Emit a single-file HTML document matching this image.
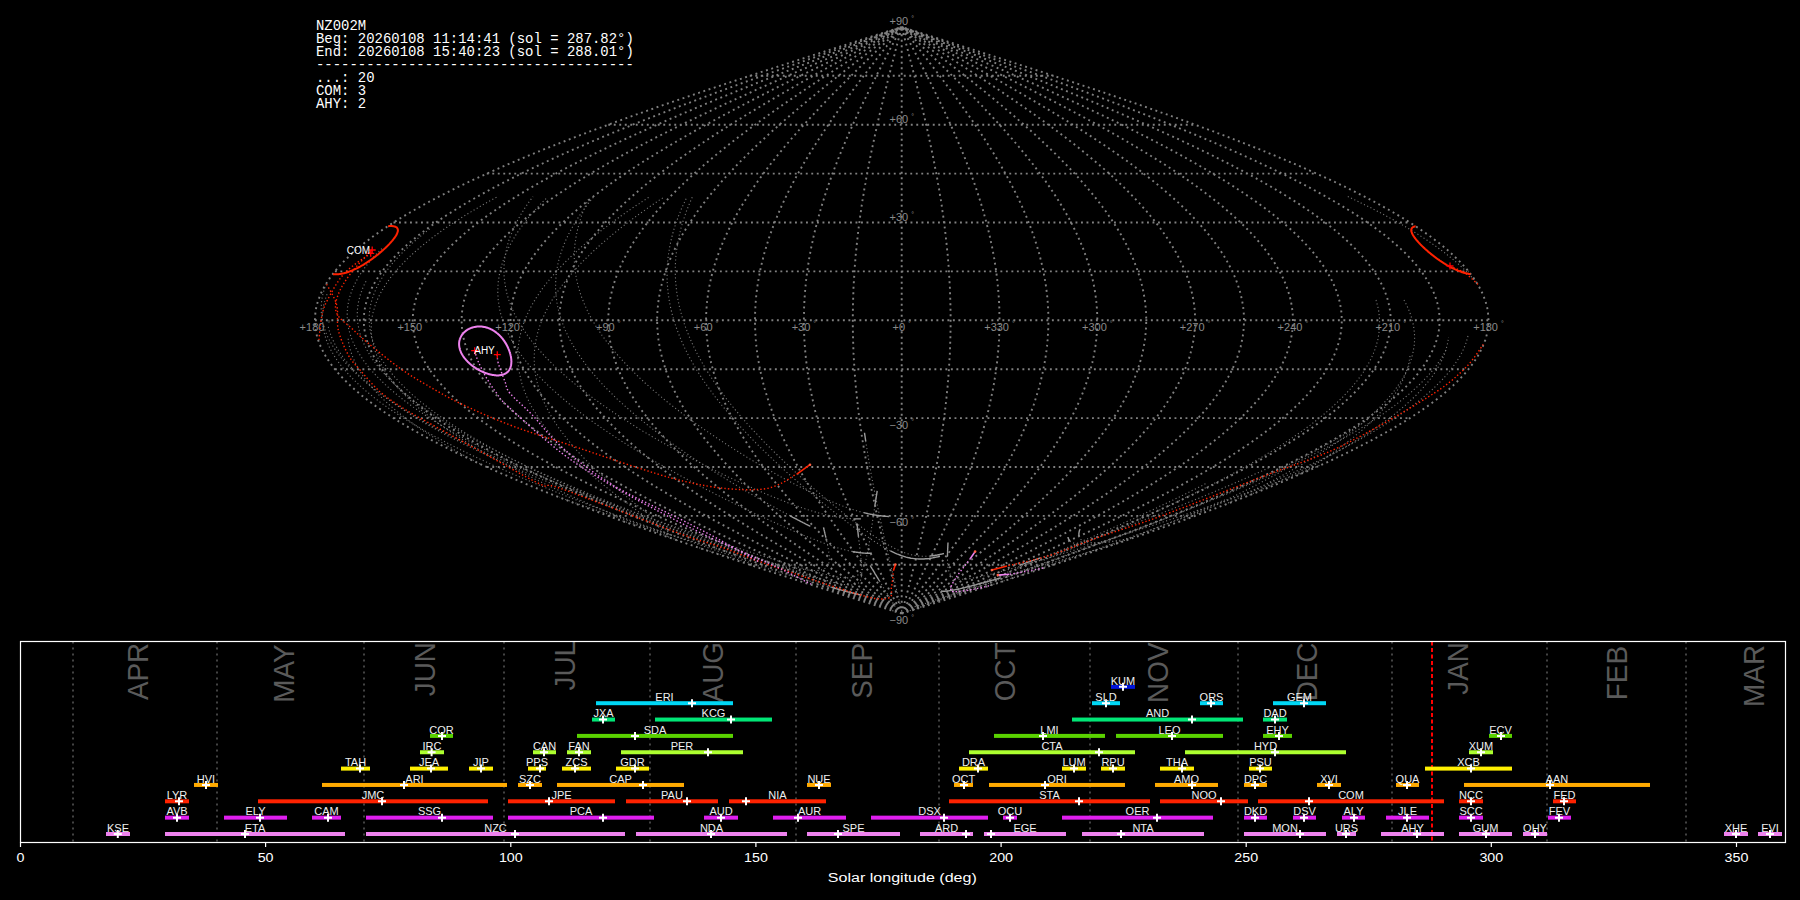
<!DOCTYPE html>
<html><head><meta charset="utf-8"><style>
html,body{margin:0;padding:0;background:#000;width:1800px;height:900px;overflow:hidden}
</style></head><body>
<svg width="1800" height="900" viewBox="0 0 1800 900" style="position:absolute;left:0;top:0">
<path d="M749.8 564.8H1053.6 M608.3 515.9H1195.1 M486.8 467.0H1316.6 M393.5 418.1H1409.9 M334.9 369.2H1468.5 M314.9 320.3H1488.5 M334.9 271.4H1468.5 M393.5 222.5H1409.9 M486.8 173.6H1316.6 M608.3 124.7H1195.1 M749.8 75.8H1053.6 M901.7 613.7 L911.9 610.4 L922.2 607.2 L932.4 603.9 L942.6 600.7 L952.8 597.4 L963.0 594.1 L973.2 590.9 L983.4 587.6 L993.5 584.4 L1003.6 581.1 L1013.7 577.8 L1023.7 574.6 L1033.7 571.3 L1043.7 568.1 L1053.6 564.8 L1063.4 561.5 L1073.3 558.3 L1083.0 555.0 L1092.7 551.8 L1102.4 548.5 L1112.0 545.2 L1121.5 542.0 L1131.0 538.7 L1140.4 535.5 L1149.7 532.2 L1158.9 528.9 L1168.1 525.7 L1177.2 522.4 L1186.2 519.2 L1195.1 515.9 L1203.9 512.6 L1212.7 509.4 L1221.3 506.1 L1229.8 502.9 L1238.3 499.6 L1246.6 496.3 L1254.8 493.1 L1263.0 489.8 L1271.0 486.6 L1278.9 483.3 L1286.7 480.0 L1294.3 476.8 L1301.9 473.5 L1309.3 470.3 L1316.6 467.0 L1323.8 463.7 L1330.9 460.5 L1337.8 457.2 L1344.6 454.0 L1351.2 450.7 L1357.7 447.4 L1364.1 444.2 L1370.3 440.9 L1376.4 437.7 L1382.4 434.4 L1388.2 431.1 L1393.8 427.9 L1399.3 424.6 L1404.7 421.4 L1409.9 418.1 L1414.9 414.8 L1419.8 411.6 L1424.5 408.3 L1429.1 405.1 L1433.5 401.8 L1437.8 398.5 L1441.9 395.3 L1445.8 392.0 L1449.5 388.8 L1453.1 385.5 L1456.5 382.2 L1459.8 379.0 L1462.9 375.7 L1465.8 372.5 L1468.5 369.2 L1471.1 365.9 L1473.5 362.7 L1475.7 359.4 L1477.7 356.2 L1479.6 352.9 L1481.3 349.6 L1482.8 346.4 L1484.1 343.1 L1485.3 339.9 L1486.3 336.6 L1487.1 333.3 L1487.7 330.1 L1488.1 326.8 L1488.4 323.6 L1488.5 320.3 L1488.4 317.0 L1488.1 313.8 L1487.7 310.5 L1487.1 307.3 L1486.3 304.0 L1485.3 300.7 L1484.1 297.5 L1482.8 294.2 L1481.3 291.0 L1479.6 287.7 L1477.7 284.4 L1475.7 281.2 L1473.5 277.9 L1471.1 274.7 L1468.5 271.4 L1465.8 268.1 L1462.9 264.9 L1459.8 261.6 L1456.5 258.4 L1453.1 255.1 L1449.5 251.8 L1445.8 248.6 L1441.9 245.3 L1437.8 242.1 L1433.5 238.8 L1429.1 235.5 L1424.5 232.3 L1419.8 229.0 L1414.9 225.8 L1409.9 222.5 L1404.7 219.2 L1399.3 216.0 L1393.8 212.7 L1388.2 209.5 L1382.4 206.2 L1376.4 202.9 L1370.3 199.7 L1364.1 196.4 L1357.7 193.2 L1351.2 189.9 L1344.6 186.6 L1337.8 183.4 L1330.9 180.1 L1323.8 176.9 L1316.6 173.6 L1309.3 170.3 L1301.9 167.1 L1294.3 163.8 L1286.7 160.6 L1278.9 157.3 L1271.0 154.0 L1263.0 150.8 L1254.8 147.5 L1246.6 144.3 L1238.3 141.0 L1229.8 137.7 L1221.3 134.5 L1212.7 131.2 L1203.9 128.0 L1195.1 124.7 L1186.2 121.4 L1177.2 118.2 L1168.1 114.9 L1158.9 111.7 L1149.7 108.4 L1140.4 105.1 L1131.0 101.9 L1121.5 98.6 L1112.0 95.4 L1102.4 92.1 L1092.7 88.8 L1083.0 85.6 L1073.3 82.3 L1063.4 79.1 L1053.6 75.8 L1043.7 72.5 L1033.7 69.3 L1023.7 66.0 L1013.7 62.8 L1003.6 59.5 L993.5 56.2 L983.4 53.0 L973.2 49.7 L963.0 46.5 L952.8 43.2 L942.6 39.9 L932.4 36.7 L922.2 33.4 L911.9 30.2 L901.7 26.9 M901.7 613.7 L911.1 610.4 L920.5 607.2 L929.9 603.9 L939.2 600.7 L948.6 597.4 L957.9 594.1 L967.3 590.9 L976.6 587.6 L985.8 584.4 L995.1 581.1 L1004.3 577.8 L1013.5 574.6 L1022.7 571.3 L1031.8 568.1 L1040.9 564.8 L1050.0 561.5 L1059.0 558.3 L1067.9 555.0 L1076.8 551.8 L1085.7 548.5 L1094.5 545.2 L1103.2 542.0 L1111.9 538.7 L1120.5 535.5 L1129.0 532.2 L1137.5 528.9 L1145.9 525.7 L1154.2 522.4 L1162.5 519.2 L1170.7 515.9 L1178.7 512.6 L1186.7 509.4 L1194.7 506.1 L1202.5 502.9 L1210.2 499.6 L1217.9 496.3 L1225.4 493.1 L1232.9 489.8 L1240.2 486.6 L1247.5 483.3 L1254.6 480.0 L1261.6 476.8 L1268.5 473.5 L1275.4 470.3 L1282.1 467.0 L1288.6 463.7 L1295.1 460.5 L1301.4 457.2 L1307.7 454.0 L1313.8 450.7 L1319.7 447.4 L1325.6 444.2 L1331.3 440.9 L1336.9 437.7 L1342.3 434.4 L1347.6 431.1 L1352.8 427.9 L1357.9 424.6 L1362.8 421.4 L1367.5 418.1 L1372.2 414.8 L1376.6 411.6 L1381.0 408.3 L1385.2 405.1 L1389.2 401.8 L1393.1 398.5 L1396.8 395.3 L1400.4 392.0 L1403.9 388.8 L1407.2 385.5 L1410.3 382.2 L1413.3 379.0 L1416.1 375.7 L1418.8 372.5 L1421.3 369.2 L1423.6 365.9 L1425.8 362.7 L1427.8 359.4 L1429.7 356.2 L1431.4 352.9 L1433.0 349.6 L1434.4 346.4 L1435.6 343.1 L1436.7 339.9 L1437.6 336.6 L1438.3 333.3 L1438.9 330.1 L1439.3 326.8 L1439.5 323.6 L1439.6 320.3 L1439.5 317.0 L1439.3 313.8 L1438.9 310.5 L1438.3 307.3 L1437.6 304.0 L1436.7 300.7 L1435.6 297.5 L1434.4 294.2 L1433.0 291.0 L1431.4 287.7 L1429.7 284.4 L1427.8 281.2 L1425.8 277.9 L1423.6 274.7 L1421.3 271.4 L1418.8 268.1 L1416.1 264.9 L1413.3 261.6 L1410.3 258.4 L1407.2 255.1 L1403.9 251.8 L1400.4 248.6 L1396.8 245.3 L1393.1 242.1 L1389.2 238.8 L1385.2 235.5 L1381.0 232.3 L1376.6 229.0 L1372.2 225.8 L1367.5 222.5 L1362.8 219.2 L1357.9 216.0 L1352.8 212.7 L1347.6 209.5 L1342.3 206.2 L1336.9 202.9 L1331.3 199.7 L1325.6 196.4 L1319.7 193.2 L1313.8 189.9 L1307.7 186.6 L1301.4 183.4 L1295.1 180.1 L1288.6 176.9 L1282.1 173.6 L1275.4 170.3 L1268.5 167.1 L1261.6 163.8 L1254.6 160.6 L1247.5 157.3 L1240.2 154.0 L1232.9 150.8 L1225.4 147.5 L1217.9 144.3 L1210.2 141.0 L1202.5 137.7 L1194.7 134.5 L1186.7 131.2 L1178.7 128.0 L1170.7 124.7 L1162.5 121.4 L1154.2 118.2 L1145.9 114.9 L1137.5 111.7 L1129.0 108.4 L1120.5 105.1 L1111.9 101.9 L1103.2 98.6 L1094.5 95.4 L1085.7 92.1 L1076.8 88.8 L1067.9 85.6 L1059.0 82.3 L1050.0 79.1 L1040.9 75.8 L1031.8 72.5 L1022.7 69.3 L1013.5 66.0 L1004.3 62.8 L995.1 59.5 L985.8 56.2 L976.6 53.0 L967.3 49.7 L957.9 46.5 L948.6 43.2 L939.2 39.9 L929.9 36.7 L920.5 33.4 L911.1 30.2 L901.7 26.9 M901.7 613.7 L910.2 610.4 L918.8 607.2 L927.3 603.9 L935.8 600.7 L944.3 597.4 L952.8 594.1 L961.3 590.9 L969.8 587.6 L978.2 584.4 L986.6 581.1 L995.0 577.8 L1003.4 574.6 L1011.7 571.3 L1020.0 568.1 L1028.3 564.8 L1036.5 561.5 L1044.7 558.3 L1052.8 555.0 L1060.9 551.8 L1068.9 548.5 L1076.9 545.2 L1084.9 542.0 L1092.8 538.7 L1100.6 535.5 L1108.4 532.2 L1116.1 528.9 L1123.7 525.7 L1131.3 522.4 L1138.8 519.2 L1146.2 515.9 L1153.6 512.6 L1160.8 509.4 L1168.0 506.1 L1175.1 502.9 L1182.2 499.6 L1189.1 496.3 L1196.0 493.1 L1202.8 489.8 L1209.4 486.6 L1216.0 483.3 L1222.5 480.0 L1228.9 476.8 L1235.2 473.5 L1241.4 470.3 L1247.5 467.0 L1253.5 463.7 L1259.3 460.5 L1265.1 457.2 L1270.8 454.0 L1276.3 450.7 L1281.7 447.4 L1287.0 444.2 L1292.2 440.9 L1297.3 437.7 L1302.3 434.4 L1307.1 431.1 L1311.8 427.9 L1316.4 424.6 L1320.9 421.4 L1325.2 418.1 L1329.4 414.8 L1333.5 411.6 L1337.4 408.3 L1341.2 405.1 L1344.9 401.8 L1348.4 398.5 L1351.8 395.3 L1355.1 392.0 L1358.2 388.8 L1361.2 385.5 L1364.1 382.2 L1366.8 379.0 L1369.3 375.7 L1371.8 372.5 L1374.0 369.2 L1376.2 365.9 L1378.2 362.7 L1380.0 359.4 L1381.7 356.2 L1383.3 352.9 L1384.7 349.6 L1385.9 346.4 L1387.1 343.1 L1388.0 339.9 L1388.8 336.6 L1389.5 333.3 L1390.0 330.1 L1390.4 326.8 L1390.6 323.6 L1390.7 320.3 L1390.6 317.0 L1390.4 313.8 L1390.0 310.5 L1389.5 307.3 L1388.8 304.0 L1388.0 300.7 L1387.1 297.5 L1385.9 294.2 L1384.7 291.0 L1383.3 287.7 L1381.7 284.4 L1380.0 281.2 L1378.2 277.9 L1376.2 274.7 L1374.0 271.4 L1371.8 268.1 L1369.3 264.9 L1366.8 261.6 L1364.1 258.4 L1361.2 255.1 L1358.2 251.8 L1355.1 248.6 L1351.8 245.3 L1348.4 242.1 L1344.9 238.8 L1341.2 235.5 L1337.4 232.3 L1333.5 229.0 L1329.4 225.8 L1325.2 222.5 L1320.9 219.2 L1316.4 216.0 L1311.8 212.7 L1307.1 209.5 L1302.3 206.2 L1297.3 202.9 L1292.2 199.7 L1287.0 196.4 L1281.7 193.2 L1276.3 189.9 L1270.8 186.6 L1265.1 183.4 L1259.3 180.1 L1253.5 176.9 L1247.5 173.6 L1241.4 170.3 L1235.2 167.1 L1228.9 163.8 L1222.5 160.6 L1216.0 157.3 L1209.4 154.0 L1202.8 150.8 L1196.0 147.5 L1189.1 144.3 L1182.2 141.0 L1175.1 137.7 L1168.0 134.5 L1160.8 131.2 L1153.6 128.0 L1146.2 124.7 L1138.8 121.4 L1131.3 118.2 L1123.7 114.9 L1116.1 111.7 L1108.4 108.4 L1100.6 105.1 L1092.8 101.9 L1084.9 98.6 L1076.9 95.4 L1068.9 92.1 L1060.9 88.8 L1052.8 85.6 L1044.7 82.3 L1036.5 79.1 L1028.3 75.8 L1020.0 72.5 L1011.7 69.3 L1003.4 66.0 L995.0 62.8 L986.6 59.5 L978.2 56.2 L969.8 53.0 L961.3 49.7 L952.8 46.5 L944.3 43.2 L935.8 39.9 L927.3 36.7 L918.8 33.4 L910.2 30.2 L901.7 26.9 M901.7 613.7 L909.4 610.4 L917.1 607.2 L924.7 603.9 L932.4 600.7 L940.1 597.4 L947.7 594.1 L955.3 590.9 L963.0 587.6 L970.5 584.4 L978.1 581.1 L985.7 577.8 L993.2 574.6 L1000.7 571.3 L1008.2 568.1 L1015.6 564.8 L1023.0 561.5 L1030.4 558.3 L1037.7 555.0 L1045.0 551.8 L1052.2 548.5 L1059.4 545.2 L1066.6 542.0 L1073.7 538.7 L1080.7 535.5 L1087.7 532.2 L1094.6 528.9 L1101.5 525.7 L1108.3 522.4 L1115.1 519.2 L1121.8 515.9 L1128.4 512.6 L1134.9 509.4 L1141.4 506.1 L1147.8 502.9 L1154.1 499.6 L1160.4 496.3 L1166.6 493.1 L1172.7 489.8 L1178.7 486.6 L1184.6 483.3 L1190.4 480.0 L1196.2 476.8 L1201.8 473.5 L1207.4 470.3 L1212.9 467.0 L1218.3 463.7 L1223.6 460.5 L1228.8 457.2 L1233.8 454.0 L1238.8 450.7 L1243.7 447.4 L1248.5 444.2 L1253.2 440.9 L1257.7 437.7 L1262.2 434.4 L1266.6 431.1 L1270.8 427.9 L1274.9 424.6 L1278.9 421.4 L1282.8 418.1 L1286.6 414.8 L1290.3 411.6 L1293.8 408.3 L1297.3 405.1 L1300.6 401.8 L1303.8 398.5 L1306.8 395.3 L1309.8 392.0 L1312.6 388.8 L1315.3 385.5 L1317.8 382.2 L1320.3 379.0 L1322.6 375.7 L1324.8 372.5 L1326.8 369.2 L1328.7 365.9 L1330.5 362.7 L1332.2 359.4 L1333.7 356.2 L1335.1 352.9 L1336.4 349.6 L1337.5 346.4 L1338.5 343.1 L1339.4 339.9 L1340.1 336.6 L1340.7 333.3 L1341.2 330.1 L1341.5 326.8 L1341.7 323.6 L1341.8 320.3 L1341.7 317.0 L1341.5 313.8 L1341.2 310.5 L1340.7 307.3 L1340.1 304.0 L1339.4 300.7 L1338.5 297.5 L1337.5 294.2 L1336.4 291.0 L1335.1 287.7 L1333.7 284.4 L1332.2 281.2 L1330.5 277.9 L1328.7 274.7 L1326.8 271.4 L1324.8 268.1 L1322.6 264.9 L1320.3 261.6 L1317.8 258.4 L1315.3 255.1 L1312.6 251.8 L1309.8 248.6 L1306.8 245.3 L1303.8 242.1 L1300.6 238.8 L1297.3 235.5 L1293.8 232.3 L1290.3 229.0 L1286.6 225.8 L1282.8 222.5 L1278.9 219.2 L1274.9 216.0 L1270.8 212.7 L1266.6 209.5 L1262.2 206.2 L1257.7 202.9 L1253.2 199.7 L1248.5 196.4 L1243.7 193.2 L1238.8 189.9 L1233.8 186.6 L1228.8 183.4 L1223.6 180.1 L1218.3 176.9 L1212.9 173.6 L1207.4 170.3 L1201.8 167.1 L1196.2 163.8 L1190.4 160.6 L1184.6 157.3 L1178.7 154.0 L1172.7 150.8 L1166.6 147.5 L1160.4 144.3 L1154.1 141.0 L1147.8 137.7 L1141.4 134.5 L1134.9 131.2 L1128.4 128.0 L1121.8 124.7 L1115.1 121.4 L1108.3 118.2 L1101.5 114.9 L1094.6 111.7 L1087.7 108.4 L1080.7 105.1 L1073.7 101.9 L1066.6 98.6 L1059.4 95.4 L1052.2 92.1 L1045.0 88.8 L1037.7 85.6 L1030.4 82.3 L1023.0 79.1 L1015.6 75.8 L1008.2 72.5 L1000.7 69.3 L993.2 66.0 L985.7 62.8 L978.1 59.5 L970.5 56.2 L963.0 53.0 L955.3 49.7 L947.7 46.5 L940.1 43.2 L932.4 39.9 L924.7 36.7 L917.1 33.4 L909.4 30.2 L901.7 26.9 M901.7 613.7 L908.5 610.4 L915.4 607.2 L922.2 603.9 L929.0 600.7 L935.8 597.4 L942.6 594.1 L949.4 590.9 L956.1 587.6 L962.9 584.4 L969.6 581.1 L976.3 577.8 L983.0 574.6 L989.7 571.3 L996.3 568.1 L1003.0 564.8 L1009.5 561.5 L1016.1 558.3 L1022.6 555.0 L1029.1 551.8 L1035.5 548.5 L1041.9 545.2 L1048.2 542.0 L1054.6 538.7 L1060.8 535.5 L1067.0 532.2 L1073.2 528.9 L1079.3 525.7 L1085.4 522.4 L1091.4 519.2 L1097.3 515.9 L1103.2 512.6 L1109.0 509.4 L1114.8 506.1 L1120.5 502.9 L1126.1 499.6 L1131.6 496.3 L1137.1 493.1 L1142.5 489.8 L1147.9 486.6 L1153.2 483.3 L1158.4 480.0 L1163.5 476.8 L1168.5 473.5 L1173.5 470.3 L1178.3 467.0 L1183.1 463.7 L1187.8 460.5 L1192.4 457.2 L1196.9 454.0 L1201.4 450.7 L1205.7 447.4 L1210.0 444.2 L1214.1 440.9 L1218.2 437.7 L1222.2 434.4 L1226.0 431.1 L1229.8 427.9 L1233.5 424.6 L1237.0 421.4 L1240.5 418.1 L1243.9 414.8 L1247.1 411.6 L1250.3 408.3 L1253.3 405.1 L1256.2 401.8 L1259.1 398.5 L1261.8 395.3 L1264.4 392.0 L1266.9 388.8 L1269.3 385.5 L1271.6 382.2 L1273.8 379.0 L1275.8 375.7 L1277.7 372.5 L1279.6 369.2 L1281.3 365.9 L1282.9 362.7 L1284.4 359.4 L1285.7 356.2 L1287.0 352.9 L1288.1 349.6 L1289.1 346.4 L1290.0 343.1 L1290.8 339.9 L1291.4 336.6 L1291.9 333.3 L1292.4 330.1 L1292.7 326.8 L1292.8 323.6 L1292.9 320.3 L1292.8 317.0 L1292.7 313.8 L1292.4 310.5 L1291.9 307.3 L1291.4 304.0 L1290.8 300.7 L1290.0 297.5 L1289.1 294.2 L1288.1 291.0 L1287.0 287.7 L1285.7 284.4 L1284.4 281.2 L1282.9 277.9 L1281.3 274.7 L1279.6 271.4 L1277.7 268.1 L1275.8 264.9 L1273.8 261.6 L1271.6 258.4 L1269.3 255.1 L1266.9 251.8 L1264.4 248.6 L1261.8 245.3 L1259.1 242.1 L1256.2 238.8 L1253.3 235.5 L1250.3 232.3 L1247.1 229.0 L1243.9 225.8 L1240.5 222.5 L1237.0 219.2 L1233.5 216.0 L1229.8 212.7 L1226.0 209.5 L1222.2 206.2 L1218.2 202.9 L1214.1 199.7 L1210.0 196.4 L1205.7 193.2 L1201.4 189.9 L1196.9 186.6 L1192.4 183.4 L1187.8 180.1 L1183.1 176.9 L1178.3 173.6 L1173.5 170.3 L1168.5 167.1 L1163.5 163.8 L1158.4 160.6 L1153.2 157.3 L1147.9 154.0 L1142.5 150.8 L1137.1 147.5 L1131.6 144.3 L1126.1 141.0 L1120.5 137.7 L1114.8 134.5 L1109.0 131.2 L1103.2 128.0 L1097.3 124.7 L1091.4 121.4 L1085.4 118.2 L1079.3 114.9 L1073.2 111.7 L1067.0 108.4 L1060.8 105.1 L1054.6 101.9 L1048.2 98.6 L1041.9 95.4 L1035.5 92.1 L1029.1 88.8 L1022.6 85.6 L1016.1 82.3 L1009.5 79.1 L1003.0 75.8 L996.3 72.5 L989.7 69.3 L983.0 66.0 L976.3 62.8 L969.6 59.5 L962.9 56.2 L956.1 53.0 L949.4 49.7 L942.6 46.5 L935.8 43.2 L929.0 39.9 L922.2 36.7 L915.4 33.4 L908.5 30.2 L901.7 26.9 M901.7 613.7 L907.7 610.4 L913.6 607.2 L919.6 603.9 L925.6 600.7 L931.5 597.4 L937.5 594.1 L943.4 590.9 L949.3 587.6 L955.2 584.4 L961.1 581.1 L967.0 577.8 L972.9 574.6 L978.7 571.3 L984.5 568.1 L990.3 564.8 L996.1 561.5 L1001.8 558.3 L1007.5 555.0 L1013.1 551.8 L1018.8 548.5 L1024.4 545.2 L1029.9 542.0 L1035.4 538.7 L1040.9 535.5 L1046.4 532.2 L1051.8 528.9 L1057.1 525.7 L1062.4 522.4 L1067.7 519.2 L1072.9 515.9 L1078.0 512.6 L1083.1 509.4 L1088.1 506.1 L1093.1 502.9 L1098.0 499.6 L1102.9 496.3 L1107.7 493.1 L1112.4 489.8 L1117.1 486.6 L1121.7 483.3 L1126.3 480.0 L1130.7 476.8 L1135.1 473.5 L1139.5 470.3 L1143.7 467.0 L1147.9 463.7 L1152.0 460.5 L1156.1 457.2 L1160.0 454.0 L1163.9 450.7 L1167.7 447.4 L1171.4 444.2 L1175.1 440.9 L1178.6 437.7 L1182.1 434.4 L1185.5 431.1 L1188.8 427.9 L1192.0 424.6 L1195.1 421.4 L1198.1 418.1 L1201.1 414.8 L1203.9 411.6 L1206.7 408.3 L1209.4 405.1 L1211.9 401.8 L1214.4 398.5 L1216.8 395.3 L1219.1 392.0 L1221.3 388.8 L1223.4 385.5 L1225.4 382.2 L1227.2 379.0 L1229.0 375.7 L1230.7 372.5 L1232.3 369.2 L1233.8 365.9 L1235.2 362.7 L1236.5 359.4 L1237.7 356.2 L1238.8 352.9 L1239.8 349.6 L1240.7 346.4 L1241.4 343.1 L1242.1 339.9 L1242.7 336.6 L1243.2 333.3 L1243.5 330.1 L1243.8 326.8 L1243.9 323.6 L1244.0 320.3 L1243.9 317.0 L1243.8 313.8 L1243.5 310.5 L1243.2 307.3 L1242.7 304.0 L1242.1 300.7 L1241.4 297.5 L1240.7 294.2 L1239.8 291.0 L1238.8 287.7 L1237.7 284.4 L1236.5 281.2 L1235.2 277.9 L1233.8 274.7 L1232.3 271.4 L1230.7 268.1 L1229.0 264.9 L1227.2 261.6 L1225.4 258.4 L1223.4 255.1 L1221.3 251.8 L1219.1 248.6 L1216.8 245.3 L1214.4 242.1 L1211.9 238.8 L1209.4 235.5 L1206.7 232.3 L1203.9 229.0 L1201.1 225.8 L1198.1 222.5 L1195.1 219.2 L1192.0 216.0 L1188.8 212.7 L1185.5 209.5 L1182.1 206.2 L1178.6 202.9 L1175.1 199.7 L1171.4 196.4 L1167.7 193.2 L1163.9 189.9 L1160.0 186.6 L1156.1 183.4 L1152.0 180.1 L1147.9 176.9 L1143.7 173.6 L1139.5 170.3 L1135.1 167.1 L1130.7 163.8 L1126.3 160.6 L1121.7 157.3 L1117.1 154.0 L1112.4 150.8 L1107.7 147.5 L1102.9 144.3 L1098.0 141.0 L1093.1 137.7 L1088.1 134.5 L1083.1 131.2 L1078.0 128.0 L1072.9 124.7 L1067.7 121.4 L1062.4 118.2 L1057.1 114.9 L1051.8 111.7 L1046.4 108.4 L1040.9 105.1 L1035.4 101.9 L1029.9 98.6 L1024.4 95.4 L1018.8 92.1 L1013.1 88.8 L1007.5 85.6 L1001.8 82.3 L996.1 79.1 L990.3 75.8 L984.5 72.5 L978.7 69.3 L972.9 66.0 L967.0 62.8 L961.1 59.5 L955.2 56.2 L949.3 53.0 L943.4 49.7 L937.5 46.5 L931.5 43.2 L925.6 39.9 L919.6 36.7 L913.6 33.4 L907.7 30.2 L901.7 26.9 M901.7 613.7 L906.8 610.4 L911.9 607.2 L917.1 603.9 L922.2 600.7 L927.3 597.4 L932.4 594.1 L937.5 590.9 L942.5 587.6 L947.6 584.4 L952.6 581.1 L957.7 577.8 L962.7 574.6 L967.7 571.3 L972.7 568.1 L977.6 564.8 L982.6 561.5 L987.5 558.3 L992.4 555.0 L997.2 551.8 L1002.0 548.5 L1006.8 545.2 L1011.6 542.0 L1016.3 538.7 L1021.0 535.5 L1025.7 532.2 L1030.3 528.9 L1034.9 525.7 L1039.4 522.4 L1043.9 519.2 L1048.4 515.9 L1052.8 512.6 L1057.2 509.4 L1061.5 506.1 L1065.8 502.9 L1070.0 499.6 L1074.2 496.3 L1078.3 493.1 L1082.3 489.8 L1086.3 486.6 L1090.3 483.3 L1094.2 480.0 L1098.0 476.8 L1101.8 473.5 L1105.5 470.3 L1109.2 467.0 L1112.8 463.7 L1116.3 460.5 L1119.7 457.2 L1123.1 454.0 L1126.5 450.7 L1129.7 447.4 L1132.9 444.2 L1136.0 440.9 L1139.1 437.7 L1142.0 434.4 L1144.9 431.1 L1147.8 427.9 L1150.5 424.6 L1153.2 421.4 L1155.8 418.1 L1158.3 414.8 L1160.8 411.6 L1163.1 408.3 L1165.4 405.1 L1167.6 401.8 L1169.7 398.5 L1171.8 395.3 L1173.7 392.0 L1175.6 388.8 L1177.4 385.5 L1179.1 382.2 L1180.7 379.0 L1182.3 375.7 L1183.7 372.5 L1185.1 369.2 L1186.4 365.9 L1187.6 362.7 L1188.7 359.4 L1189.7 356.2 L1190.6 352.9 L1191.5 349.6 L1192.2 346.4 L1192.9 343.1 L1193.5 339.9 L1194.0 336.6 L1194.4 333.3 L1194.7 330.1 L1194.9 326.8 L1195.1 323.6 L1195.1 320.3 L1195.1 317.0 L1194.9 313.8 L1194.7 310.5 L1194.4 307.3 L1194.0 304.0 L1193.5 300.7 L1192.9 297.5 L1192.2 294.2 L1191.5 291.0 L1190.6 287.7 L1189.7 284.4 L1188.7 281.2 L1187.6 277.9 L1186.4 274.7 L1185.1 271.4 L1183.7 268.1 L1182.3 264.9 L1180.7 261.6 L1179.1 258.4 L1177.4 255.1 L1175.6 251.8 L1173.7 248.6 L1171.8 245.3 L1169.7 242.1 L1167.6 238.8 L1165.4 235.5 L1163.1 232.3 L1160.8 229.0 L1158.3 225.8 L1155.8 222.5 L1153.2 219.2 L1150.5 216.0 L1147.8 212.7 L1144.9 209.5 L1142.0 206.2 L1139.1 202.9 L1136.0 199.7 L1132.9 196.4 L1129.7 193.2 L1126.5 189.9 L1123.1 186.6 L1119.7 183.4 L1116.3 180.1 L1112.8 176.9 L1109.2 173.6 L1105.5 170.3 L1101.8 167.1 L1098.0 163.8 L1094.2 160.6 L1090.3 157.3 L1086.3 154.0 L1082.3 150.8 L1078.3 147.5 L1074.2 144.3 L1070.0 141.0 L1065.8 137.7 L1061.5 134.5 L1057.2 131.2 L1052.8 128.0 L1048.4 124.7 L1043.9 121.4 L1039.4 118.2 L1034.9 114.9 L1030.3 111.7 L1025.7 108.4 L1021.0 105.1 L1016.3 101.9 L1011.6 98.6 L1006.8 95.4 L1002.0 92.1 L997.2 88.8 L992.4 85.6 L987.5 82.3 L982.6 79.1 L977.6 75.8 L972.7 72.5 L967.7 69.3 L962.7 66.0 L957.7 62.8 L952.6 59.5 L947.6 56.2 L942.5 53.0 L937.5 49.7 L932.4 46.5 L927.3 43.2 L922.2 39.9 L917.1 36.7 L911.9 33.4 L906.8 30.2 L901.7 26.9 M901.7 613.7 L906.0 610.4 L910.2 607.2 L914.5 603.9 L918.8 600.7 L923.0 597.4 L927.3 594.1 L931.5 590.9 L935.7 587.6 L939.9 584.4 L944.2 581.1 L948.4 577.8 L952.5 574.6 L956.7 571.3 L960.8 568.1 L965.0 564.8 L969.1 561.5 L973.2 558.3 L977.3 555.0 L981.3 551.8 L985.3 548.5 L989.3 545.2 L993.3 542.0 L997.2 538.7 L1001.1 535.5 L1005.0 532.2 L1008.9 528.9 L1012.7 525.7 L1016.5 522.4 L1020.2 519.2 L1024.0 515.9 L1027.6 512.6 L1031.3 509.4 L1034.9 506.1 L1038.4 502.9 L1041.9 499.6 L1045.4 496.3 L1048.8 493.1 L1052.2 489.8 L1055.6 486.6 L1058.9 483.3 L1062.1 480.0 L1065.3 476.8 L1068.4 473.5 L1071.5 470.3 L1074.6 467.0 L1077.6 463.7 L1080.5 460.5 L1083.4 457.2 L1086.2 454.0 L1089.0 450.7 L1091.7 447.4 L1094.4 444.2 L1097.0 440.9 L1099.5 437.7 L1102.0 434.4 L1104.4 431.1 L1106.8 427.9 L1109.0 424.6 L1111.3 421.4 L1113.4 418.1 L1115.5 414.8 L1117.6 411.6 L1119.6 408.3 L1121.5 405.1 L1123.3 401.8 L1125.1 398.5 L1126.8 395.3 L1128.4 392.0 L1130.0 388.8 L1131.5 385.5 L1132.9 382.2 L1134.2 379.0 L1135.5 375.7 L1136.7 372.5 L1137.9 369.2 L1138.9 365.9 L1139.9 362.7 L1140.9 359.4 L1141.7 356.2 L1142.5 352.9 L1143.2 349.6 L1143.8 346.4 L1144.4 343.1 L1144.9 339.9 L1145.3 336.6 L1145.6 333.3 L1145.9 330.1 L1146.1 326.8 L1146.2 323.6 L1146.2 320.3 L1146.2 317.0 L1146.1 313.8 L1145.9 310.5 L1145.6 307.3 L1145.3 304.0 L1144.9 300.7 L1144.4 297.5 L1143.8 294.2 L1143.2 291.0 L1142.5 287.7 L1141.7 284.4 L1140.9 281.2 L1139.9 277.9 L1138.9 274.7 L1137.9 271.4 L1136.7 268.1 L1135.5 264.9 L1134.2 261.6 L1132.9 258.4 L1131.5 255.1 L1130.0 251.8 L1128.4 248.6 L1126.8 245.3 L1125.1 242.1 L1123.3 238.8 L1121.5 235.5 L1119.6 232.3 L1117.6 229.0 L1115.5 225.8 L1113.4 222.5 L1111.3 219.2 L1109.0 216.0 L1106.8 212.7 L1104.4 209.5 L1102.0 206.2 L1099.5 202.9 L1097.0 199.7 L1094.4 196.4 L1091.7 193.2 L1089.0 189.9 L1086.2 186.6 L1083.4 183.4 L1080.5 180.1 L1077.6 176.9 L1074.6 173.6 L1071.5 170.3 L1068.4 167.1 L1065.3 163.8 L1062.1 160.6 L1058.9 157.3 L1055.6 154.0 L1052.2 150.8 L1048.8 147.5 L1045.4 144.3 L1041.9 141.0 L1038.4 137.7 L1034.9 134.5 L1031.3 131.2 L1027.6 128.0 L1024.0 124.7 L1020.2 121.4 L1016.5 118.2 L1012.7 114.9 L1008.9 111.7 L1005.0 108.4 L1001.1 105.1 L997.2 101.9 L993.3 98.6 L989.3 95.4 L985.3 92.1 L981.3 88.8 L977.3 85.6 L973.2 82.3 L969.1 79.1 L965.0 75.8 L960.8 72.5 L956.7 69.3 L952.5 66.0 L948.4 62.8 L944.2 59.5 L939.9 56.2 L935.7 53.0 L931.5 49.7 L927.3 46.5 L923.0 43.2 L918.8 39.9 L914.5 36.7 L910.2 33.4 L906.0 30.2 L901.7 26.9 M901.7 613.7 L905.1 610.4 L908.5 607.2 L911.9 603.9 L915.3 600.7 L918.7 597.4 L922.1 594.1 L925.5 590.9 L928.9 587.6 L932.3 584.4 L935.7 581.1 L939.0 577.8 L942.4 574.6 L945.7 571.3 L949.0 568.1 L952.3 564.8 L955.6 561.5 L958.9 558.3 L962.1 555.0 L965.4 551.8 L968.6 548.5 L971.8 545.2 L975.0 542.0 L978.1 538.7 L981.3 535.5 L984.4 532.2 L987.4 528.9 L990.5 525.7 L993.5 522.4 L996.5 519.2 L999.5 515.9 L1002.4 512.6 L1005.4 509.4 L1008.2 506.1 L1011.1 502.9 L1013.9 499.6 L1016.7 496.3 L1019.4 493.1 L1022.1 489.8 L1024.8 486.6 L1027.4 483.3 L1030.0 480.0 L1032.6 476.8 L1035.1 473.5 L1037.6 470.3 L1040.0 467.0 L1042.4 463.7 L1044.8 460.5 L1047.1 457.2 L1049.3 454.0 L1051.5 450.7 L1053.7 447.4 L1055.8 444.2 L1057.9 440.9 L1059.9 437.7 L1061.9 434.4 L1063.9 431.1 L1065.7 427.9 L1067.6 424.6 L1069.4 421.4 L1071.1 418.1 L1072.8 414.8 L1074.4 411.6 L1076.0 408.3 L1077.5 405.1 L1079.0 401.8 L1080.4 398.5 L1081.8 395.3 L1083.1 392.0 L1084.3 388.8 L1085.5 385.5 L1086.6 382.2 L1087.7 379.0 L1088.8 375.7 L1089.7 372.5 L1090.6 369.2 L1091.5 365.9 L1092.3 362.7 L1093.0 359.4 L1093.7 356.2 L1094.3 352.9 L1094.9 349.6 L1095.4 346.4 L1095.8 343.1 L1096.2 339.9 L1096.6 336.6 L1096.8 333.3 L1097.0 330.1 L1097.2 326.8 L1097.3 323.6 L1097.3 320.3 L1097.3 317.0 L1097.2 313.8 L1097.0 310.5 L1096.8 307.3 L1096.6 304.0 L1096.2 300.7 L1095.8 297.5 L1095.4 294.2 L1094.9 291.0 L1094.3 287.7 L1093.7 284.4 L1093.0 281.2 L1092.3 277.9 L1091.5 274.7 L1090.6 271.4 L1089.7 268.1 L1088.8 264.9 L1087.7 261.6 L1086.6 258.4 L1085.5 255.1 L1084.3 251.8 L1083.1 248.6 L1081.8 245.3 L1080.4 242.1 L1079.0 238.8 L1077.5 235.5 L1076.0 232.3 L1074.4 229.0 L1072.8 225.8 L1071.1 222.5 L1069.4 219.2 L1067.6 216.0 L1065.7 212.7 L1063.9 209.5 L1061.9 206.2 L1059.9 202.9 L1057.9 199.7 L1055.8 196.4 L1053.7 193.2 L1051.5 189.9 L1049.3 186.6 L1047.1 183.4 L1044.8 180.1 L1042.4 176.9 L1040.0 173.6 L1037.6 170.3 L1035.1 167.1 L1032.6 163.8 L1030.0 160.6 L1027.4 157.3 L1024.8 154.0 L1022.1 150.8 L1019.4 147.5 L1016.7 144.3 L1013.9 141.0 L1011.1 137.7 L1008.2 134.5 L1005.4 131.2 L1002.4 128.0 L999.5 124.7 L996.5 121.4 L993.5 118.2 L990.5 114.9 L987.4 111.7 L984.4 108.4 L981.3 105.1 L978.1 101.9 L975.0 98.6 L971.8 95.4 L968.6 92.1 L965.4 88.8 L962.1 85.6 L958.9 82.3 L955.6 79.1 L952.3 75.8 L949.0 72.5 L945.7 69.3 L942.4 66.0 L939.0 62.8 L935.7 59.5 L932.3 56.2 L928.9 53.0 L925.5 49.7 L922.1 46.5 L918.7 43.2 L915.3 39.9 L911.9 36.7 L908.5 33.4 L905.1 30.2 L901.7 26.9 M901.7 613.7 L904.3 610.4 L906.8 607.2 L909.4 603.9 L911.9 600.7 L914.5 597.4 L917.0 594.1 L919.6 590.9 L922.1 587.6 L924.6 584.4 L927.2 581.1 L929.7 577.8 L932.2 574.6 L934.7 571.3 L937.2 568.1 L939.7 564.8 L942.1 561.5 L944.6 558.3 L947.0 555.0 L949.5 551.8 L951.9 548.5 L954.3 545.2 L956.7 542.0 L959.0 538.7 L961.4 535.5 L963.7 532.2 L966.0 528.9 L968.3 525.7 L970.6 522.4 L972.8 519.2 L975.1 515.9 L977.3 512.6 L979.4 509.4 L981.6 506.1 L983.7 502.9 L985.8 499.6 L987.9 496.3 L990.0 493.1 L992.0 489.8 L994.0 486.6 L996.0 483.3 L997.9 480.0 L999.9 476.8 L1001.7 473.5 L1003.6 470.3 L1005.4 467.0 L1007.2 463.7 L1009.0 460.5 L1010.7 457.2 L1012.4 454.0 L1014.1 450.7 L1015.7 447.4 L1017.3 444.2 L1018.9 440.9 L1020.4 437.7 L1021.9 434.4 L1023.3 431.1 L1024.7 427.9 L1026.1 424.6 L1027.4 421.4 L1028.7 418.1 L1030.0 414.8 L1031.2 411.6 L1032.4 408.3 L1033.6 405.1 L1034.7 401.8 L1035.7 398.5 L1036.7 395.3 L1037.7 392.0 L1038.7 388.8 L1039.6 385.5 L1040.4 382.2 L1041.2 379.0 L1042.0 375.7 L1042.7 372.5 L1043.4 369.2 L1044.0 365.9 L1044.6 362.7 L1045.2 359.4 L1045.7 356.2 L1046.2 352.9 L1046.6 349.6 L1047.0 346.4 L1047.3 343.1 L1047.6 339.9 L1047.8 336.6 L1048.0 333.3 L1048.2 330.1 L1048.3 326.8 L1048.4 323.6 L1048.4 320.3 L1048.4 317.0 L1048.3 313.8 L1048.2 310.5 L1048.0 307.3 L1047.8 304.0 L1047.6 300.7 L1047.3 297.5 L1047.0 294.2 L1046.6 291.0 L1046.2 287.7 L1045.7 284.4 L1045.2 281.2 L1044.6 277.9 L1044.0 274.7 L1043.4 271.4 L1042.7 268.1 L1042.0 264.9 L1041.2 261.6 L1040.4 258.4 L1039.6 255.1 L1038.7 251.8 L1037.7 248.6 L1036.7 245.3 L1035.7 242.1 L1034.7 238.8 L1033.6 235.5 L1032.4 232.3 L1031.2 229.0 L1030.0 225.8 L1028.7 222.5 L1027.4 219.2 L1026.1 216.0 L1024.7 212.7 L1023.3 209.5 L1021.9 206.2 L1020.4 202.9 L1018.9 199.7 L1017.3 196.4 L1015.7 193.2 L1014.1 189.9 L1012.4 186.6 L1010.7 183.4 L1009.0 180.1 L1007.2 176.9 L1005.4 173.6 L1003.6 170.3 L1001.7 167.1 L999.9 163.8 L997.9 160.6 L996.0 157.3 L994.0 154.0 L992.0 150.8 L990.0 147.5 L987.9 144.3 L985.8 141.0 L983.7 137.7 L981.6 134.5 L979.4 131.2 L977.3 128.0 L975.1 124.7 L972.8 121.4 L970.6 118.2 L968.3 114.9 L966.0 111.7 L963.7 108.4 L961.4 105.1 L959.0 101.9 L956.7 98.6 L954.3 95.4 L951.9 92.1 L949.5 88.8 L947.0 85.6 L944.6 82.3 L942.1 79.1 L939.7 75.8 L937.2 72.5 L934.7 69.3 L932.2 66.0 L929.7 62.8 L927.2 59.5 L924.6 56.2 L922.1 53.0 L919.6 49.7 L917.0 46.5 L914.5 43.2 L911.9 39.9 L909.4 36.7 L906.8 33.4 L904.3 30.2 L901.7 26.9 M901.7 613.7 L903.4 610.4 L905.1 607.2 L906.8 603.9 L908.5 600.7 L910.2 597.4 L911.9 594.1 L913.6 590.9 L915.3 587.6 L917.0 584.4 L918.7 581.1 L920.4 577.8 L922.0 574.6 L923.7 571.3 L925.4 568.1 L927.0 564.8 L928.7 561.5 L930.3 558.3 L931.9 555.0 L933.5 551.8 L935.1 548.5 L936.7 545.2 L938.3 542.0 L939.9 538.7 L941.5 535.5 L943.0 532.2 L944.6 528.9 L946.1 525.7 L947.6 522.4 L949.1 519.2 L950.6 515.9 L952.1 512.6 L953.5 509.4 L955.0 506.1 L956.4 502.9 L957.8 499.6 L959.2 496.3 L960.6 493.1 L961.9 489.8 L963.2 486.6 L964.6 483.3 L965.9 480.0 L967.1 476.8 L968.4 473.5 L969.6 470.3 L970.9 467.0 L972.1 463.7 L973.2 460.5 L974.4 457.2 L975.5 454.0 L976.6 450.7 L977.7 447.4 L978.8 444.2 L979.8 440.9 L980.8 437.7 L981.8 434.4 L982.8 431.1 L983.7 427.9 L984.6 424.6 L985.5 421.4 L986.4 418.1 L987.2 414.8 L988.1 411.6 L988.8 408.3 L989.6 405.1 L990.3 401.8 L991.0 398.5 L991.7 395.3 L992.4 392.0 L993.0 388.8 L993.6 385.5 L994.2 382.2 L994.7 379.0 L995.2 375.7 L995.7 372.5 L996.2 369.2 L996.6 365.9 L997.0 362.7 L997.4 359.4 L997.7 356.2 L998.0 352.9 L998.3 349.6 L998.5 346.4 L998.8 343.1 L999.0 339.9 L999.1 336.6 L999.3 333.3 L999.4 330.1 L999.4 326.8 L999.5 323.6 L999.5 320.3 L999.5 317.0 L999.4 313.8 L999.4 310.5 L999.3 307.3 L999.1 304.0 L999.0 300.7 L998.8 297.5 L998.5 294.2 L998.3 291.0 L998.0 287.7 L997.7 284.4 L997.4 281.2 L997.0 277.9 L996.6 274.7 L996.2 271.4 L995.7 268.1 L995.2 264.9 L994.7 261.6 L994.2 258.4 L993.6 255.1 L993.0 251.8 L992.4 248.6 L991.7 245.3 L991.0 242.1 L990.3 238.8 L989.6 235.5 L988.8 232.3 L988.1 229.0 L987.2 225.8 L986.4 222.5 L985.5 219.2 L984.6 216.0 L983.7 212.7 L982.8 209.5 L981.8 206.2 L980.8 202.9 L979.8 199.7 L978.8 196.4 L977.7 193.2 L976.6 189.9 L975.5 186.6 L974.4 183.4 L973.2 180.1 L972.1 176.9 L970.9 173.6 L969.6 170.3 L968.4 167.1 L967.1 163.8 L965.9 160.6 L964.6 157.3 L963.2 154.0 L961.9 150.8 L960.6 147.5 L959.2 144.3 L957.8 141.0 L956.4 137.7 L955.0 134.5 L953.5 131.2 L952.1 128.0 L950.6 124.7 L949.1 121.4 L947.6 118.2 L946.1 114.9 L944.6 111.7 L943.0 108.4 L941.5 105.1 L939.9 101.9 L938.3 98.6 L936.7 95.4 L935.1 92.1 L933.5 88.8 L931.9 85.6 L930.3 82.3 L928.7 79.1 L927.0 75.8 L925.4 72.5 L923.7 69.3 L922.0 66.0 L920.4 62.8 L918.7 59.5 L917.0 56.2 L915.3 53.0 L913.6 49.7 L911.9 46.5 L910.2 43.2 L908.5 39.9 L906.8 36.7 L905.1 33.4 L903.4 30.2 L901.7 26.9 M901.7 613.7 L902.6 610.4 L903.4 607.2 L904.3 603.9 L905.1 600.7 L906.0 597.4 L906.8 594.1 L907.7 590.9 L908.5 587.6 L909.3 584.4 L910.2 581.1 L911.0 577.8 L911.9 574.6 L912.7 571.3 L913.5 568.1 L914.4 564.8 L915.2 561.5 L916.0 558.3 L916.8 555.0 L917.6 551.8 L918.4 548.5 L919.2 545.2 L920.0 542.0 L920.8 538.7 L921.6 535.5 L922.4 532.2 L923.1 528.9 L923.9 525.7 L924.7 522.4 L925.4 519.2 L926.2 515.9 L926.9 512.6 L927.6 509.4 L928.3 506.1 L929.0 502.9 L929.7 499.6 L930.4 496.3 L931.1 493.1 L931.8 489.8 L932.5 486.6 L933.1 483.3 L933.8 480.0 L934.4 476.8 L935.0 473.5 L935.7 470.3 L936.3 467.0 L936.9 463.7 L937.5 460.5 L938.0 457.2 L938.6 454.0 L939.2 450.7 L939.7 447.4 L940.2 444.2 L940.8 440.9 L941.3 437.7 L941.8 434.4 L942.2 431.1 L942.7 427.9 L943.2 424.6 L943.6 421.4 L944.0 418.1 L944.5 414.8 L944.9 411.6 L945.3 408.3 L945.7 405.1 L946.0 401.8 L946.4 398.5 L946.7 395.3 L947.0 392.0 L947.4 388.8 L947.7 385.5 L947.9 382.2 L948.2 379.0 L948.5 375.7 L948.7 372.5 L948.9 369.2 L949.1 365.9 L949.3 362.7 L949.5 359.4 L949.7 356.2 L949.9 352.9 L950.0 349.6 L950.1 346.4 L950.2 343.1 L950.3 339.9 L950.4 336.6 L950.5 333.3 L950.5 330.1 L950.6 326.8 L950.6 323.6 L950.6 320.3 L950.6 317.0 L950.6 313.8 L950.5 310.5 L950.5 307.3 L950.4 304.0 L950.3 300.7 L950.2 297.5 L950.1 294.2 L950.0 291.0 L949.9 287.7 L949.7 284.4 L949.5 281.2 L949.3 277.9 L949.1 274.7 L948.9 271.4 L948.7 268.1 L948.5 264.9 L948.2 261.6 L947.9 258.4 L947.7 255.1 L947.4 251.8 L947.0 248.6 L946.7 245.3 L946.4 242.1 L946.0 238.8 L945.7 235.5 L945.3 232.3 L944.9 229.0 L944.5 225.8 L944.0 222.5 L943.6 219.2 L943.2 216.0 L942.7 212.7 L942.2 209.5 L941.8 206.2 L941.3 202.9 L940.8 199.7 L940.2 196.4 L939.7 193.2 L939.2 189.9 L938.6 186.6 L938.0 183.4 L937.5 180.1 L936.9 176.9 L936.3 173.6 L935.7 170.3 L935.0 167.1 L934.4 163.8 L933.8 160.6 L933.1 157.3 L932.5 154.0 L931.8 150.8 L931.1 147.5 L930.4 144.3 L929.7 141.0 L929.0 137.7 L928.3 134.5 L927.6 131.2 L926.9 128.0 L926.2 124.7 L925.4 121.4 L924.7 118.2 L923.9 114.9 L923.1 111.7 L922.4 108.4 L921.6 105.1 L920.8 101.9 L920.0 98.6 L919.2 95.4 L918.4 92.1 L917.6 88.8 L916.8 85.6 L916.0 82.3 L915.2 79.1 L914.4 75.8 L913.5 72.5 L912.7 69.3 L911.9 66.0 L911.0 62.8 L910.2 59.5 L909.3 56.2 L908.5 53.0 L907.7 49.7 L906.8 46.5 L906.0 43.2 L905.1 39.9 L904.3 36.7 L903.4 33.4 L902.6 30.2 L901.7 26.9 M901.7 613.7 L901.7 610.4 L901.7 607.2 L901.7 603.9 L901.7 600.7 L901.7 597.4 L901.7 594.1 L901.7 590.9 L901.7 587.6 L901.7 584.4 L901.7 581.1 L901.7 577.8 L901.7 574.6 L901.7 571.3 L901.7 568.1 L901.7 564.8 L901.7 561.5 L901.7 558.3 L901.7 555.0 L901.7 551.8 L901.7 548.5 L901.7 545.2 L901.7 542.0 L901.7 538.7 L901.7 535.5 L901.7 532.2 L901.7 528.9 L901.7 525.7 L901.7 522.4 L901.7 519.2 L901.7 515.9 L901.7 512.6 L901.7 509.4 L901.7 506.1 L901.7 502.9 L901.7 499.6 L901.7 496.3 L901.7 493.1 L901.7 489.8 L901.7 486.6 L901.7 483.3 L901.7 480.0 L901.7 476.8 L901.7 473.5 L901.7 470.3 L901.7 467.0 L901.7 463.7 L901.7 460.5 L901.7 457.2 L901.7 454.0 L901.7 450.7 L901.7 447.4 L901.7 444.2 L901.7 440.9 L901.7 437.7 L901.7 434.4 L901.7 431.1 L901.7 427.9 L901.7 424.6 L901.7 421.4 L901.7 418.1 L901.7 414.8 L901.7 411.6 L901.7 408.3 L901.7 405.1 L901.7 401.8 L901.7 398.5 L901.7 395.3 L901.7 392.0 L901.7 388.8 L901.7 385.5 L901.7 382.2 L901.7 379.0 L901.7 375.7 L901.7 372.5 L901.7 369.2 L901.7 365.9 L901.7 362.7 L901.7 359.4 L901.7 356.2 L901.7 352.9 L901.7 349.6 L901.7 346.4 L901.7 343.1 L901.7 339.9 L901.7 336.6 L901.7 333.3 L901.7 330.1 L901.7 326.8 L901.7 323.6 L901.7 320.3 L901.7 317.0 L901.7 313.8 L901.7 310.5 L901.7 307.3 L901.7 304.0 L901.7 300.7 L901.7 297.5 L901.7 294.2 L901.7 291.0 L901.7 287.7 L901.7 284.4 L901.7 281.2 L901.7 277.9 L901.7 274.7 L901.7 271.4 L901.7 268.1 L901.7 264.9 L901.7 261.6 L901.7 258.4 L901.7 255.1 L901.7 251.8 L901.7 248.6 L901.7 245.3 L901.7 242.1 L901.7 238.8 L901.7 235.5 L901.7 232.3 L901.7 229.0 L901.7 225.8 L901.7 222.5 L901.7 219.2 L901.7 216.0 L901.7 212.7 L901.7 209.5 L901.7 206.2 L901.7 202.9 L901.7 199.7 L901.7 196.4 L901.7 193.2 L901.7 189.9 L901.7 186.6 L901.7 183.4 L901.7 180.1 L901.7 176.9 L901.7 173.6 L901.7 170.3 L901.7 167.1 L901.7 163.8 L901.7 160.6 L901.7 157.3 L901.7 154.0 L901.7 150.8 L901.7 147.5 L901.7 144.3 L901.7 141.0 L901.7 137.7 L901.7 134.5 L901.7 131.2 L901.7 128.0 L901.7 124.7 L901.7 121.4 L901.7 118.2 L901.7 114.9 L901.7 111.7 L901.7 108.4 L901.7 105.1 L901.7 101.9 L901.7 98.6 L901.7 95.4 L901.7 92.1 L901.7 88.8 L901.7 85.6 L901.7 82.3 L901.7 79.1 L901.7 75.8 L901.7 72.5 L901.7 69.3 L901.7 66.0 L901.7 62.8 L901.7 59.5 L901.7 56.2 L901.7 53.0 L901.7 49.7 L901.7 46.5 L901.7 43.2 L901.7 39.9 L901.7 36.7 L901.7 33.4 L901.7 30.2 L901.7 26.9 M901.7 613.7 L900.8 610.4 L900.0 607.2 L899.1 603.9 L898.3 600.7 L897.4 597.4 L896.6 594.1 L895.7 590.9 L894.9 587.6 L894.1 584.4 L893.2 581.1 L892.4 577.8 L891.5 574.6 L890.7 571.3 L889.9 568.1 L889.0 564.8 L888.2 561.5 L887.4 558.3 L886.6 555.0 L885.8 551.8 L885.0 548.5 L884.2 545.2 L883.4 542.0 L882.6 538.7 L881.8 535.5 L881.0 532.2 L880.3 528.9 L879.5 525.7 L878.7 522.4 L878.0 519.2 L877.2 515.9 L876.5 512.6 L875.8 509.4 L875.1 506.1 L874.4 502.9 L873.7 499.6 L873.0 496.3 L872.3 493.1 L871.6 489.8 L870.9 486.6 L870.3 483.3 L869.6 480.0 L869.0 476.8 L868.4 473.5 L867.7 470.3 L867.1 467.0 L866.5 463.7 L865.9 460.5 L865.4 457.2 L864.8 454.0 L864.2 450.7 L863.7 447.4 L863.2 444.2 L862.6 440.9 L862.1 437.7 L861.6 434.4 L861.2 431.1 L860.7 427.9 L860.2 424.6 L859.8 421.4 L859.4 418.1 L858.9 414.8 L858.5 411.6 L858.1 408.3 L857.7 405.1 L857.4 401.8 L857.0 398.5 L856.7 395.3 L856.4 392.0 L856.0 388.8 L855.7 385.5 L855.5 382.2 L855.2 379.0 L854.9 375.7 L854.7 372.5 L854.5 369.2 L854.3 365.9 L854.1 362.7 L853.9 359.4 L853.7 356.2 L853.5 352.9 L853.4 349.6 L853.3 346.4 L853.2 343.1 L853.1 339.9 L853.0 336.6 L852.9 333.3 L852.9 330.1 L852.8 326.8 L852.8 323.6 L852.8 320.3 L852.8 317.0 L852.8 313.8 L852.9 310.5 L852.9 307.3 L853.0 304.0 L853.1 300.7 L853.2 297.5 L853.3 294.2 L853.4 291.0 L853.5 287.7 L853.7 284.4 L853.9 281.2 L854.1 277.9 L854.3 274.7 L854.5 271.4 L854.7 268.1 L854.9 264.9 L855.2 261.6 L855.5 258.4 L855.7 255.1 L856.0 251.8 L856.4 248.6 L856.7 245.3 L857.0 242.1 L857.4 238.8 L857.7 235.5 L858.1 232.3 L858.5 229.0 L858.9 225.8 L859.4 222.5 L859.8 219.2 L860.2 216.0 L860.7 212.7 L861.2 209.5 L861.6 206.2 L862.1 202.9 L862.6 199.7 L863.2 196.4 L863.7 193.2 L864.2 189.9 L864.8 186.6 L865.4 183.4 L865.9 180.1 L866.5 176.9 L867.1 173.6 L867.7 170.3 L868.4 167.1 L869.0 163.8 L869.6 160.6 L870.3 157.3 L870.9 154.0 L871.6 150.8 L872.3 147.5 L873.0 144.3 L873.7 141.0 L874.4 137.7 L875.1 134.5 L875.8 131.2 L876.5 128.0 L877.2 124.7 L878.0 121.4 L878.7 118.2 L879.5 114.9 L880.3 111.7 L881.0 108.4 L881.8 105.1 L882.6 101.9 L883.4 98.6 L884.2 95.4 L885.0 92.1 L885.8 88.8 L886.6 85.6 L887.4 82.3 L888.2 79.1 L889.0 75.8 L889.9 72.5 L890.7 69.3 L891.5 66.0 L892.4 62.8 L893.2 59.5 L894.1 56.2 L894.9 53.0 L895.7 49.7 L896.6 46.5 L897.4 43.2 L898.3 39.9 L899.1 36.7 L900.0 33.4 L900.8 30.2 L901.7 26.9 M901.7 613.7 L900.0 610.4 L898.3 607.2 L896.6 603.9 L894.9 600.7 L893.2 597.4 L891.5 594.1 L889.8 590.9 L888.1 587.6 L886.4 584.4 L884.7 581.1 L883.0 577.8 L881.4 574.6 L879.7 571.3 L878.0 568.1 L876.4 564.8 L874.7 561.5 L873.1 558.3 L871.5 555.0 L869.9 551.8 L868.3 548.5 L866.7 545.2 L865.1 542.0 L863.5 538.7 L861.9 535.5 L860.4 532.2 L858.8 528.9 L857.3 525.7 L855.8 522.4 L854.3 519.2 L852.8 515.9 L851.3 512.6 L849.9 509.4 L848.4 506.1 L847.0 502.9 L845.6 499.6 L844.2 496.3 L842.8 493.1 L841.5 489.8 L840.2 486.6 L838.8 483.3 L837.5 480.0 L836.3 476.8 L835.0 473.5 L833.8 470.3 L832.5 467.0 L831.3 463.7 L830.2 460.5 L829.0 457.2 L827.9 454.0 L826.8 450.7 L825.7 447.4 L824.6 444.2 L823.6 440.9 L822.6 437.7 L821.6 434.4 L820.6 431.1 L819.7 427.9 L818.8 424.6 L817.9 421.4 L817.0 418.1 L816.2 414.8 L815.3 411.6 L814.6 408.3 L813.8 405.1 L813.1 401.8 L812.4 398.5 L811.7 395.3 L811.0 392.0 L810.4 388.8 L809.8 385.5 L809.2 382.2 L808.7 379.0 L808.2 375.7 L807.7 372.5 L807.2 369.2 L806.8 365.9 L806.4 362.7 L806.0 359.4 L805.7 356.2 L805.4 352.9 L805.1 349.6 L804.9 346.4 L804.6 343.1 L804.4 339.9 L804.3 336.6 L804.1 333.3 L804.0 330.1 L804.0 326.8 L803.9 323.6 L803.9 320.3 L803.9 317.0 L804.0 313.8 L804.0 310.5 L804.1 307.3 L804.3 304.0 L804.4 300.7 L804.6 297.5 L804.9 294.2 L805.1 291.0 L805.4 287.7 L805.7 284.4 L806.0 281.2 L806.4 277.9 L806.8 274.7 L807.2 271.4 L807.7 268.1 L808.2 264.9 L808.7 261.6 L809.2 258.4 L809.8 255.1 L810.4 251.8 L811.0 248.6 L811.7 245.3 L812.4 242.1 L813.1 238.8 L813.8 235.5 L814.6 232.3 L815.3 229.0 L816.2 225.8 L817.0 222.5 L817.9 219.2 L818.8 216.0 L819.7 212.7 L820.6 209.5 L821.6 206.2 L822.6 202.9 L823.6 199.7 L824.6 196.4 L825.7 193.2 L826.8 189.9 L827.9 186.6 L829.0 183.4 L830.2 180.1 L831.3 176.9 L832.5 173.6 L833.8 170.3 L835.0 167.1 L836.3 163.8 L837.5 160.6 L838.8 157.3 L840.2 154.0 L841.5 150.8 L842.8 147.5 L844.2 144.3 L845.6 141.0 L847.0 137.7 L848.4 134.5 L849.9 131.2 L851.3 128.0 L852.8 124.7 L854.3 121.4 L855.8 118.2 L857.3 114.9 L858.8 111.7 L860.4 108.4 L861.9 105.1 L863.5 101.9 L865.1 98.6 L866.7 95.4 L868.3 92.1 L869.9 88.8 L871.5 85.6 L873.1 82.3 L874.7 79.1 L876.4 75.8 L878.0 72.5 L879.7 69.3 L881.4 66.0 L883.0 62.8 L884.7 59.5 L886.4 56.2 L888.1 53.0 L889.8 49.7 L891.5 46.5 L893.2 43.2 L894.9 39.9 L896.6 36.7 L898.3 33.4 L900.0 30.2 L901.7 26.9 M901.7 613.7 L899.1 610.4 L896.6 607.2 L894.0 603.9 L891.5 600.7 L888.9 597.4 L886.4 594.1 L883.8 590.9 L881.3 587.6 L878.8 584.4 L876.2 581.1 L873.7 577.8 L871.2 574.6 L868.7 571.3 L866.2 568.1 L863.7 564.8 L861.3 561.5 L858.8 558.3 L856.4 555.0 L853.9 551.8 L851.5 548.5 L849.1 545.2 L846.7 542.0 L844.4 538.7 L842.0 535.5 L839.7 532.2 L837.4 528.9 L835.1 525.7 L832.8 522.4 L830.6 519.2 L828.4 515.9 L826.1 512.6 L824.0 509.4 L821.8 506.1 L819.7 502.9 L817.6 499.6 L815.5 496.3 L813.4 493.1 L811.4 489.8 L809.4 486.6 L807.4 483.3 L805.5 480.0 L803.5 476.8 L801.7 473.5 L799.8 470.3 L798.0 467.0 L796.2 463.7 L794.4 460.5 L792.7 457.2 L791.0 454.0 L789.3 450.7 L787.7 447.4 L786.1 444.2 L784.5 440.9 L783.0 437.7 L781.5 434.4 L780.1 431.1 L778.7 427.9 L777.3 424.6 L776.0 421.4 L774.7 418.1 L773.4 414.8 L772.2 411.6 L771.0 408.3 L769.8 405.1 L768.7 401.8 L767.7 398.5 L766.7 395.3 L765.7 392.0 L764.7 388.8 L763.8 385.5 L763.0 382.2 L762.2 379.0 L761.4 375.7 L760.7 372.5 L760.0 369.2 L759.4 365.9 L758.8 362.7 L758.2 359.4 L757.7 356.2 L757.2 352.9 L756.8 349.6 L756.4 346.4 L756.1 343.1 L755.8 339.9 L755.6 336.6 L755.4 333.3 L755.2 330.1 L755.1 326.8 L755.0 323.6 L755.0 320.3 L755.0 317.0 L755.1 313.8 L755.2 310.5 L755.4 307.3 L755.6 304.0 L755.8 300.7 L756.1 297.5 L756.4 294.2 L756.8 291.0 L757.2 287.7 L757.7 284.4 L758.2 281.2 L758.8 277.9 L759.4 274.7 L760.0 271.4 L760.7 268.1 L761.4 264.9 L762.2 261.6 L763.0 258.4 L763.8 255.1 L764.7 251.8 L765.7 248.6 L766.7 245.3 L767.7 242.1 L768.7 238.8 L769.8 235.5 L771.0 232.3 L772.2 229.0 L773.4 225.8 L774.7 222.5 L776.0 219.2 L777.3 216.0 L778.7 212.7 L780.1 209.5 L781.5 206.2 L783.0 202.9 L784.5 199.7 L786.1 196.4 L787.7 193.2 L789.3 189.9 L791.0 186.6 L792.7 183.4 L794.4 180.1 L796.2 176.9 L798.0 173.6 L799.8 170.3 L801.7 167.1 L803.5 163.8 L805.5 160.6 L807.4 157.3 L809.4 154.0 L811.4 150.8 L813.4 147.5 L815.5 144.3 L817.6 141.0 L819.7 137.7 L821.8 134.5 L824.0 131.2 L826.1 128.0 L828.4 124.7 L830.6 121.4 L832.8 118.2 L835.1 114.9 L837.4 111.7 L839.7 108.4 L842.0 105.1 L844.4 101.9 L846.7 98.6 L849.1 95.4 L851.5 92.1 L853.9 88.8 L856.4 85.6 L858.8 82.3 L861.3 79.1 L863.7 75.8 L866.2 72.5 L868.7 69.3 L871.2 66.0 L873.7 62.8 L876.2 59.5 L878.8 56.2 L881.3 53.0 L883.8 49.7 L886.4 46.5 L888.9 43.2 L891.5 39.9 L894.0 36.7 L896.6 33.4 L899.1 30.2 L901.7 26.9 M901.7 613.7 L898.3 610.4 L894.9 607.2 L891.5 603.9 L888.1 600.7 L884.7 597.4 L881.3 594.1 L877.9 590.9 L874.5 587.6 L871.1 584.4 L867.7 581.1 L864.4 577.8 L861.0 574.6 L857.7 571.3 L854.4 568.1 L851.1 564.8 L847.8 561.5 L844.5 558.3 L841.3 555.0 L838.0 551.8 L834.8 548.5 L831.6 545.2 L828.4 542.0 L825.3 538.7 L822.1 535.5 L819.0 532.2 L816.0 528.9 L812.9 525.7 L809.9 522.4 L806.9 519.2 L803.9 515.9 L801.0 512.6 L798.0 509.4 L795.2 506.1 L792.3 502.9 L789.5 499.6 L786.7 496.3 L784.0 493.1 L781.3 489.8 L778.6 486.6 L776.0 483.3 L773.4 480.0 L770.8 476.8 L768.3 473.5 L765.8 470.3 L763.4 467.0 L761.0 463.7 L758.6 460.5 L756.3 457.2 L754.1 454.0 L751.9 450.7 L749.7 447.4 L747.6 444.2 L745.5 440.9 L743.5 437.7 L741.5 434.4 L739.5 431.1 L737.7 427.9 L735.8 424.6 L734.0 421.4 L732.3 418.1 L730.6 414.8 L729.0 411.6 L727.4 408.3 L725.9 405.1 L724.4 401.8 L723.0 398.5 L721.6 395.3 L720.3 392.0 L719.1 388.8 L717.9 385.5 L716.8 382.2 L715.7 379.0 L714.6 375.7 L713.7 372.5 L712.8 369.2 L711.9 365.9 L711.1 362.7 L710.4 359.4 L709.7 356.2 L709.1 352.9 L708.5 349.6 L708.0 346.4 L707.6 343.1 L707.2 339.9 L706.8 336.6 L706.6 333.3 L706.4 330.1 L706.2 326.8 L706.1 323.6 L706.1 320.3 L706.1 317.0 L706.2 313.8 L706.4 310.5 L706.6 307.3 L706.8 304.0 L707.2 300.7 L707.6 297.5 L708.0 294.2 L708.5 291.0 L709.1 287.7 L709.7 284.4 L710.4 281.2 L711.1 277.9 L711.9 274.7 L712.8 271.4 L713.7 268.1 L714.6 264.9 L715.7 261.6 L716.8 258.4 L717.9 255.1 L719.1 251.8 L720.3 248.6 L721.6 245.3 L723.0 242.1 L724.4 238.8 L725.9 235.5 L727.4 232.3 L729.0 229.0 L730.6 225.8 L732.3 222.5 L734.0 219.2 L735.8 216.0 L737.7 212.7 L739.5 209.5 L741.5 206.2 L743.5 202.9 L745.5 199.7 L747.6 196.4 L749.7 193.2 L751.9 189.9 L754.1 186.6 L756.3 183.4 L758.6 180.1 L761.0 176.9 L763.4 173.6 L765.8 170.3 L768.3 167.1 L770.8 163.8 L773.4 160.6 L776.0 157.3 L778.6 154.0 L781.3 150.8 L784.0 147.5 L786.7 144.3 L789.5 141.0 L792.3 137.7 L795.2 134.5 L798.0 131.2 L801.0 128.0 L803.9 124.7 L806.9 121.4 L809.9 118.2 L812.9 114.9 L816.0 111.7 L819.0 108.4 L822.1 105.1 L825.3 101.9 L828.4 98.6 L831.6 95.4 L834.8 92.1 L838.0 88.8 L841.3 85.6 L844.5 82.3 L847.8 79.1 L851.1 75.8 L854.4 72.5 L857.7 69.3 L861.0 66.0 L864.4 62.8 L867.7 59.5 L871.1 56.2 L874.5 53.0 L877.9 49.7 L881.3 46.5 L884.7 43.2 L888.1 39.9 L891.5 36.7 L894.9 33.4 L898.3 30.2 L901.7 26.9 M901.7 613.7 L897.4 610.4 L893.2 607.2 L888.9 603.9 L884.6 600.7 L880.4 597.4 L876.1 594.1 L871.9 590.9 L867.7 587.6 L863.5 584.4 L859.2 581.1 L855.0 577.8 L850.9 574.6 L846.7 571.3 L842.6 568.1 L838.4 564.8 L834.3 561.5 L830.2 558.3 L826.1 555.0 L822.1 551.8 L818.1 548.5 L814.1 545.2 L810.1 542.0 L806.2 538.7 L802.3 535.5 L798.4 532.2 L794.5 528.9 L790.7 525.7 L786.9 522.4 L783.2 519.2 L779.5 515.9 L775.8 512.6 L772.1 509.4 L768.5 506.1 L765.0 502.9 L761.5 499.6 L758.0 496.3 L754.6 493.1 L751.2 489.8 L747.8 486.6 L744.5 483.3 L741.3 480.0 L738.1 476.8 L735.0 473.5 L731.9 470.3 L728.8 467.0 L725.8 463.7 L722.9 460.5 L720.0 457.2 L717.2 454.0 L714.4 450.7 L711.7 447.4 L709.0 444.2 L706.4 440.9 L703.9 437.7 L701.4 434.4 L699.0 431.1 L696.6 427.9 L694.4 424.6 L692.1 421.4 L690.0 418.1 L687.9 414.8 L685.8 411.6 L683.8 408.3 L681.9 405.1 L680.1 401.8 L678.3 398.5 L676.6 395.3 L675.0 392.0 L673.4 388.8 L671.9 385.5 L670.5 382.2 L669.2 379.0 L667.9 375.7 L666.7 372.5 L665.5 369.2 L664.5 365.9 L663.5 362.7 L662.5 359.4 L661.7 356.2 L660.9 352.9 L660.2 349.6 L659.6 346.4 L659.0 343.1 L658.5 339.9 L658.1 336.6 L657.8 333.3 L657.5 330.1 L657.3 326.8 L657.2 323.6 L657.2 320.3 L657.2 317.0 L657.3 313.8 L657.5 310.5 L657.8 307.3 L658.1 304.0 L658.5 300.7 L659.0 297.5 L659.6 294.2 L660.2 291.0 L660.9 287.7 L661.7 284.4 L662.5 281.2 L663.5 277.9 L664.5 274.7 L665.5 271.4 L666.7 268.1 L667.9 264.9 L669.2 261.6 L670.5 258.4 L671.9 255.1 L673.4 251.8 L675.0 248.6 L676.6 245.3 L678.3 242.1 L680.1 238.8 L681.9 235.5 L683.8 232.3 L685.8 229.0 L687.9 225.8 L690.0 222.5 L692.1 219.2 L694.4 216.0 L696.6 212.7 L699.0 209.5 L701.4 206.2 L703.9 202.9 L706.4 199.7 L709.0 196.4 L711.7 193.2 L714.4 189.9 L717.2 186.6 L720.0 183.4 L722.9 180.1 L725.8 176.9 L728.8 173.6 L731.9 170.3 L735.0 167.1 L738.1 163.8 L741.3 160.6 L744.5 157.3 L747.8 154.0 L751.2 150.8 L754.6 147.5 L758.0 144.3 L761.5 141.0 L765.0 137.7 L768.5 134.5 L772.1 131.2 L775.8 128.0 L779.5 124.7 L783.2 121.4 L786.9 118.2 L790.7 114.9 L794.5 111.7 L798.4 108.4 L802.3 105.1 L806.2 101.9 L810.1 98.6 L814.1 95.4 L818.1 92.1 L822.1 88.8 L826.1 85.6 L830.2 82.3 L834.3 79.1 L838.4 75.8 L842.6 72.5 L846.7 69.3 L850.9 66.0 L855.0 62.8 L859.2 59.5 L863.5 56.2 L867.7 53.0 L871.9 49.7 L876.1 46.5 L880.4 43.2 L884.6 39.9 L888.9 36.7 L893.2 33.4 L897.4 30.2 L901.7 26.9 M901.7 613.7 L896.6 610.4 L891.5 607.2 L886.3 603.9 L881.2 600.7 L876.1 597.4 L871.0 594.1 L865.9 590.9 L860.9 587.6 L855.8 584.4 L850.8 581.1 L845.7 577.8 L840.7 574.6 L835.7 571.3 L830.7 568.1 L825.8 564.8 L820.8 561.5 L815.9 558.3 L811.0 555.0 L806.2 551.8 L801.4 548.5 L796.6 545.2 L791.8 542.0 L787.1 538.7 L782.4 535.5 L777.7 532.2 L773.1 528.9 L768.5 525.7 L764.0 522.4 L759.5 519.2 L755.0 515.9 L750.6 512.6 L746.2 509.4 L741.9 506.1 L737.6 502.9 L733.4 499.6 L729.2 496.3 L725.1 493.1 L721.1 489.8 L717.1 486.6 L713.1 483.3 L709.2 480.0 L705.4 476.8 L701.6 473.5 L697.9 470.3 L694.2 467.0 L690.6 463.7 L687.1 460.5 L683.7 457.2 L680.3 454.0 L676.9 450.7 L673.7 447.4 L670.5 444.2 L667.4 440.9 L664.3 437.7 L661.4 434.4 L658.5 431.1 L655.6 427.9 L652.9 424.6 L650.2 421.4 L647.6 418.1 L645.1 414.8 L642.6 411.6 L640.3 408.3 L638.0 405.1 L635.8 401.8 L633.7 398.5 L631.6 395.3 L629.7 392.0 L627.8 388.8 L626.0 385.5 L624.3 382.2 L622.7 379.0 L621.1 375.7 L619.7 372.5 L618.3 369.2 L617.0 365.9 L615.8 362.7 L614.7 359.4 L613.7 356.2 L612.8 352.9 L611.9 349.6 L611.2 346.4 L610.5 343.1 L609.9 339.9 L609.4 336.6 L609.0 333.3 L608.7 330.1 L608.5 326.8 L608.3 323.6 L608.3 320.3 L608.3 317.0 L608.5 313.8 L608.7 310.5 L609.0 307.3 L609.4 304.0 L609.9 300.7 L610.5 297.5 L611.2 294.2 L611.9 291.0 L612.8 287.7 L613.7 284.4 L614.7 281.2 L615.8 277.9 L617.0 274.7 L618.3 271.4 L619.7 268.1 L621.1 264.9 L622.7 261.6 L624.3 258.4 L626.0 255.1 L627.8 251.8 L629.7 248.6 L631.6 245.3 L633.7 242.1 L635.8 238.8 L638.0 235.5 L640.3 232.3 L642.6 229.0 L645.1 225.8 L647.6 222.5 L650.2 219.2 L652.9 216.0 L655.6 212.7 L658.5 209.5 L661.4 206.2 L664.3 202.9 L667.4 199.7 L670.5 196.4 L673.7 193.2 L676.9 189.9 L680.3 186.6 L683.7 183.4 L687.1 180.1 L690.6 176.9 L694.2 173.6 L697.9 170.3 L701.6 167.1 L705.4 163.8 L709.2 160.6 L713.1 157.3 L717.1 154.0 L721.1 150.8 L725.1 147.5 L729.2 144.3 L733.4 141.0 L737.6 137.7 L741.9 134.5 L746.2 131.2 L750.6 128.0 L755.0 124.7 L759.5 121.4 L764.0 118.2 L768.5 114.9 L773.1 111.7 L777.7 108.4 L782.4 105.1 L787.1 101.9 L791.8 98.6 L796.6 95.4 L801.4 92.1 L806.2 88.8 L811.0 85.6 L815.9 82.3 L820.8 79.1 L825.8 75.8 L830.7 72.5 L835.7 69.3 L840.7 66.0 L845.7 62.8 L850.8 59.5 L855.8 56.2 L860.9 53.0 L865.9 49.7 L871.0 46.5 L876.1 43.2 L881.2 39.9 L886.3 36.7 L891.5 33.4 L896.6 30.2 L901.7 26.9 M901.7 613.7 L895.7 610.4 L889.8 607.2 L883.8 603.9 L877.8 600.7 L871.9 597.4 L865.9 594.1 L860.0 590.9 L854.1 587.6 L848.2 584.4 L842.3 581.1 L836.4 577.8 L830.5 574.6 L824.7 571.3 L818.9 568.1 L813.1 564.8 L807.3 561.5 L801.6 558.3 L795.9 555.0 L790.3 551.8 L784.6 548.5 L779.0 545.2 L773.5 542.0 L768.0 538.7 L762.5 535.5 L757.0 532.2 L751.6 528.9 L746.3 525.7 L741.0 522.4 L735.7 519.2 L730.6 515.9 L725.4 512.6 L720.3 509.4 L715.3 506.1 L710.3 502.9 L705.4 499.6 L700.5 496.3 L695.7 493.1 L691.0 489.8 L686.3 486.6 L681.7 483.3 L677.1 480.0 L672.7 476.8 L668.3 473.5 L663.9 470.3 L659.7 467.0 L655.5 463.7 L651.4 460.5 L647.3 457.2 L643.4 454.0 L639.5 450.7 L635.7 447.4 L632.0 444.2 L628.3 440.9 L624.8 437.7 L621.3 434.4 L617.9 431.1 L614.6 427.9 L611.4 424.6 L608.3 421.4 L605.3 418.1 L602.3 414.8 L599.5 411.6 L596.7 408.3 L594.0 405.1 L591.5 401.8 L589.0 398.5 L586.6 395.3 L584.3 392.0 L582.1 388.8 L580.0 385.5 L578.0 382.2 L576.2 379.0 L574.4 375.7 L572.7 372.5 L571.1 369.2 L569.6 365.9 L568.2 362.7 L566.9 359.4 L565.7 356.2 L564.6 352.9 L563.6 349.6 L562.7 346.4 L562.0 343.1 L561.3 339.9 L560.7 336.6 L560.2 333.3 L559.9 330.1 L559.6 326.8 L559.5 323.6 L559.4 320.3 L559.5 317.0 L559.6 313.8 L559.9 310.5 L560.2 307.3 L560.7 304.0 L561.3 300.7 L562.0 297.5 L562.7 294.2 L563.6 291.0 L564.6 287.7 L565.7 284.4 L566.9 281.2 L568.2 277.9 L569.6 274.7 L571.1 271.4 L572.7 268.1 L574.4 264.9 L576.2 261.6 L578.0 258.4 L580.0 255.1 L582.1 251.8 L584.3 248.6 L586.6 245.3 L589.0 242.1 L591.5 238.8 L594.0 235.5 L596.7 232.3 L599.5 229.0 L602.3 225.8 L605.3 222.5 L608.3 219.2 L611.4 216.0 L614.6 212.7 L617.9 209.5 L621.3 206.2 L624.8 202.9 L628.3 199.7 L632.0 196.4 L635.7 193.2 L639.5 189.9 L643.4 186.6 L647.3 183.4 L651.4 180.1 L655.5 176.9 L659.7 173.6 L663.9 170.3 L668.3 167.1 L672.7 163.8 L677.1 160.6 L681.7 157.3 L686.3 154.0 L691.0 150.8 L695.7 147.5 L700.5 144.3 L705.4 141.0 L710.3 137.7 L715.3 134.5 L720.3 131.2 L725.4 128.0 L730.6 124.7 L735.7 121.4 L741.0 118.2 L746.3 114.9 L751.6 111.7 L757.0 108.4 L762.5 105.1 L768.0 101.9 L773.5 98.6 L779.0 95.4 L784.6 92.1 L790.3 88.8 L795.9 85.6 L801.6 82.3 L807.3 79.1 L813.1 75.8 L818.9 72.5 L824.7 69.3 L830.5 66.0 L836.4 62.8 L842.3 59.5 L848.2 56.2 L854.1 53.0 L860.0 49.7 L865.9 46.5 L871.9 43.2 L877.8 39.9 L883.8 36.7 L889.8 33.4 L895.7 30.2 L901.7 26.9 M901.7 613.7 L894.9 610.4 L888.0 607.2 L881.2 603.9 L874.4 600.7 L867.6 597.4 L860.8 594.1 L854.0 590.9 L847.3 587.6 L840.5 584.4 L833.8 581.1 L827.1 577.8 L820.4 574.6 L813.7 571.3 L807.1 568.1 L800.4 564.8 L793.9 561.5 L787.3 558.3 L780.8 555.0 L774.3 551.8 L767.9 548.5 L761.5 545.2 L755.2 542.0 L748.8 538.7 L742.6 535.5 L736.4 532.2 L730.2 528.9 L724.1 525.7 L718.0 522.4 L712.0 519.2 L706.1 515.9 L700.2 512.6 L694.4 509.4 L688.6 506.1 L682.9 502.9 L677.3 499.6 L671.8 496.3 L666.3 493.1 L660.9 489.8 L655.5 486.6 L650.2 483.3 L645.0 480.0 L639.9 476.8 L634.9 473.5 L629.9 470.3 L625.1 467.0 L620.3 463.7 L615.6 460.5 L611.0 457.2 L606.5 454.0 L602.0 450.7 L597.7 447.4 L593.4 444.2 L589.3 440.9 L585.2 437.7 L581.2 434.4 L577.4 431.1 L573.6 427.9 L569.9 424.6 L566.4 421.4 L562.9 418.1 L559.5 414.8 L556.3 411.6 L553.1 408.3 L550.1 405.1 L547.2 401.8 L544.3 398.5 L541.6 395.3 L539.0 392.0 L536.5 388.8 L534.1 385.5 L531.8 382.2 L529.6 379.0 L527.6 375.7 L525.7 372.5 L523.8 369.2 L522.1 365.9 L520.5 362.7 L519.0 359.4 L517.7 356.2 L516.4 352.9 L515.3 349.6 L514.3 346.4 L513.4 343.1 L512.6 339.9 L512.0 336.6 L511.5 333.3 L511.0 330.1 L510.7 326.8 L510.6 323.6 L510.5 320.3 L510.6 317.0 L510.7 313.8 L511.0 310.5 L511.5 307.3 L512.0 304.0 L512.6 300.7 L513.4 297.5 L514.3 294.2 L515.3 291.0 L516.4 287.7 L517.7 284.4 L519.0 281.2 L520.5 277.9 L522.1 274.7 L523.8 271.4 L525.7 268.1 L527.6 264.9 L529.6 261.6 L531.8 258.4 L534.1 255.1 L536.5 251.8 L539.0 248.6 L541.6 245.3 L544.3 242.1 L547.2 238.8 L550.1 235.5 L553.1 232.3 L556.3 229.0 L559.5 225.8 L562.9 222.5 L566.4 219.2 L569.9 216.0 L573.6 212.7 L577.4 209.5 L581.2 206.2 L585.2 202.9 L589.3 199.7 L593.4 196.4 L597.7 193.2 L602.0 189.9 L606.5 186.6 L611.0 183.4 L615.6 180.1 L620.3 176.9 L625.1 173.6 L629.9 170.3 L634.9 167.1 L639.9 163.8 L645.0 160.6 L650.2 157.3 L655.5 154.0 L660.9 150.8 L666.3 147.5 L671.8 144.3 L677.3 141.0 L682.9 137.7 L688.6 134.5 L694.4 131.2 L700.2 128.0 L706.1 124.7 L712.0 121.4 L718.0 118.2 L724.1 114.9 L730.2 111.7 L736.4 108.4 L742.6 105.1 L748.8 101.9 L755.2 98.6 L761.5 95.4 L767.9 92.1 L774.3 88.8 L780.8 85.6 L787.3 82.3 L793.9 79.1 L800.4 75.8 L807.1 72.5 L813.7 69.3 L820.4 66.0 L827.1 62.8 L833.8 59.5 L840.5 56.2 L847.3 53.0 L854.0 49.7 L860.8 46.5 L867.6 43.2 L874.4 39.9 L881.2 36.7 L888.0 33.4 L894.9 30.2 L901.7 26.9 M901.7 613.7 L894.0 610.4 L886.3 607.2 L878.7 603.9 L871.0 600.7 L863.3 597.4 L855.7 594.1 L848.1 590.9 L840.4 587.6 L832.9 584.4 L825.3 581.1 L817.7 577.8 L810.2 574.6 L802.7 571.3 L795.2 568.1 L787.8 564.8 L780.4 561.5 L773.0 558.3 L765.7 555.0 L758.4 551.8 L751.2 548.5 L744.0 545.2 L736.8 542.0 L729.7 538.7 L722.7 535.5 L715.7 532.2 L708.8 528.9 L701.9 525.7 L695.1 522.4 L688.3 519.2 L681.6 515.9 L675.0 512.6 L668.5 509.4 L662.0 506.1 L655.6 502.9 L649.3 499.6 L643.0 496.3 L636.8 493.1 L630.7 489.8 L624.7 486.6 L618.8 483.3 L613.0 480.0 L607.2 476.8 L601.6 473.5 L596.0 470.3 L590.5 467.0 L585.1 463.7 L579.8 460.5 L574.6 457.2 L569.6 454.0 L564.6 450.7 L559.7 447.4 L554.9 444.2 L550.2 440.9 L545.7 437.7 L541.2 434.4 L536.8 431.1 L532.6 427.9 L528.5 424.6 L524.5 421.4 L520.6 418.1 L516.8 414.8 L513.1 411.6 L509.6 408.3 L506.1 405.1 L502.8 401.8 L499.6 398.5 L496.6 395.3 L493.6 392.0 L490.8 388.8 L488.1 385.5 L485.6 382.2 L483.1 379.0 L480.8 375.7 L478.6 372.5 L476.6 369.2 L474.7 365.9 L472.9 362.7 L471.2 359.4 L469.7 356.2 L468.3 352.9 L467.0 349.6 L465.9 346.4 L464.9 343.1 L464.0 339.9 L463.3 336.6 L462.7 333.3 L462.2 330.1 L461.9 326.8 L461.7 323.6 L461.6 320.3 L461.7 317.0 L461.9 313.8 L462.2 310.5 L462.7 307.3 L463.3 304.0 L464.0 300.7 L464.9 297.5 L465.9 294.2 L467.0 291.0 L468.3 287.7 L469.7 284.4 L471.2 281.2 L472.9 277.9 L474.7 274.7 L476.6 271.4 L478.6 268.1 L480.8 264.9 L483.1 261.6 L485.6 258.4 L488.1 255.1 L490.8 251.8 L493.6 248.6 L496.6 245.3 L499.6 242.1 L502.8 238.8 L506.1 235.5 L509.6 232.3 L513.1 229.0 L516.8 225.8 L520.6 222.5 L524.5 219.2 L528.5 216.0 L532.6 212.7 L536.8 209.5 L541.2 206.2 L545.7 202.9 L550.2 199.7 L554.9 196.4 L559.7 193.2 L564.6 189.9 L569.6 186.6 L574.6 183.4 L579.8 180.1 L585.1 176.9 L590.5 173.6 L596.0 170.3 L601.6 167.1 L607.2 163.8 L613.0 160.6 L618.8 157.3 L624.7 154.0 L630.7 150.8 L636.8 147.5 L643.0 144.3 L649.3 141.0 L655.6 137.7 L662.0 134.5 L668.5 131.2 L675.0 128.0 L681.6 124.7 L688.3 121.4 L695.1 118.2 L701.9 114.9 L708.8 111.7 L715.7 108.4 L722.7 105.1 L729.7 101.9 L736.8 98.6 L744.0 95.4 L751.2 92.1 L758.4 88.8 L765.7 85.6 L773.0 82.3 L780.4 79.1 L787.8 75.8 L795.2 72.5 L802.7 69.3 L810.2 66.0 L817.7 62.8 L825.3 59.5 L832.9 56.2 L840.4 53.0 L848.1 49.7 L855.7 46.5 L863.3 43.2 L871.0 39.9 L878.7 36.7 L886.3 33.4 L894.0 30.2 L901.7 26.9 M901.7 613.7 L893.2 610.4 L884.6 607.2 L876.1 603.9 L867.6 600.7 L859.1 597.4 L850.6 594.1 L842.1 590.9 L833.6 587.6 L825.2 584.4 L816.8 581.1 L808.4 577.8 L800.0 574.6 L791.7 571.3 L783.4 568.1 L775.1 564.8 L766.9 561.5 L758.7 558.3 L750.6 555.0 L742.5 551.8 L734.5 548.5 L726.5 545.2 L718.5 542.0 L710.6 538.7 L702.8 535.5 L695.0 532.2 L687.3 528.9 L679.7 525.7 L672.1 522.4 L664.6 519.2 L657.2 515.9 L649.8 512.6 L642.6 509.4 L635.4 506.1 L628.3 502.9 L621.2 499.6 L614.3 496.3 L607.4 493.1 L600.6 489.8 L594.0 486.6 L587.4 483.3 L580.9 480.0 L574.5 476.8 L568.2 473.5 L562.0 470.3 L555.9 467.0 L549.9 463.7 L544.1 460.5 L538.3 457.2 L532.6 454.0 L527.1 450.7 L521.7 447.4 L516.4 444.2 L511.2 440.9 L506.1 437.7 L501.1 434.4 L496.3 431.1 L491.6 427.9 L487.0 424.6 L482.5 421.4 L478.2 418.1 L474.0 414.8 L469.9 411.6 L466.0 408.3 L462.2 405.1 L458.5 401.8 L455.0 398.5 L451.6 395.3 L448.3 392.0 L445.2 388.8 L442.2 385.5 L439.3 382.2 L436.6 379.0 L434.1 375.7 L431.6 372.5 L429.4 369.2 L427.2 365.9 L425.2 362.7 L423.4 359.4 L421.7 356.2 L420.1 352.9 L418.7 349.6 L417.5 346.4 L416.3 343.1 L415.4 339.9 L414.6 336.6 L413.9 333.3 L413.4 330.1 L413.0 326.8 L412.8 323.6 L412.7 320.3 L412.8 317.0 L413.0 313.8 L413.4 310.5 L413.9 307.3 L414.6 304.0 L415.4 300.7 L416.3 297.5 L417.5 294.2 L418.7 291.0 L420.1 287.7 L421.7 284.4 L423.4 281.2 L425.2 277.9 L427.2 274.7 L429.4 271.4 L431.6 268.1 L434.1 264.9 L436.6 261.6 L439.3 258.4 L442.2 255.1 L445.2 251.8 L448.3 248.6 L451.6 245.3 L455.0 242.1 L458.5 238.8 L462.2 235.5 L466.0 232.3 L469.9 229.0 L474.0 225.8 L478.2 222.5 L482.5 219.2 L487.0 216.0 L491.6 212.7 L496.3 209.5 L501.1 206.2 L506.1 202.9 L511.2 199.7 L516.4 196.4 L521.7 193.2 L527.1 189.9 L532.6 186.6 L538.3 183.4 L544.1 180.1 L549.9 176.9 L555.9 173.6 L562.0 170.3 L568.2 167.1 L574.5 163.8 L580.9 160.6 L587.4 157.3 L594.0 154.0 L600.6 150.8 L607.4 147.5 L614.3 144.3 L621.2 141.0 L628.3 137.7 L635.4 134.5 L642.6 131.2 L649.8 128.0 L657.2 124.7 L664.6 121.4 L672.1 118.2 L679.7 114.9 L687.3 111.7 L695.0 108.4 L702.8 105.1 L710.6 101.9 L718.5 98.6 L726.5 95.4 L734.5 92.1 L742.5 88.8 L750.6 85.6 L758.7 82.3 L766.9 79.1 L775.1 75.8 L783.4 72.5 L791.7 69.3 L800.0 66.0 L808.4 62.8 L816.8 59.5 L825.2 56.2 L833.6 53.0 L842.1 49.7 L850.6 46.5 L859.1 43.2 L867.6 39.9 L876.1 36.7 L884.6 33.4 L893.2 30.2 L901.7 26.9 M901.7 613.7 L892.3 610.4 L882.9 607.2 L873.5 603.9 L864.2 600.7 L854.8 597.4 L845.5 594.1 L836.1 590.9 L826.8 587.6 L817.6 584.4 L808.3 581.1 L799.1 577.8 L789.9 574.6 L780.7 571.3 L771.6 568.1 L762.5 564.8 L753.4 561.5 L744.4 558.3 L735.5 555.0 L726.6 551.8 L717.7 548.5 L708.9 545.2 L700.2 542.0 L691.5 538.7 L682.9 535.5 L674.4 532.2 L665.9 528.9 L657.5 525.7 L649.2 522.4 L640.9 519.2 L632.8 515.9 L624.7 512.6 L616.7 509.4 L608.7 506.1 L600.9 502.9 L593.2 499.6 L585.5 496.3 L578.0 493.1 L570.5 489.8 L563.2 486.6 L555.9 483.3 L548.8 480.0 L541.8 476.8 L534.9 473.5 L528.0 470.3 L521.3 467.0 L514.8 463.7 L508.3 460.5 L502.0 457.2 L495.7 454.0 L489.6 450.7 L483.7 447.4 L477.8 444.2 L472.1 440.9 L466.5 437.7 L461.1 434.4 L455.8 431.1 L450.6 427.9 L445.5 424.6 L440.6 421.4 L435.9 418.1 L431.2 414.8 L426.8 411.6 L422.4 408.3 L418.2 405.1 L414.2 401.8 L410.3 398.5 L406.6 395.3 L403.0 392.0 L399.5 388.8 L396.2 385.5 L393.1 382.2 L390.1 379.0 L387.3 375.7 L384.6 372.5 L382.1 369.2 L379.8 365.9 L377.6 362.7 L375.6 359.4 L373.7 356.2 L372.0 352.9 L370.4 349.6 L369.0 346.4 L367.8 343.1 L366.7 339.9 L365.8 336.6 L365.1 333.3 L364.5 330.1 L364.1 326.8 L363.9 323.6 L363.8 320.3 L363.9 317.0 L364.1 313.8 L364.5 310.5 L365.1 307.3 L365.8 304.0 L366.7 300.7 L367.8 297.5 L369.0 294.2 L370.4 291.0 L372.0 287.7 L373.7 284.4 L375.6 281.2 L377.6 277.9 L379.8 274.7 L382.1 271.4 L384.6 268.1 L387.3 264.9 L390.1 261.6 L393.1 258.4 L396.2 255.1 L399.5 251.8 L403.0 248.6 L406.6 245.3 L410.3 242.1 L414.2 238.8 L418.2 235.5 L422.4 232.3 L426.8 229.0 L431.2 225.8 L435.9 222.5 L440.6 219.2 L445.5 216.0 L450.6 212.7 L455.8 209.5 L461.1 206.2 L466.5 202.9 L472.1 199.7 L477.8 196.4 L483.7 193.2 L489.6 189.9 L495.7 186.6 L502.0 183.4 L508.3 180.1 L514.8 176.9 L521.3 173.6 L528.0 170.3 L534.9 167.1 L541.8 163.8 L548.8 160.6 L555.9 157.3 L563.2 154.0 L570.5 150.8 L578.0 147.5 L585.5 144.3 L593.2 141.0 L600.9 137.7 L608.7 134.5 L616.7 131.2 L624.7 128.0 L632.8 124.7 L640.9 121.4 L649.2 118.2 L657.5 114.9 L665.9 111.7 L674.4 108.4 L682.9 105.1 L691.5 101.9 L700.2 98.6 L708.9 95.4 L717.7 92.1 L726.6 88.8 L735.5 85.6 L744.4 82.3 L753.4 79.1 L762.5 75.8 L771.6 72.5 L780.7 69.3 L789.9 66.0 L799.1 62.8 L808.3 59.5 L817.6 56.2 L826.8 53.0 L836.1 49.7 L845.5 46.5 L854.8 43.2 L864.2 39.9 L873.5 36.7 L882.9 33.4 L892.3 30.2 L901.7 26.9 M901.7 613.7 L891.5 610.4 L881.2 607.2 L871.0 603.9 L860.8 600.7 L850.6 597.4 L840.4 594.1 L830.2 590.9 L820.0 587.6 L809.9 584.4 L799.8 581.1 L789.7 577.8 L779.7 574.6 L769.7 571.3 L759.7 568.1 L749.8 564.8 L740.0 561.5 L730.1 558.3 L720.4 555.0 L710.7 551.8 L701.0 548.5 L691.4 545.2 L681.9 542.0 L672.4 538.7 L663.0 535.5 L653.7 532.2 L644.5 528.9 L635.3 525.7 L626.2 522.4 L617.2 519.2 L608.3 515.9 L599.5 512.6 L590.7 509.4 L582.1 506.1 L573.6 502.9 L565.1 499.6 L556.8 496.3 L548.6 493.1 L540.4 489.8 L532.4 486.6 L524.5 483.3 L516.7 480.0 L509.1 476.8 L501.5 473.5 L494.1 470.3 L486.8 467.0 L479.6 463.7 L472.5 460.5 L465.6 457.2 L458.8 454.0 L452.2 450.7 L445.7 447.4 L439.3 444.2 L433.1 440.9 L427.0 437.7 L421.0 434.4 L415.2 431.1 L409.6 427.9 L404.1 424.6 L398.7 421.4 L393.5 418.1 L388.5 414.8 L383.6 411.6 L378.9 408.3 L374.3 405.1 L369.9 401.8 L365.6 398.5 L361.5 395.3 L357.6 392.0 L353.9 388.8 L350.3 385.5 L346.9 382.2 L343.6 379.0 L340.5 375.7 L337.6 372.5 L334.9 369.2 L332.3 365.9 L329.9 362.7 L327.7 359.4 L325.7 356.2 L323.8 352.9 L322.1 349.6 L320.6 346.4 L319.3 343.1 L318.1 339.9 L317.1 336.6 L316.3 333.3 L315.7 330.1 L315.3 326.8 L315.0 323.6 L314.9 320.3 L315.0 317.0 L315.3 313.8 L315.7 310.5 L316.3 307.3 L317.1 304.0 L318.1 300.7 L319.3 297.5 L320.6 294.2 L322.1 291.0 L323.8 287.7 L325.7 284.4 L327.7 281.2 L329.9 277.9 L332.3 274.7 L334.9 271.4 L337.6 268.1 L340.5 264.9 L343.6 261.6 L346.9 258.4 L350.3 255.1 L353.9 251.8 L357.6 248.6 L361.5 245.3 L365.6 242.1 L369.9 238.8 L374.3 235.5 L378.9 232.3 L383.6 229.0 L388.5 225.8 L393.5 222.5 L398.7 219.2 L404.1 216.0 L409.6 212.7 L415.2 209.5 L421.0 206.2 L427.0 202.9 L433.1 199.7 L439.3 196.4 L445.7 193.2 L452.2 189.9 L458.8 186.6 L465.6 183.4 L472.5 180.1 L479.6 176.9 L486.8 173.6 L494.1 170.3 L501.5 167.1 L509.1 163.8 L516.7 160.6 L524.5 157.3 L532.4 154.0 L540.4 150.8 L548.6 147.5 L556.8 144.3 L565.1 141.0 L573.6 137.7 L582.1 134.5 L590.7 131.2 L599.5 128.0 L608.3 124.7 L617.2 121.4 L626.2 118.2 L635.3 114.9 L644.5 111.7 L653.7 108.4 L663.0 105.1 L672.4 101.9 L681.9 98.6 L691.4 95.4 L701.0 92.1 L710.7 88.8 L720.4 85.6 L730.1 82.3 L740.0 79.1 L749.8 75.8 L759.7 72.5 L769.7 69.3 L779.7 66.0 L789.7 62.8 L799.8 59.5 L809.9 56.2 L820.0 53.0 L830.2 49.7 L840.4 46.5 L850.6 43.2 L860.8 39.9 L871.0 36.7 L881.2 33.4 L891.5 30.2 L901.7 26.9" fill="none" stroke="#808080" stroke-width="1.9" stroke-dasharray="1.9 3.6"/>
<g font-family="Liberation Sans, sans-serif" font-size="11" fill="#8a8a8a"><text x="1488.5" y="330.5" text-anchor="middle">+180<tspan dx="3" dy="-4.5" font-size="7">°</tspan></text><text x="1390.7" y="330.5" text-anchor="middle">+210<tspan dx="3" dy="-4.5" font-size="7">°</tspan></text><text x="1292.9" y="330.5" text-anchor="middle">+240<tspan dx="3" dy="-4.5" font-size="7">°</tspan></text><text x="1195.1" y="330.5" text-anchor="middle">+270<tspan dx="3" dy="-4.5" font-size="7">°</tspan></text><text x="1097.3" y="330.5" text-anchor="middle">+300<tspan dx="3" dy="-4.5" font-size="7">°</tspan></text><text x="999.5" y="330.5" text-anchor="middle">+330<tspan dx="3" dy="-4.5" font-size="7">°</tspan></text><text x="901.7" y="330.5" text-anchor="middle">+0<tspan dx="3" dy="-4.5" font-size="7">°</tspan></text><text x="803.9" y="330.5" text-anchor="middle">+30<tspan dx="3" dy="-4.5" font-size="7">°</tspan></text><text x="706.1" y="330.5" text-anchor="middle">+60<tspan dx="3" dy="-4.5" font-size="7">°</tspan></text><text x="608.3" y="330.5" text-anchor="middle">+90<tspan dx="3" dy="-4.5" font-size="7">°</tspan></text><text x="510.5" y="330.5" text-anchor="middle">+120<tspan dx="3" dy="-4.5" font-size="7">°</tspan></text><text x="412.7" y="330.5" text-anchor="middle">+150<tspan dx="3" dy="-4.5" font-size="7">°</tspan></text><text x="314.9" y="330.5" text-anchor="middle">+180<tspan dx="3" dy="-4.5" font-size="7">°</tspan></text><text x="901.7" y="25.4" text-anchor="middle">+90<tspan dx="3" dy="-4.5" font-size="7">°</tspan></text><text x="901.7" y="123.2" text-anchor="middle">+60<tspan dx="3" dy="-4.5" font-size="7">°</tspan></text><text x="901.7" y="221.0" text-anchor="middle">+30<tspan dx="3" dy="-4.5" font-size="7">°</tspan></text><text x="901.7" y="428.6" text-anchor="middle">−30<tspan dx="3" dy="-4.5" font-size="7">°</tspan></text><text x="901.7" y="526.4" text-anchor="middle">−60<tspan dx="3" dy="-4.5" font-size="7">°</tspan></text><text x="901.7" y="624.2" text-anchor="middle">−90<tspan dx="3" dy="-4.5" font-size="7">°</tspan></text></g>
<path d="M865.7 441.0 L865.8 441.8 L865.9 442.6 L866.1 443.4 L866.2 444.3 L866.3 445.1 L866.4 445.9 L866.6 446.7 L866.7 447.5 L866.8 448.3 L867.0 449.1 L867.1 450.0 L867.2 450.8 L867.4 451.6 L867.5 452.4 L867.6 453.2 L867.8 454.0 L867.9 454.9 L868.0 455.7 L868.2 456.5 L868.3 457.3 L868.4 458.1 L868.6 458.9 L868.7 459.7 L868.8 460.6 L869.0 461.4 L869.1 462.2 L869.3 463.0 L869.4 463.8 L869.5 464.6 L869.7 465.4 L869.8 466.3 L870.0 467.1 L870.1 467.9 L870.3 468.7 L870.4 469.5 L870.5 470.3 L870.7 471.2 L870.8 472.0 L871.0 472.8 L871.1 473.6 L871.3 474.4 L871.4 475.2 L871.6 476.0 L871.7 476.9 L871.9 477.7 L872.0 478.5 L872.2 479.3 L872.3 480.1 L872.5 480.9 L872.6 481.7 L872.8 482.6 L873.0 483.4 L873.1 484.2 L873.3 485.0 L873.4 485.8 L873.6 486.6 L873.7 487.5 L873.9 488.3 L874.0 489.1 L874.2 489.9 L874.4 490.7 L874.5 491.5 L874.7 492.3 L874.8 493.2 L875.0 494.0 L875.2 494.8 L875.3 495.6 L875.5 496.4 L875.7 497.2 L875.8 498.0 L876.0 498.9 L876.2 499.7 L876.3 500.5 L876.5 501.3 L876.7 502.1 L876.8 502.9 L877.0 503.8 L877.2 504.6 L877.3 505.4 L877.5 506.2 L877.7 507.0 L877.8 507.8 L878.0 508.6 L878.2 509.5 L878.3 510.3 L878.5 511.1 L878.7 511.9 L878.9 512.7 L879.0 513.5 L879.2 514.3 L879.4 515.2 L879.6 516.0 L879.7 516.8 L879.9 517.6 L880.1 518.4 L880.3 519.2 L880.4 520.1 L880.6 520.9 L880.8 521.7 L881.0 522.5 L881.1 523.3 L881.3 524.1 L881.5 524.9 L881.7 525.8 L881.9 526.6 L882.0 527.4 L882.2 528.2 L882.4 529.0 L882.6 529.8 L882.8 530.6 L882.9 531.5 L883.1 532.3 L883.3 533.1 L883.5 533.9 L883.7 534.7 L883.9 535.5 L884.0 536.4 L884.2 537.2 L884.4 538.0 L884.6 538.8 L884.8 539.6 L885.0 540.4 L885.1 541.2 L885.3 542.1 L885.5 542.9 L885.7 543.7 L885.9 544.5 L886.1 545.3 L886.3 546.1 L886.5 546.9 L886.6 547.8 L886.8 548.6 L887.0 549.4 L887.2 550.2 L887.4 551.0 L887.6 551.8 L887.8 552.7 L888.0 553.5 L888.2 554.3 L888.3 555.1 L888.5 555.9 L888.7 556.7 L888.9 557.5 L889.1 558.4 L889.3 559.2 L889.5 560.0 L889.7 560.8 L889.9 561.6 L890.1 562.4 L890.3 563.2 L890.5 564.1 L890.7 564.9 L890.8 565.7 L891.0 566.5 L891.2 567.3 L891.4 568.1 L891.6 568.9 L891.8 569.8 L892.0 570.6 L892.2 571.4 L892.4 572.2 L892.6 573.0 L892.8 573.8 L893.0 574.7 L893.2 575.5 L893.4 576.3 L893.6 577.1 L893.8 577.9 L894.0 578.7 L894.2 579.5 L894.4 580.4 L894.6 581.2 L894.8 582.0 L895.0 582.8 L895.1 583.6 L895.3 584.4 L895.5 585.2 L895.7 586.1 L895.9 586.9 L896.1 587.7 L896.3 588.5 L896.5 589.3 L896.7 590.1 L896.9 590.9 L897.1 591.8 L897.3 592.6 L897.5 593.4 L897.7 594.2 L897.9 595.0 L898.1 595.8 L898.3 596.6 L898.5 597.5 L898.7 598.3 L898.9 599.1 L899.1 599.9 L899.3 600.7 L899.5 601.5 L899.7 602.3 L899.9 603.2 L900.1 604.0 L900.3 604.8 L900.5 605.6 L900.7 606.4 L900.9 607.2 L901.1 608.0 L901.3 608.8 L901.5 609.6 L901.7 610.4 L901.9 611.2 L902.1 612.0 L902.3 612.6 L902.8 612.9 L904.3 612.5 L906.3 611.8 L908.6 611.1 L910.9 610.3 L913.2 609.5 L915.5 608.7 L917.8 607.9 L920.2 607.1 L922.5 606.2 L924.9 605.4 L927.2 604.6 L929.6 603.8 L931.9 603.0 L934.3 602.2 L936.6 601.4 L939.0 600.6 L941.3 599.7 L943.7 598.9 L946.0 598.1 L948.4 597.3 L950.7 596.5 L953.1 595.7 L955.4 594.9 L957.8 594.0 L960.1 593.2 L962.5 592.4 L964.8 591.6 L967.1 590.8 L969.5 590.0 L971.8 589.2 L974.2 588.3 L976.5 587.5 L978.8 586.7 L981.2 585.9 L983.5 585.1 L985.8 584.3 L988.2 583.5 L990.5 582.6 L992.8 581.8 L995.2 581.0 L997.5 580.2 L999.8 579.4 L1002.1 578.6 L1004.4 577.8 L1006.8 576.9 L1009.1 576.1 L1011.4 575.3 L1013.7 574.5 L1016.0 573.7 L1018.3 572.9 L1020.6 572.0 L1022.9 571.2 L1025.2 570.4 L1027.5 569.6 L1029.8 568.8 L1032.1 568.0 L1034.4 567.2 L1036.7 566.3 L1039.0 565.5 L1041.2 564.7 L1043.5 563.9 L1045.8 563.1 L1048.1 562.3 L1050.3 561.5 L1052.6 560.6 L1054.9 559.8 L1057.1 559.0 L1059.4 558.2 L1061.7 557.4 L1063.9 556.6 L1066.2 555.7 L1068.4 554.9 L1070.7 554.1 L1072.9 553.3 L1075.1 552.5 L1077.4 551.7 L1079.6 550.9 L1081.8 550.0 L1084.0 549.2 L1086.3 548.4 L1088.5 547.6 L1090.7 546.8 L1092.9 546.0 L1095.1 545.2 L1097.3 544.3 L1099.5 543.5 L1101.7 542.7 L1103.9 541.9 L1106.1 541.1 L1108.3 540.3 L1110.5 539.4 L1112.6 538.6 L1114.8 537.8 L1117.0 537.0 L1119.1 536.2 L1121.3 535.4 L1123.5 534.6 L1125.6 533.7 L1127.8 532.9 L1129.9 532.1 L1132.0 531.3 L1134.2 530.5 L1136.3 529.7 L1138.4 528.9 L1140.5 528.0 L1142.7 527.2 L1144.8 526.4 L1146.9 525.6 L1149.0 524.8 L1151.1 524.0 L1153.2 523.2 L1155.3 522.3 L1157.3 521.5 L1159.4 520.7 L1161.5 519.9 L1163.6 519.1 L1165.6 518.3 L1167.7 517.4 L1169.7 516.6 L1171.8 515.8 L1173.8 515.0 L1175.9 514.2 L1177.9 513.4 L1179.9 512.6 L1182.0 511.7 L1184.0 510.9 L1186.0 510.1 L1188.0 509.3 L1190.0 508.5 L1192.0 507.7 L1194.0 506.9 L1196.0 506.0 L1197.9 505.2 L1199.9 504.4 L1201.9 503.6 L1203.8 502.8 L1205.8 502.0 L1207.7 501.1 L1209.7 500.3 L1211.6 499.5 L1213.6 498.7 L1215.5 497.9 L1217.4 497.1 L1219.3 496.3 L1221.2 495.4 L1223.1 494.6 L1225.0 493.8 L1226.9 493.0 L1228.8 492.2 L1230.7 491.4 L1232.6 490.6 L1234.4 489.7 L1236.3 488.9 L1238.1 488.1 L1240.0 487.3 L1241.8 486.5 L1243.6 485.7 L1245.5 484.8 L1247.3 484.0 L1249.1 483.2 L1250.9 482.4 L1252.7 481.6 L1254.5 480.8 L1256.3 480.0 L1258.1 479.1 L1259.8 478.3 L1261.6 477.5 L1263.4 476.7 L1265.1 475.9 L1266.9 475.1 L1268.6 474.3 L1270.3 473.4 L1272.1 472.6 L1273.8 471.8 L1275.5 471.0 L1277.2 470.2 L1278.9 469.4 L1280.6 468.5 L1282.3 467.7 L1283.9 466.9 L1285.6 466.1 L1287.3 465.3 L1288.9 464.5 L1290.6 463.7 L1292.2 462.8 L1293.8 462.0 L1295.5 461.2 L1297.1 460.4 L1298.7 459.6 L1300.3 458.8 L1301.9 458.0 L1303.5 457.1 L1305.0 456.3 L1306.6 455.5 L1308.2 454.7 L1309.7 453.9 L1311.3 453.1 L1312.8 452.2 L1314.3 451.4 L1315.9 450.6 L1317.4 449.8 L1318.9 449.0 L1320.4 448.2 L1321.9 447.4 L1323.4 446.5 L1324.8 445.7 L1326.3 444.9 L1327.8 444.1 L1329.2 443.3 L1330.7 442.5 L1332.1 441.7 L1333.5 440.8 L1334.9 440.0 L1336.4 439.2 L1337.8 438.4 L1339.2 437.6 L1340.5 436.8 L1341.9 435.9 L1343.3 435.1 L1344.6 434.3 L1346.0 433.5 L1347.3 432.7 L1348.7 431.9 L1350.0 431.1 L1351.3 430.2 L1352.6 429.4 L1353.9 428.6 L1355.2 427.8 L1356.5 427.0 L1357.8 426.2 L1359.0 425.4 L1360.3 424.5 L1361.6 423.7 L1362.8 422.9 L1364.0 422.1 L1365.2 421.3 L1366.5 420.5 L1367.7 419.6 L1368.9 418.8 M874.9 505.7 L874.8 506.5 L874.7 507.2 L874.6 508.0 L874.4 508.7 L874.3 509.5 L874.2 510.3 L874.1 511.0 L874.0 511.8 L873.9 512.5 L873.7 513.3 L873.6 514.1 L873.5 514.8 L873.4 515.6 L873.3 516.3 L873.2 517.1 L873.1 517.8 L873.0 518.6 L872.8 519.3 L872.7 520.1 L872.6 520.8 L872.5 521.6 L872.4 522.3 L872.3 523.1 L872.2 523.8 L872.1 524.5 L872.0 525.3 L871.8 526.0 L871.7 526.8 L871.6 527.5 L871.5 528.2 L871.4 529.0 L871.3 529.7 L871.2 530.4 L871.1 531.2 L871.0 531.9 L870.9 532.6 L870.7 533.3 L870.6 534.1 L870.5 534.8 L870.4 535.5 L870.3 536.2 L870.2 536.9 L870.1 537.7 L870.0 538.4 L869.8 539.1 L869.7 539.8 L869.6 540.5 L869.5 541.2 L869.4 541.9 L869.3 542.6 L869.2 543.3 L869.0 544.0 L868.9 544.7 L868.8 545.4 L868.7 546.1 L868.6 546.8 L868.5 547.4 L868.3 548.1 L868.2 548.8 L868.1 549.5 L868.0 550.1 L867.8 550.8 L867.7 551.5 L867.6 552.1 L867.5 552.8 L867.3 553.4 L867.2 554.1 L867.1 554.7 L866.9 555.4 L866.8 556.0 L866.6 556.7 L866.5 557.3 L866.4 557.9 L866.2 558.5 L866.1 559.1 L865.9 559.7 L865.7 560.3 L865.6 560.9 L865.4 561.5 L865.3 562.1 L865.1 562.7 L864.9 563.3 L864.7 563.8 L864.5 564.4 L864.4 565.0 L864.2 565.5 L864.0 566.0 L863.8 566.6 L863.5 567.1 L863.3 567.6 L863.1 568.1 L862.9 568.6 L862.6 569.1 L862.4 569.6 L862.1 570.0 L861.9 570.5 L861.6 570.9 L861.3 571.4 L861.0 571.8 L860.7 572.2 L860.4 572.6 L860.1 573.0 L859.7 573.4 L859.4 573.7 L859.0 574.1 L858.6 574.4 L858.2 574.8 L857.8 575.1 L857.4 575.4 L857.0 575.6 L856.5 575.9 L856.0 576.2 L855.5 576.4 L855.0 576.6 L854.5 576.8 L853.9 577.0 L853.3 577.2 L852.7 577.3 L852.1 577.4 L851.4 577.6 L850.8 577.6 L850.1 577.7 L849.3 577.8 L848.6 577.8 L847.8 577.9 L847.0 577.9 L846.2 577.8 L845.3 577.8 L844.4 577.8 L843.5 577.7 L842.5 577.6 L841.6 577.5 L840.6 577.4 L839.5 577.2 L838.5 577.1 L837.4 576.9 L836.2 576.7 L835.1 576.5 L833.9 576.3 L832.7 576.1 L831.5 575.8 L830.2 575.5 L828.9 575.2 L827.6 574.9 L826.2 574.6 L824.9 574.3 L823.4 574.0 L822.0 573.6 L820.6 573.2 L819.1 572.8 L817.6 572.5 L816.1 572.0 L814.5 571.6 L812.9 571.2 L811.4 570.8 L809.7 570.3 L808.1 569.8 L806.4 569.4 L804.8 568.9 L803.1 568.4 L801.4 567.9 L799.6 567.4 L797.9 566.9 L796.1 566.3 L794.3 565.8 L792.5 565.3 L790.7 564.7 L788.9 564.2 L787.0 563.6 L785.2 563.0 L783.3 562.5 L781.4 561.9 L779.5 561.3 L777.6 560.7 L775.7 560.1 L773.8 559.5 L771.8 558.9 L769.9 558.3 L767.9 557.7 L765.9 557.0 L764.0 556.4 L762.0 555.8 L760.0 555.1 L758.0 554.5 L756.0 553.8 L753.9 553.2 L751.9 552.5 L749.9 551.9 L747.8 551.2 L745.8 550.5 L743.7 549.9 L741.7 549.2 L739.6 548.5 L737.5 547.9 L735.5 547.2 L733.4 546.5 L731.3 545.8 L729.2 545.1 L727.1 544.4 L725.0 543.7 L722.9 543.0 L720.8 542.3 L718.7 541.6 L716.6 540.9 L714.5 540.2 L712.4 539.5 L710.3 538.8 L708.1 538.1 L706.0 537.4 L703.9 536.7 L701.8 535.9 L699.6 535.2 L697.5 534.5 L695.4 533.8 L693.3 533.1 L691.1 532.3 L689.0 531.6 L686.9 530.9 L684.7 530.1 L682.6 529.4 L680.5 528.7 L678.4 527.9 L676.2 527.2 L674.1 526.5 L672.0 525.7 L669.8 525.0 L667.7 524.2 L665.6 523.5 L663.5 522.8 L661.3 522.0 L659.2 521.3 L657.1 520.5 L655.0 519.8 L652.8 519.0 L650.7 518.3 L648.6 517.5 L646.5 516.8 L644.4 516.0 L642.3 515.3 L640.2 514.5 L638.1 513.8 L636.0 513.0 L633.9 512.2 L631.8 511.5 L629.7 510.7 L627.6 510.0 L625.5 509.2 L623.4 508.4 L621.3 507.7 L619.2 506.9 L617.1 506.2 L615.1 505.4 L613.0 504.6 L610.9 503.9 L608.9 503.1 L606.8 502.3 L604.7 501.6 L602.7 500.8 L600.6 500.0 L598.6 499.3 L596.6 498.5 L594.5 497.7 L592.5 496.9 L590.4 496.2 L588.4 495.4 L586.4 494.6 L584.4 493.9 L582.4 493.1 L580.4 492.3 L578.3 491.5 L576.3 490.8 L574.3 490.0 L572.4 489.2 L570.4 488.4 L568.4 487.7 L566.4 486.9 L564.4 486.1 L562.5 485.3 L560.5 484.6 L558.5 483.8 L556.6 483.0 L554.6 482.2 L552.7 481.4 L550.8 480.7 L548.8 479.9 L546.9 479.1 L545.0 478.3 L543.1 477.5 L541.2 476.8 L539.3 476.0 L537.4 475.2 L535.5 474.4 L533.6 473.6 L531.7 472.9 L529.8 472.1 L528.0 471.3 L526.1 470.5 L524.2 469.7 L522.4 468.9 L520.5 468.2 L518.7 467.4 L516.9 466.6 L515.0 465.8 L513.2 465.0 L511.4 464.2 L509.6 463.4 L507.8 462.7 L506.0 461.9 L504.2 461.1 L502.4 460.3 L500.7 459.5 L498.9 458.7 L497.1 457.9 L495.4 457.1 L493.6 456.4 L491.9 455.6 L490.2 454.8 L488.4 454.0 L486.7 453.2 L485.0 452.4 L483.3 451.6 L481.6 450.8 L479.9 450.1 L478.2 449.3 L476.6 448.5 L474.9 447.7 L473.2 446.9 L471.6 446.1 L469.9 445.3 L468.3 444.5 L466.6 443.7 L465.0 442.9 L463.4 442.1 L461.8 441.4 L460.2 440.6 L458.6 439.8 L457.0 439.0 L455.4 438.2 L453.9 437.4 L452.3 436.6 L450.7 435.8 L449.2 435.0 L447.6 434.2 L446.1 433.4 L444.6 432.6 L443.1 431.8 L441.6 431.1 L440.1 430.3 L438.6 429.5 L437.1 428.7 L435.6 427.9 L434.1 427.1 L432.7 426.3 L431.2 425.5 L429.8 424.7 L428.4 423.9 L426.9 423.1 L425.5 422.3 L424.1 421.5 L422.7 420.7 L421.3 419.9 L419.9 419.1 L418.6 418.4 L417.2 417.6 L415.8 416.8 L414.5 416.0 L413.1 415.2 L411.8 414.4 L410.5 413.6 L409.2 412.8 L407.9 412.0 L406.6 411.2 L405.3 410.4 L404.0 409.6 L402.7 408.8 L401.5 408.0 L400.2 407.2 L399.0 406.4 L397.8 405.6 L396.5 404.8 L395.3 404.0 L394.1 403.2 L392.9 402.4 L391.7 401.6 L390.5 400.8 L389.4 400.0 L388.2 399.2 L387.1 398.4 L385.9 397.7 L384.8 396.9 L383.7 396.1 L382.5 395.3 L381.4 394.5 L380.3 393.7 L379.3 392.9 L378.2 392.1 L377.1 391.3 L376.1 390.5 L375.0 389.7 L374.0 388.9 L372.9 388.1 L371.9 387.3 L370.9 386.5 L369.9 385.7 L368.9 384.9 L367.9 384.1 L367.0 383.3 L366.0 382.5 L365.1 381.7 L364.1 380.9 L363.2 380.1 L362.3 379.3 L361.4 378.5 L360.5 377.7 L359.6 376.9 L358.7 376.1 L357.8 375.3 L356.9 374.5 L356.1 373.7 L355.2 372.9 L354.4 372.1 L353.6 371.3 L352.8 370.5 L352.0 369.7 L351.2 368.9 L350.4 368.1 L349.6 367.3 L348.9 366.5 L348.1 365.7 L347.4 364.9 L346.6 364.1 L345.9 363.3 L345.2 362.5 L344.5 361.7 L343.8 360.9 L343.1 360.1 L342.5 359.3 L341.8 358.5 L341.1 357.7 L340.5 356.9 L339.9 356.1 L339.3 355.3 L338.6 354.5 L338.0 353.7 L337.5 352.9 L336.9 352.1 L336.3 351.3 L335.7 350.5 L335.2 349.7 L334.7 348.9 L334.1 348.1 L333.6 347.3 L333.1 346.5 L332.6 345.7 L332.1 344.9 L331.7 344.1 L331.2 343.3 L330.7 342.5 L330.3 341.7 L329.9 340.9 L329.4 340.1 L329.0 339.3 L328.6 338.5 L328.2 337.7 L327.8 336.9 L327.5 336.1 L327.1 335.3 L326.8 334.5 L326.4 333.7 L326.1 332.9 L325.8 332.1 L325.5 331.3 L325.2 330.5 L324.9 329.7 L324.6 328.9 L324.4 328.1 L324.1 327.3 L323.9 326.5 L323.6 325.7 L323.4 324.9 L323.2 324.1 L323.0 323.3 L322.8 322.5 L322.6 321.7 L322.4 320.9 L322.3 320.1 L322.1 319.3 L322.0 318.5 L321.9 317.7 L321.8 316.9 L321.7 316.1 L321.6 315.3 L321.5 314.5 L321.4 313.7 L321.3 312.9 L321.3 312.1 L321.2 311.3 L321.2 310.5 L321.2 309.7 L321.2 308.9 L321.2 308.1 L321.2 307.3 L321.2 306.5 L321.3 305.7 L321.3 304.9 L321.4 304.1 L321.4 303.3 L321.5 302.5 L321.6 301.7 L321.7 300.9 L321.8 300.1 L321.9 299.3 L322.0 298.5 L322.2 297.7 L322.3 296.9 L322.5 296.1 L322.7 295.3 L322.8 294.5 L323.0 293.7 L323.2 292.9 L323.4 292.1 L323.7 291.3 L323.9 290.5 L324.1 289.7 L324.4 288.9 L324.7 288.1 L324.9 287.3 L325.2 286.5 L325.5 285.7 L325.8 284.9 L326.2 284.1 L326.5 283.3 M1476.5 282.5 L1475.9 281.7 L1475.2 280.9 L1474.5 280.1 L1473.8 279.3 L1473.1 278.5 L1472.4 277.8 L1471.6 277.0 L1470.9 276.2 L1470.1 275.4 L1469.4 274.6 L1468.6 273.8 L1467.8 273.0 L1467.0 272.2 L1466.2 271.4 L1465.4 270.6 L1464.6 269.8 L1463.8 269.0 L1462.9 268.2 L1462.1 267.4 L1461.2 266.6 L1460.3 265.8 L1459.4 265.0 L1458.5 264.2 L1457.6 263.4 L1456.7 262.6 L1455.8 261.8 L1454.9 261.0 L1453.9 260.2 L1453.0 259.4 L1452.0 258.6 L1451.0 257.8 L1450.0 257.0 L1449.0 256.2 L1448.0 255.4 L1447.0 254.6 L1446.0 253.8 L1445.0 253.0 L1443.9 252.2 L1442.9 251.4 L1441.8 250.6 L1440.7 249.8 L1439.6 249.0 L1438.5 248.2 L1437.4 247.4 L1436.3 246.6 L1435.2 245.8 L1434.1 245.0 L1432.9 244.2 L1431.8 243.4 L1430.6 242.6 L1429.4 241.8 L1428.2 241.0 L1427.1 240.2 L1425.9 239.4 L1424.6 238.6 L1423.4 237.8 L1422.2 237.0 L1421.0 236.3 L1419.7 235.5 L1418.5 234.7 L1417.2 233.9 L1415.9 233.1 L1414.6 232.3 L1413.3 231.5 L1412.0 230.7 L1410.7 229.9 L1409.4 229.1 L1408.1 228.3 L1406.7 227.5 L1405.4 226.7 L1404.0 225.9 L1402.7 225.1 L1401.3 224.3 L1399.9 223.5 L1398.5 222.7 L1397.1 221.9 L1395.7 221.1 L1394.3 220.3 L1392.9 219.5 L1391.4 218.7 L1390.0 218.0 L1388.5 217.2 L1387.1 216.4 L1385.6 215.6 L1384.1 214.8 L1382.6 214.0 L1381.1 213.2 L1379.6 212.4 L1378.1 211.6 L1376.6 210.8 L1375.1 210.0 L1373.5 209.2 L1372.0 208.4 L1370.4 207.6 L1368.9 206.8 L1367.3 206.1 L1365.7 205.3 L1364.1 204.5 L1362.5 203.7 L1360.9 202.9 L1359.3 202.1 L1357.7 201.3 L1356.1 200.5 L1354.4 199.7 L1352.8 198.9 L1351.1 198.1 L1349.5 197.3 L1347.8 196.6 M864.0 512.7 L863.1 512.5 L862.3 512.3 L861.4 512.0 L860.6 511.8 L859.7 511.6 L858.8 511.3 L857.9 511.1 L857.1 510.8 L856.2 510.6 L855.3 510.3 L854.4 510.0 L853.6 509.7 L852.7 509.5 L851.8 509.2 L850.9 508.9 L850.0 508.6 L849.1 508.3 L848.2 508.0 L847.3 507.7 L846.5 507.4 L845.6 507.0 L844.7 506.7 L843.7 506.4 L842.8 506.1 L841.9 505.7 L841.0 505.4 L840.1 505.0 L839.2 504.7 L838.3 504.3 L837.4 504.0 L836.5 503.6 L835.5 503.2 L834.6 502.9 L833.7 502.5 L832.8 502.1 L831.8 501.7 L830.9 501.3 L830.0 500.9 L829.0 500.5 L828.1 500.1 L827.2 499.7 L826.2 499.3 L825.3 498.9 L824.3 498.5 L823.4 498.1 L822.5 497.7 L821.5 497.2 L820.6 496.8 L819.6 496.4 L818.7 495.9 L817.7 495.5 L816.7 495.1 L815.8 494.6 L814.8 494.2 L813.9 493.7 L812.9 493.2 L811.9 492.8 L811.0 492.3 L810.0 491.8 L809.0 491.4 L808.1 490.9 L807.1 490.4 L806.1 490.0 L805.1 489.5 L804.2 489.0 L803.2 488.5 L802.2 488.0 L801.2 487.5 L800.3 487.0 L799.3 486.5 L798.3 486.0 L797.3 485.5 L796.3 485.0 L795.3 484.5 L794.3 484.0 L793.4 483.5 L792.4 482.9 L791.4 482.4 L790.4 481.9 L789.4 481.4 L788.4 480.8 L787.4 480.3 L786.4 479.8 L785.4 479.3 L784.4 478.7 L783.4 478.2 L782.4 477.6 L781.4 477.1 L780.4 476.5 L779.5 476.0 L778.5 475.4 L777.5 474.9 L776.5 474.3 L775.5 473.8 L774.5 473.2 L773.5 472.7 L772.5 472.1 L771.5 471.5 L770.5 471.0 L769.5 470.4 L768.5 469.8 L767.4 469.3 L766.4 468.7 L765.4 468.1 L764.4 467.5 L763.4 467.0 L762.4 466.4 L761.4 465.8 L760.4 465.2 L759.4 464.6 L758.4 464.0 L757.4 463.4 L756.4 462.8 L755.4 462.3 L754.4 461.7 L753.4 461.1 L752.4 460.5 L751.4 459.9 L750.4 459.3 L749.4 458.7 L748.4 458.1 L747.4 457.5 L746.4 456.9 L745.5 456.2 L744.5 455.6 L743.5 455.0 L742.5 454.4 L741.5 453.8 L740.5 453.2 L739.5 452.6 L738.5 452.0 L737.5 451.3 L736.5 450.7 L735.5 450.1 L734.5 449.5 L733.6 448.8 L732.6 448.2 L731.6 447.6 L730.6 447.0 L729.6 446.3 L728.6 445.7 L727.7 445.1 L726.7 444.4 L725.7 443.8 L724.7 443.2 L723.8 442.5 L722.8 441.9 L721.8 441.3 L720.8 440.6 L719.9 440.0 L718.9 439.4 L717.9 438.7 L717.0 438.1 L716.0 437.4 L715.0 436.8 L714.1 436.1 L713.1 435.5 L712.2 434.8 L711.2 434.2 L710.2 433.5 L709.3 432.9 L708.3 432.2 L707.4 431.6 L706.4 430.9 L705.5 430.3 L704.5 429.6 L703.6 429.0 L702.7 428.3 L701.7 427.7 L700.8 427.0 L699.9 426.4 L698.9 425.7 L698.0 425.0 L697.1 424.4 L696.1 423.7 L695.2 423.1 L694.3 422.4 L693.4 421.7 L692.4 421.1 L691.5 420.4 L690.6 419.7 L689.7 419.1 L688.8 418.4 L687.9 417.7 L687.0 417.1 L686.1 416.4 L685.2 415.7 L684.3 415.1 L683.4 414.4 L682.5 413.7 L681.6 413.0 L680.7 412.4 L679.8 411.7 L678.9 411.0 L678.1 410.3 L677.2 409.7 L676.3 409.0 L675.4 408.3 L674.6 407.6 L673.7 407.0 L672.8 406.3 L672.0 405.6 L671.1 404.9 L670.2 404.2 L669.4 403.6 L668.5 402.9 L667.7 402.2 L666.8 401.5 L666.0 400.8 L665.2 400.2 L664.3 399.5 L663.5 398.8 L662.7 398.1 L661.8 397.4 L661.0 396.7 L660.2 396.1 L659.4 395.4 L658.5 394.7 L657.7 394.0 L656.9 393.3 L656.1 392.6 L655.3 391.9 L654.5 391.2 L653.7 390.6 L652.9 389.9 L652.1 389.2 L651.3 388.5 L650.6 387.8 L649.8 387.1 L649.0 386.4 L648.2 385.7 L647.4 385.0 L646.7 384.3 L645.9 383.6 L645.1 383.0 L644.4 382.3 L643.6 381.6 L642.9 380.9 L642.1 380.2 L641.4 379.5 L640.6 378.8 L639.9 378.1 L639.2 377.4 L638.4 376.7 L637.7 376.0 L637.0 375.3 L636.3 374.6 L635.5 373.9 L634.8 373.2 L634.1 372.5 L633.4 371.8 L632.7 371.1 L632.0 370.4 L631.3 369.7 L630.6 369.0 L629.9 368.3 L629.3 367.6 L628.6 366.9 L627.9 366.2 L627.2 365.5 L626.6 364.8 L625.9 364.1 L625.2 363.4 L624.6 362.7 L623.9 362.0 L623.3 361.3 L622.6 360.6 L622.0 359.9 L621.3 359.2 L620.7 358.5 L620.1 357.8 L619.5 357.1 L618.8 356.4 L618.2 355.7 L617.6 355.0 L617.0 354.3 L616.4 353.6 L615.8 352.9 L615.2 352.2 L614.6 351.5 L614.0 350.8 L613.4 350.1 L612.8 349.4 L612.2 348.7 L611.7 348.0 L611.1 347.3 L610.5 346.5 L610.0 345.8 L609.4 345.1 L608.9 344.4 L608.3 343.7 L607.8 343.0 L607.2 342.3 L606.7 341.6 L606.1 340.9 L605.6 340.2 L605.1 339.5 L604.6 338.8 L604.1 338.1 L603.5 337.4 L603.0 336.7 L602.5 336.0 L602.0 335.3 L601.5 334.5 L601.1 333.8 L600.6 333.1 L600.1 332.4 L599.6 331.7 L599.1 331.0 L598.7 330.3 L598.2 329.6 L597.7 328.9 L597.3 328.2 L596.8 327.5 L596.4 326.8 L595.9 326.1 L595.5 325.4 L595.1 324.6 L594.6 323.9 L594.2 323.2 L593.8 322.5 L593.4 321.8 L593.0 321.1 L592.6 320.4 L592.2 319.7 L591.8 319.0 L591.4 318.3 L591.0 317.6 L590.6 316.9 L590.2 316.2 L589.8 315.5 L589.5 314.7 L589.1 314.0 L588.7 313.3 L588.4 312.6 L588.0 311.9 L587.7 311.2 L587.3 310.5 L587.0 309.8 L586.6 309.1 L586.3 308.4 L586.0 307.7 L585.7 307.0 L585.3 306.3 L585.0 305.6 L584.7 304.8 L584.4 304.1 L584.1 303.4 L583.8 302.7 L583.5 302.0 L583.2 301.3 L583.0 300.6 L582.7 299.9 L582.4 299.2 L582.1 298.5 L581.9 297.8 L581.6 297.1 L581.4 296.4 L581.1 295.7 L580.9 295.0 L580.6 294.3 L580.4 293.6 L580.2 292.9 L579.9 292.1 L579.7 291.4 L579.5 290.7 L579.3 290.0 L579.1 289.3 L578.9 288.6 L578.7 287.9 L578.5 287.2 L578.3 286.5 L578.1 285.8 L577.9 285.1 L577.7 284.4 L577.6 283.7 L577.4 283.0 L577.2 282.3 L577.1 281.6 L576.9 280.9 L576.8 280.2 L576.6 279.5 L576.5 278.8 L576.3 278.1 L576.2 277.4 L576.1 276.7 L576.0 276.0 L575.8 275.3 L575.7 274.6 L575.6 273.9 L575.5 273.2 L575.4 272.5 L575.3 271.8 L575.2 271.1 L575.1 270.4 L575.0 269.7 L575.0 269.0 L574.9 268.3 L574.8 267.6 L574.8 266.9 L574.7 266.2 L574.6 265.5 L574.6 264.8 L574.5 264.1 L574.5 263.4 L574.5 262.7 L574.4 262.0 L574.4 261.3 L574.4 260.6 L574.3 259.9 L574.3 259.2 L574.3 258.5 L574.3 257.9 L574.3 257.2 L574.3 256.5 L574.3 255.8 L574.3 255.1 L574.3 254.4 L574.3 253.7 L574.4 253.0 L574.4 252.3 L574.4 251.6 L574.5 250.9 L574.5 250.3 L574.5 249.6 L574.6 248.9 L574.6 248.2 L574.7 247.5 L574.7 246.8 L574.8 246.1 L574.9 245.4 L574.9 244.8 L575.0 244.1 L575.1 243.4 L575.2 242.7 L575.3 242.0 L575.4 241.3 L575.5 240.6 L575.6 240.0 L575.7 239.3 L575.8 238.6 L575.9 237.9 L576.0 237.2 L576.1 236.6 L576.2 235.9 L576.4 235.2 L576.5 234.5 L576.6 233.8 L576.8 233.2 L576.9 232.5 L577.1 231.8 L577.2 231.1 L577.4 230.5 L577.5 229.8 L577.7 229.1 L577.8 228.4 L578.0 227.8 L578.2 227.1 L578.4 226.4 L578.5 225.7 L578.7 225.1 L578.9 224.4 L579.1 223.7 L579.3 223.1 L579.5 222.4 L579.7 221.7 L579.9 221.1 L580.1 220.4 L580.3 219.7 L580.5 219.1 L580.7 218.4 L581.0 217.7 L581.2 217.1 L581.4 216.4 L581.6 215.8 L581.9 215.1 L582.1 214.4 L582.3 213.8 L582.6 213.1 L582.8 212.5 L583.1 211.8 L583.3 211.2 L583.6 210.5 L583.8 209.8 L584.1 209.2 L584.4 208.5 L584.6 207.9 L584.9 207.2 L585.2 206.6 L585.4 205.9 L585.7 205.3 L586.0 204.7 L586.3 204.0 L586.6 203.4 L586.8 202.7 L587.1 202.1 L587.4 201.4 L587.7 200.8 L588.0 200.2 L588.3 199.5 L588.6 198.9 L588.9 198.2 L589.2 197.6 L589.5 197.0 M790.1 515.8 L788.9 515.2 L787.8 514.5 L786.6 513.9 L785.4 513.3 L784.2 512.6 L783.1 512.0 L781.9 511.4 L780.7 510.7 L779.5 510.1 L778.4 509.4 L777.2 508.8 L776.0 508.1 L774.8 507.5 L773.6 506.8 L772.4 506.2 L771.3 505.5 L770.1 504.9 L768.9 504.2 L767.7 503.5 L766.5 502.9 L765.3 502.2 L764.2 501.5 L763.0 500.9 L761.8 500.2 L760.6 499.5 L759.4 498.8 L758.2 498.2 L757.1 497.5 L755.9 496.8 L754.7 496.1 L753.5 495.4 L752.3 494.7 L751.1 494.1 L750.0 493.4 L748.8 492.7 L747.6 492.0 L746.4 491.3 L745.2 490.6 L744.1 489.9 L742.9 489.2 L741.7 488.5 L740.5 487.8 L739.4 487.1 L738.2 486.4 L737.0 485.7 L735.8 485.0 L734.7 484.3 L733.5 483.6 L732.3 482.9 L731.2 482.2 L730.0 481.5 L728.9 480.8 L727.7 480.1 L726.5 479.4 L725.4 478.6 L724.2 477.9 L723.1 477.2 L721.9 476.5 L720.8 475.8 L719.6 475.1 L718.5 474.4 L717.3 473.6 L716.2 472.9 L715.0 472.2 L713.9 471.5 L712.7 470.8 L711.6 470.0 L710.5 469.3 L709.3 468.6 L708.2 467.9 L707.1 467.1 L705.9 466.4 L704.8 465.7 L703.7 465.0 L702.6 464.2 L701.5 463.5 L700.3 462.8 L699.2 462.0 L698.1 461.3 L697.0 460.6 L695.9 459.8 L694.8 459.1 L693.7 458.4 L692.6 457.6 L691.5 456.9 L690.4 456.2 L689.3 455.4 L688.2 454.7 L687.1 454.0 L686.1 453.2 L685.0 452.5 L683.9 451.7 L682.8 451.0 L681.8 450.3 L680.7 449.5 L679.6 448.8 L678.6 448.0 L677.5 447.3 L676.5 446.6 L675.4 445.8 L674.4 445.1 L673.3 444.3 L672.3 443.6 L671.2 442.8 L670.2 442.1 L669.2 441.4 L668.1 440.6 L667.1 439.9 L666.1 439.1 L665.1 438.4 L664.0 437.6 L663.0 436.9 L662.0 436.1 L661.0 435.4 L660.0 434.6 L659.0 433.9 L658.0 433.1 L657.0 432.4 L656.0 431.6 L655.0 430.9 L654.1 430.1 L653.1 429.4 L652.1 428.6 L651.1 427.9 L650.2 427.1 L649.2 426.4 L648.3 425.6 L647.3 424.8 L646.4 424.1 L645.4 423.3 L644.5 422.6 L643.5 421.8 L642.6 421.1 L641.7 420.3 L640.7 419.6 L639.8 418.8 L638.9 418.0 L638.0 417.3 L637.1 416.5 L636.2 415.8 L635.3 415.0 L634.4 414.3 L633.5 413.5 L632.6 412.7 L631.7 412.0 L630.8 411.2 L629.9 410.5 L629.1 409.7 L628.2 408.9 L627.3 408.2 L626.5 407.4 L625.6 406.7 L624.8 405.9 L623.9 405.1 L623.1 404.4 L622.2 403.6 L621.4 402.9 L620.6 402.1 L619.7 401.3 L618.9 400.6 L618.1 399.8 L617.3 399.1 L616.5 398.3 L615.7 397.5 L614.9 396.8 L614.1 396.0 L613.3 395.2 L612.5 394.5 L611.8 393.7 L611.0 392.9 L610.2 392.2 L609.5 391.4 L608.7 390.6 L607.9 389.9 L607.2 389.1 L606.4 388.4 L605.7 387.6 L605.0 386.8 L604.2 386.1 L603.5 385.3 L602.8 384.5 L602.1 383.8 L601.4 383.0 L600.7 382.2 L600.0 381.5 L599.3 380.7 L598.6 379.9 L597.9 379.2 L597.2 378.4 L596.5 377.6 L595.9 376.9 L595.2 376.1 L594.6 375.3 L593.9 374.6 L593.3 373.8 L592.6 373.0 L592.0 372.3 L591.3 371.5 L590.7 370.7 L590.1 369.9 L589.5 369.2 L588.9 368.4 L588.2 367.6 L587.6 366.9 L587.0 366.1 L586.5 365.3 L585.9 364.6 L585.3 363.8 L584.7 363.0 L584.1 362.3 L583.6 361.5 L583.0 360.7 L582.5 359.9 L581.9 359.2 L581.4 358.4 L580.8 357.6 L580.3 356.9 L579.8 356.1 L579.3 355.3 L578.7 354.6 L578.2 353.8 L577.7 353.0 L577.2 352.2 L576.7 351.5 L576.2 350.7 L575.8 349.9 L575.3 349.2 L574.8 348.4 L574.3 347.6 L573.9 346.9 L573.4 346.1 L573.0 345.3 L572.5 344.5 L572.1 343.8 L571.7 343.0 L571.2 342.2 L570.8 341.5 L570.4 340.7 L570.0 339.9 L569.6 339.1 L569.2 338.4 L568.8 337.6 L568.4 336.8 L568.0 336.1 L567.6 335.3 L567.3 334.5 L566.9 333.7 L566.5 333.0 L566.2 332.2 L565.8 331.4 L565.5 330.7 L565.2 329.9 L564.8 329.1 L564.5 328.3 L564.2 327.6 L563.9 326.8 L563.6 326.0 L563.3 325.3 L563.0 324.5 L562.7 323.7 L562.4 322.9 L562.1 322.2 L561.8 321.4 L561.6 320.6 L561.3 319.9 L561.0 319.1 L560.8 318.3 L560.6 317.5 L560.3 316.8 L560.1 316.0 L559.9 315.2 L559.6 314.5 L559.4 313.7 L559.2 312.9 L559.0 312.1 L558.8 311.4 L558.6 310.6 L558.4 309.8 L558.3 309.1 L558.1 308.3 L557.9 307.5 L557.7 306.7 L557.6 306.0 L557.4 305.2 L557.3 304.4 L557.2 303.7 L557.0 302.9 L556.9 302.1 L556.8 301.3 L556.7 300.6 L556.6 299.8 L556.4 299.0 L556.4 298.3 L556.3 297.5 L556.2 296.7 L556.1 295.9 L556.0 295.2 L556.0 294.4 L555.9 293.6 L555.8 292.9 L555.8 292.1 L555.7 291.3 L555.7 290.5 L555.7 289.8 L555.6 289.0 L555.6 288.2 L555.6 287.5 L555.6 286.7 L555.6 285.9 L555.6 285.2 L555.6 284.4 L555.6 283.6 L555.6 282.8 L555.7 282.1 L555.7 281.3 L555.7 280.5 L555.8 279.8 L555.8 279.0 L555.9 278.2 L555.9 277.5 L556.0 276.7 L556.1 275.9 L556.1 275.1 L556.2 274.4 L556.3 273.6 L556.4 272.8 L556.5 272.1 L556.6 271.3 L556.7 270.5 L556.9 269.8 L557.0 269.0 L557.1 268.2 L557.2 267.5 L557.4 266.7 L557.5 265.9 L557.7 265.2 L557.8 264.4 L558.0 263.6 L558.2 262.9 L558.4 262.1 L558.5 261.3 L558.7 260.6 L558.9 259.8 L559.1 259.0 L559.3 258.3 L559.5 257.5 L559.8 256.7 L560.0 256.0 L560.2 255.2 L560.4 254.4 L560.7 253.7 L560.9 252.9 L561.2 252.1 L561.4 251.4 L561.7 250.6 L562.0 249.8 L562.2 249.1 L562.5 248.3 L562.8 247.5 L563.1 246.8 L563.4 246.0 L563.7 245.2 L564.0 244.5 L564.3 243.7 L564.6 243.0 L564.9 242.2 L565.2 241.4 L565.6 240.7 L565.9 239.9 L566.3 239.1 L566.6 238.4 L567.0 237.6 L567.3 236.9 L567.7 236.1 L568.1 235.3 L568.4 234.6 L568.8 233.8 L569.2 233.1 L569.6 232.3 L570.0 231.5 L570.4 230.8 L570.8 230.0 L571.2 229.3 L571.6 228.5 L572.1 227.7 L572.5 227.0 L572.9 226.2 L573.4 225.5 L573.8 224.7 L574.3 223.9 L574.7 223.2 L575.2 222.4 L575.6 221.7 L576.1 220.9 L576.6 220.2 L577.1 219.4 L577.5 218.7 L578.0 217.9 L578.5 217.1 L579.0 216.4 L579.5 215.6 L580.0 214.9 L580.5 214.1 L581.1 213.4 L581.6 212.6 L582.1 211.9 L582.7 211.1 L583.2 210.4 L583.7 209.6 L584.3 208.9 L584.8 208.1 L585.4 207.4 L586.0 206.6 L586.5 205.9 L587.1 205.1 L587.7 204.4 L588.2 203.6 L588.8 202.9 L589.4 202.1 L590.0 201.4 L590.6 200.6 L591.2 199.9 L591.8 199.1 L592.4 198.4 L593.0 197.6 L593.7 196.9 M825.9 537.5 L826.1 538.2 L826.2 538.8 L826.4 539.5 L826.5 540.1 L826.6 540.8 L826.8 541.4 L826.9 542.1 L827.1 542.7 L827.2 543.4 L827.3 544.0 L827.5 544.6 L827.6 545.3 L827.7 545.9 L827.8 546.5 L828.0 547.1 L828.1 547.7 L828.2 548.3 L828.3 548.9 L828.4 549.5 L828.5 550.1 L828.6 550.7 L828.7 551.3 L828.8 551.9 L828.8 552.5 L828.9 553.0 L829.0 553.6 L829.0 554.2 L829.1 554.7 L829.1 555.3 L829.2 555.8 L829.2 556.3 L829.2 556.9 L829.3 557.4 L829.3 557.9 L829.3 558.4 L829.3 558.9 L829.3 559.4 L829.2 559.9 L829.2 560.4 L829.2 560.8 L829.1 561.3 L829.0 561.7 L829.0 562.2 L828.9 562.6 L828.8 563.1 L828.7 563.5 L828.5 563.9 L828.4 564.3 L828.3 564.7 L828.1 565.0 L827.9 565.4 L827.7 565.8 L827.5 566.1 L827.3 566.4 L827.0 566.8 L826.7 567.1 L826.4 567.4 L826.1 567.6 L825.8 567.9 L825.5 568.2 L825.1 568.4 L824.7 568.7 L824.3 568.9 L823.9 569.1 L823.4 569.3 L822.9 569.5 L822.4 569.6 L821.9 569.8 L821.3 569.9 L820.7 570.0 L820.1 570.1 L819.5 570.2 L818.8 570.3 L818.1 570.4 L817.4 570.4 L816.7 570.5 L815.9 570.5 L815.1 570.5 L814.2 570.5 L813.4 570.4 L812.5 570.4 L811.5 570.3 L810.6 570.3 L809.6 570.2 L808.6 570.1 L807.5 570.0 L806.4 569.8 L805.3 569.7 L804.2 569.5 L803.0 569.4 L801.8 569.2 L800.6 569.0 L799.3 568.8 L798.0 568.5 L796.7 568.3 L795.3 568.0 L793.9 567.8 L792.5 567.5 L791.1 567.2 L789.6 566.9 L788.1 566.6 L786.6 566.2 L785.1 565.9 L783.5 565.6 L781.9 565.2 L780.3 564.8 L778.6 564.4 L776.9 564.0 L775.2 563.6 L773.5 563.2 L771.8 562.8 L770.0 562.4 L768.2 561.9 L766.4 561.5 L764.6 561.0 L762.7 560.6 L760.8 560.1 L758.9 559.6 L757.0 559.1 L755.1 558.6 L753.2 558.1 L751.2 557.6 L749.2 557.1 L747.2 556.6 L745.2 556.0 L743.2 555.5 L741.1 554.9 L739.1 554.4 L737.0 553.8 L734.9 553.3 L732.8 552.7 L730.7 552.1 L728.6 551.6 L726.5 551.0 L724.3 550.4 L722.2 549.8 L720.0 549.2 L717.8 548.6 L715.6 548.0 L713.4 547.4 L711.2 546.8 L709.0 546.2 L706.8 545.5 L704.5 544.9 L702.3 544.3 L700.1 543.6 L697.8 543.0 L695.5 542.4 L693.3 541.7 L691.0 541.1 L688.7 540.4 L686.4 539.8 L684.1 539.1 L681.8 538.4 L679.5 537.8 L677.2 537.1 L674.9 536.5 L672.6 535.8 L670.2 535.1 L667.9 534.4 L665.6 533.8 L663.3 533.1 L660.9 532.4 L658.6 531.7 L656.2 531.0 L653.9 530.3 L651.5 529.6 L649.2 528.9 L646.8 528.2 L644.5 527.5 L642.1 526.9 L639.8 526.1 L637.4 525.4 L635.0 524.7 L632.7 524.0 L630.3 523.3 L628.0 522.6 L625.6 521.9 L623.2 521.2 L620.9 520.5 M1184.2 519.8 L1185.8 519.0 L1187.3 518.3 L1188.9 517.6 L1190.5 516.9 L1192.1 516.2 L1193.7 515.4 L1195.2 514.7 L1196.8 514.0 L1198.4 513.3 L1200.0 512.5 L1201.6 511.8 L1203.1 511.1 L1204.7 510.3 L1206.3 509.6 L1207.8 508.9 L1209.4 508.1 L1211.0 507.4 L1212.5 506.6 L1214.1 505.9 L1215.6 505.2 L1217.2 504.4 L1218.7 503.7 L1220.3 502.9 L1221.8 502.2 L1223.4 501.5 L1224.9 500.7 L1226.5 500.0 L1228.0 499.2 L1229.5 498.5 L1231.0 497.7 L1232.6 497.0 L1234.1 496.2 L1235.6 495.5 L1237.1 494.7 L1238.6 494.0 L1240.1 493.2 L1241.6 492.5 L1243.1 491.7 L1244.6 490.9 L1246.1 490.2 L1247.6 489.4 L1249.1 488.7 L1250.6 487.9 L1252.0 487.2 L1253.5 486.4 L1255.0 485.6 L1256.4 484.9 L1257.9 484.1 L1259.3 483.4 L1260.8 482.6 L1262.2 481.8 L1263.6 481.1 L1265.1 480.3 L1266.5 479.6 L1267.9 478.8 L1269.3 478.0 L1270.8 477.3 L1272.2 476.5 L1273.6 475.7 L1275.0 475.0 L1276.3 474.2 L1277.7 473.4 L1279.1 472.7 L1280.5 471.9 L1281.8 471.1 L1283.2 470.4 L1284.6 469.6 L1285.9 468.8 L1287.3 468.0 L1288.6 467.3 M854.6 518.9 L853.8 518.9 L852.9 518.8 L852.1 518.8 L851.3 518.8 L850.4 518.7 L849.6 518.6 L848.7 518.6 L847.9 518.5 L847.0 518.4 L846.2 518.3 L845.3 518.2 L844.5 518.1 L843.6 518.0 L842.7 517.9 L841.9 517.8 L841.0 517.7 L840.1 517.6 L839.2 517.4 L838.3 517.3 L837.4 517.1 L836.6 517.0 L835.7 516.8 L834.8 516.7 L833.9 516.5 L832.9 516.3 L832.0 516.1 L831.1 515.9 L830.2 515.8 L829.3 515.6 L828.3 515.3 L827.4 515.1 L826.5 514.9 L825.5 514.7 L824.6 514.5 L823.7 514.2 L822.7 514.0 L821.8 513.7 L820.8 513.5 L819.8 513.2 L818.9 513.0 L817.9 512.7 L816.9 512.4 L816.0 512.2 L815.0 511.9 L814.0 511.6 L813.0 511.3 L812.0 511.0 L811.0 510.7 L810.0 510.4 L809.0 510.1 L808.0 509.8 L807.0 509.4 L806.0 509.1 L805.0 508.8 L804.0 508.4 L802.9 508.1 L801.9 507.8 L800.9 507.4 L799.8 507.1 L798.8 506.7 L797.8 506.3 L796.7 506.0 L795.7 505.6 L794.6 505.2 L793.6 504.8 L792.5 504.5 L791.4 504.1 L790.4 503.7 L789.3 503.3 L788.2 502.9 L787.2 502.5 L786.1 502.1 L785.0 501.6 L783.9 501.2 L782.8 500.8 L781.8 500.4 L780.7 499.9 L779.6 499.5 L778.5 499.1 L777.4 498.6 L776.3 498.2 L775.2 497.8 L774.1 497.3 L773.0 496.8 L771.8 496.4 L770.7 495.9 L769.6 495.5 L768.5 495.0 L767.4 494.5 L766.3 494.1 L765.1 493.6 L764.0 493.1 L762.9 492.6 L761.7 492.1 L760.6 491.6 L759.5 491.2 L758.3 490.7 L757.2 490.2 L756.1 489.7 L754.9 489.2 L753.8 488.7 L752.6 488.1 L751.5 487.6 L750.3 487.1 L749.2 486.6 L748.0 486.1 L746.9 485.6 L745.7 485.0 L744.6 484.5 L743.4 484.0 L742.2 483.5 L741.1 482.9 L739.9 482.4 L738.7 481.8 L737.6 481.3 L736.4 480.8 L735.3 480.2 L734.1 479.7 L732.9 479.1 L731.8 478.6 L730.6 478.0 L729.4 477.4 L728.2 476.9 L727.1 476.3 L725.9 475.8 L724.7 475.2 L723.6 474.6 L722.4 474.1 L721.2 473.5 L720.0 472.9 L718.9 472.3 L717.7 471.8 L716.5 471.2 L715.3 470.6 L714.2 470.0 L713.0 469.4 L711.8 468.9 L710.7 468.3 L709.5 467.7 L708.3 467.1 L707.1 466.5 L706.0 465.9 L704.8 465.3 L703.6 464.7 L702.4 464.1 L701.3 463.5 L700.1 462.9 L698.9 462.3 L697.8 461.7 L696.6 461.1 L695.4 460.5 L694.2 459.9 L693.1 459.3 L691.9 458.6 L690.7 458.0 L689.6 457.4 L688.4 456.8 L687.3 456.2 L686.1 455.6 L684.9 454.9 L683.8 454.3 L682.6 453.7 L681.5 453.1 L680.3 452.4 L679.1 451.8 L678.0 451.2 L676.8 450.6 L675.7 449.9 L674.5 449.3 L673.4 448.7 L672.2 448.0 L671.1 447.4 L669.9 446.8 L668.8 446.1 L667.7 445.5 L666.5 444.8 L665.4 444.2 L664.2 443.6 L663.1 442.9 L662.0 442.3 L660.8 441.6 L659.7 441.0 L658.6 440.3 L657.5 439.7 L656.3 439.0 L655.2 438.4 L654.1 437.7 L653.0 437.1 L651.9 436.4 L650.8 435.8 L649.7 435.1 L648.5 434.5 L647.4 433.8 L646.3 433.1 L645.2 432.5 L644.1 431.8 L643.0 431.2 L641.9 430.5 L640.9 429.8 L639.8 429.2 L638.7 428.5 L637.6 427.9 L636.5 427.2 L635.4 426.5 L634.4 425.9 L633.3 425.2 L632.2 424.5 L631.2 423.9 L630.1 423.2 L629.0 422.5 L628.0 421.8 L626.9 421.2 L625.9 420.5 L624.8 419.8 L623.8 419.2 L622.7 418.5 L621.7 417.8 L620.6 417.1 L619.6 416.5 L618.6 415.8 L617.6 415.1 L616.5 414.4 L615.5 413.7 L614.5 413.1 L613.5 412.4 L612.5 411.7 L611.5 411.0 L610.5 410.3 L609.5 409.7 L608.5 409.0 L607.5 408.3 L606.5 407.6 L605.5 406.9 L604.5 406.2 L603.5 405.6 L602.5 404.9 L601.6 404.2 L600.6 403.5 L599.6 402.8 L598.7 402.1 L597.7 401.4 L596.8 400.8 L595.8 400.1 L594.9 399.4 L593.9 398.7 L593.0 398.0 L592.0 397.3 L591.1 396.6 L590.2 395.9 L589.3 395.2 L588.3 394.5 L587.4 393.8 L586.5 393.1 L585.6 392.5 L584.7 391.8 L583.8 391.1 L582.9 390.4 L582.0 389.7 L581.1 389.0 L580.3 388.3 L579.4 387.6 L578.5 386.9 L577.6 386.2 L576.8 385.5 L575.9 384.8 L575.1 384.1 L574.2 383.4 L573.4 382.7 L572.5 382.0 L571.7 381.3 L570.8 380.6 L570.0 379.9 L569.2 379.2 L568.4 378.5 L567.5 377.8 L566.7 377.1 L565.9 376.4 L565.1 375.7 L564.3 375.0 L563.5 374.3 L562.7 373.6 L562.0 372.9 L561.2 372.2 L560.4 371.5 L559.6 370.8 L558.9 370.1 L558.1 369.4 L557.3 368.7 L556.6 368.0 L555.8 367.3 L555.1 366.5 L554.4 365.8 L553.6 365.1 L552.9 364.4 L552.2 363.7 L551.5 363.0 L550.8 362.3 L550.1 361.6 L549.3 360.9 L548.7 360.2 L548.0 359.5 L547.3 358.8 L546.6 358.1 L545.9 357.4 L545.2 356.7 L544.6 355.9 L543.9 355.2 L543.3 354.5 L542.6 353.8 L542.0 353.1 L541.3 352.4 L540.7 351.7 L540.0 351.0 L539.4 350.3 L538.8 349.6 L538.2 348.9 L537.6 348.1 L537.0 347.4 L536.4 346.7 L535.8 346.0 L535.2 345.3 L534.6 344.6 L534.0 343.9 L533.4 343.2 L532.9 342.5 L532.3 341.8 L531.7 341.0 L531.2 340.3 L530.6 339.6 L530.1 338.9 L529.6 338.2 L529.0 337.5 L528.5 336.8 L528.0 336.1 L527.5 335.4 L527.0 334.6 L526.5 333.9 L526.0 333.2 L525.5 332.5 L525.0 331.8 L524.5 331.1 L524.0 330.4 L523.6 329.7 L523.1 328.9 L522.6 328.2 L522.2 327.5 L521.7 326.8 L521.3 326.1 L520.8 325.4 L520.4 324.7 L520.0 324.0 L519.6 323.2 L519.1 322.5 L518.7 321.8 L518.3 321.1 L517.9 320.4 L517.5 319.7 L517.1 319.0 L516.8 318.3 L516.4 317.5 L516.0 316.8 L515.6 316.1 L515.3 315.4 L514.9 314.7 L514.6 314.0 L514.2 313.3 L513.9 312.6 L513.6 311.8 L513.2 311.1 L512.9 310.4 L512.6 309.7 L512.3 309.0 L512.0 308.3 L511.7 307.6 L511.4 306.9 L511.1 306.2 L510.8 305.4 L510.6 304.7 L510.3 304.0 L510.0 303.3 L509.8 302.6 L509.5 301.9 L509.3 301.2 L509.0 300.5 L508.8 299.8 L508.6 299.0 L508.3 298.3 L508.1 297.6 L507.9 296.9 L507.7 296.2 L507.5 295.5 L507.3 294.8 L507.1 294.1 L506.9 293.4 L506.7 292.6 L506.6 291.9 L506.4 291.2 L506.2 290.5 L506.1 289.8 L505.9 289.1 L505.8 288.4 L505.6 287.7 L505.5 287.0 L505.4 286.3 L505.3 285.6 L505.1 284.8 L505.0 284.1 L504.9 283.4 L504.8 282.7 L504.7 282.0 L504.6 281.3 L504.6 280.6 L504.5 279.9 L504.4 279.2 L504.3 278.5 L504.3 277.8 L504.2 277.1 L504.2 276.4 L504.1 275.7 L504.1 274.9 L504.1 274.2 L504.0 273.5 L504.0 272.8 L504.0 272.1 L504.0 271.4 L504.0 270.7 L504.0 270.0 L504.0 269.3 L504.0 268.6 L504.0 267.9 L504.0 267.2 L504.1 266.5 L504.1 265.8 L504.1 265.1 L504.2 264.4 L504.2 263.7 L504.3 263.0 L504.3 262.3 L504.4 261.6 L504.5 260.9 L504.6 260.2 L504.6 259.5 L504.7 258.8 L504.8 258.1 L504.9 257.4 L505.0 256.7 L505.1 256.0 L505.2 255.3 L505.4 254.6 L505.5 253.9 L505.6 253.2 L505.7 252.5 L505.9 251.8 L506.0 251.1 L506.2 250.4 L506.3 249.7 L506.5 249.0 L506.7 248.3 L506.8 247.6 L507.0 246.9 L507.2 246.3 L507.4 245.6 L507.6 244.9 L507.8 244.2 L508.0 243.5 L508.2 242.8 L508.4 242.1 L508.6 241.4 L508.8 240.7 L509.0 240.0 L509.3 239.3 L509.5 238.7 L509.7 238.0 L510.0 237.3 L510.2 236.6 L510.5 235.9 L510.8 235.2 L511.0 234.5 L511.3 233.9 L511.6 233.2 L511.8 232.5 L512.1 231.8 L512.4 231.1 L512.7 230.4 L513.0 229.8 L513.3 229.1 L513.6 228.4 L513.9 227.7 L514.2 227.0 L514.5 226.4 L514.9 225.7 L515.2 225.0 L515.5 224.3 L515.9 223.7 L516.2 223.0 L516.6 222.3 L516.9 221.6 L517.3 221.0 L517.6 220.3 L518.0 219.6 L518.3 218.9 L518.7 218.3 L519.1 217.6 L519.5 216.9 L519.9 216.3 L520.2 215.6 L520.6 214.9 L521.0 214.3 L521.4 213.6 L521.8 212.9 L522.2 212.3 L522.6 211.6 L523.1 210.9 L523.5 210.3 L523.9 209.6 L524.3 209.0 L524.7 208.3 L525.2 207.6 L525.6 207.0 L526.0 206.3 L526.5 205.7 L526.9 205.0 L527.4 204.4 L527.8 203.7 L528.3 203.0 L528.7 202.4 L529.2 201.7 L529.7 201.1 L530.1 200.4 L530.6 199.8 L531.1 199.2 L531.6 198.5 L532.0 197.9 L532.5 197.2 L533.0 196.6 M858.5 536.8 L858.6 537.6 L858.7 538.3 L858.8 539.1 L858.9 539.8 L858.9 540.6 L859.0 541.3 L859.1 542.0 L859.2 542.8 L859.3 543.5 L859.4 544.3 L859.5 545.0 L859.5 545.7 L859.6 546.5 L859.7 547.2 L859.8 547.9 L859.9 548.7 L860.0 549.4 L860.1 550.1 L860.1 550.8 L860.2 551.6 L860.3 552.3 L860.4 553.0 L860.5 553.7 L860.5 554.4 L860.6 555.1 L860.7 555.8 L860.8 556.6 L860.8 557.3 L860.9 558.0 L861.0 558.6 L861.1 559.3 L861.1 560.0 L861.2 560.7 L861.2 561.4 L861.3 562.1 L861.4 562.7 L861.4 563.4 L861.5 564.1 L861.5 564.7 L861.6 565.4 L861.6 566.0 L861.6 566.7 L861.7 567.3 L861.7 568.0 L861.7 568.6 L861.8 569.2 L861.8 569.8 L861.8 570.4 L861.8 571.1 L861.8 571.7 L861.8 572.2 L861.8 572.8 L861.7 573.4 L861.7 574.0 L861.7 574.5 L861.6 575.1 L861.6 575.6 L861.5 576.1 L861.4 576.7 L861.4 577.2 L861.3 577.7 L861.2 578.2 L861.0 578.6 L860.9 579.1 L860.7 579.5 L860.6 580.0 L860.4 580.4 L860.2 580.8 L860.0 581.2 L859.7 581.6 L859.5 581.9 L859.2 582.3 L858.9 582.6 L858.5 582.9 L858.2 583.2 L857.8 583.5 L857.4 583.7 L856.9 583.9 L856.5 584.1 L855.9 584.3 L855.4 584.5 L854.8 584.6 L854.2 584.8 L853.6 584.9 L852.9 585.0 L852.2 585.0 L851.4 585.0 L850.6 585.0 L849.8 585.0 L848.9 585.0 L848.0 584.9 L847.0 584.9 L846.0 584.8 L845.0 584.6 L843.9 584.5 L842.7 584.3 L841.6 584.1 L840.4 583.9 L839.1 583.7 L837.8 583.4 L836.4 583.1 L835.1 582.8 L833.6 582.5 L832.2 582.2 L830.7 581.9 L829.2 581.5 L827.6 581.1 L826.0 580.7 L824.3 580.3 L822.7 579.9 L821.0 579.5 L819.2 579.0 L817.5 578.5 L815.7 578.1 L813.9 577.6 L812.0 577.1 L810.1 576.6 L808.2 576.0 L806.3 575.5 L804.4 575.0 L802.4 574.4 L800.4 573.9 L798.4 573.3 L796.4 572.7 L794.3 572.1 L792.2 571.5 L790.2 570.9 L788.1 570.3 L785.9 569.7 L783.8 569.1 L781.7 568.5 L779.5 567.9 L777.3 567.2 L775.1 566.6 L772.9 565.9 L770.7 565.3 L768.5 564.6 L766.3 564.0 L764.0 563.3 L761.8 562.6 L759.5 561.9 L757.3 561.3 L755.0 560.6 L752.7 559.9 L750.4 559.2 L748.1 558.5 L745.8 557.8 L743.5 557.1 L741.2 556.4 L738.8 555.7 L736.5 555.0 L734.2 554.3 L731.8 553.6 L729.5 552.9 L727.2 552.2 L724.8 551.4 L722.4 550.7 L720.1 550.0 L717.7 549.3 L715.4 548.5 L713.0 547.8 L710.6 547.1 L708.3 546.3 L705.9 545.6 L703.5 544.9 L701.1 544.1 L698.8 543.4 L696.4 542.7 L694.0 541.9 L691.6 541.2 L689.3 540.4 L686.9 539.7 L684.5 538.9 L682.1 538.2 L679.7 537.4 L677.4 536.7 L675.0 535.9 L672.6 535.2 L670.2 534.4 L667.9 533.6 L665.5 532.9 L663.1 532.1 L660.7 531.4 L658.4 530.6 L656.0 529.8 L653.6 529.1 L651.2 528.3 L648.9 527.5 L646.5 526.8 L644.2 526.0 L641.8 525.2 L639.4 524.5 L637.1 523.7 L634.7 522.9 L632.4 522.2 L630.0 521.4 L627.7 520.6 L625.4 519.9 L623.0 519.1 L620.7 518.3 L618.3 517.5 L616.0 516.8 L613.7 516.0 L611.4 515.2 L609.1 514.4 L606.7 513.7 L604.4 512.9 L602.1 512.1 L599.8 511.3 L597.5 510.5 L595.2 509.8 L592.9 509.0 L590.6 508.2 L588.4 507.4 L586.1 506.6 L583.8 505.9 L581.5 505.1 L579.3 504.3 L577.0 503.5 L574.8 502.7 L572.5 501.9 L570.3 501.1 L568.0 500.4 L565.8 499.6 L563.5 498.8 L561.3 498.0 L559.1 497.2 M1246.2 496.4 L1248.0 495.6 L1249.8 494.9 L1251.6 494.1 L1253.3 493.3 L1255.1 492.5 L1256.9 491.7 L1258.6 490.9 L1260.4 490.1 L1262.1 489.3 L1263.8 488.5 L1265.6 487.8 L1267.3 487.0 L1269.0 486.2 L1270.7 485.4 L1272.4 484.6 L1274.1 483.8 L1275.8 483.0 L1277.5 482.2 L1279.2 481.4 L1280.9 480.6 L1282.5 479.8 L1284.2 479.1 L1285.8 478.3 L1287.5 477.5 L1289.1 476.7 L1290.8 475.9 L1292.4 475.1 L1294.0 474.3 L1295.6 473.5 L1297.3 472.7 L1298.9 471.9 L1300.5 471.1 L1302.0 470.3 L1303.6 469.5 L1305.2 468.7 L1306.8 467.9 L1308.3 467.1 L1309.9 466.3 L1311.4 465.5 L1313.0 464.7 L1314.5 464.0 L1316.0 463.2 L1317.6 462.4 L1319.1 461.6 L1320.6 460.8 L1322.1 460.0 L1323.6 459.2 L1325.0 458.4 L1326.5 457.6 L1328.0 456.8 L1329.4 456.0 L1330.9 455.2 L1332.3 454.4 L1333.8 453.6 L1335.2 452.8 L1336.6 452.0 L1338.1 451.2 L1339.5 450.4 L1340.9 449.6 L1342.2 448.8 L1343.6 448.0 L1345.0 447.2 L1346.4 446.4 L1347.7 445.6 L1349.1 444.8 L1350.4 444.0 L1351.8 443.2 L1353.1 442.4 L1354.4 441.6 L1355.7 440.8 L1357.0 440.0 L1358.3 439.2 L1359.6 438.4 L1360.9 437.6 L1362.2 436.8 L1363.4 436.0 L1364.7 435.2 L1365.9 434.4 L1367.2 433.6 L1368.4 432.8 L1369.6 432.0 L1370.8 431.2 L1372.0 430.4 L1373.2 429.6 L1374.4 428.8 L1375.6 428.0 L1376.8 427.2 L1377.9 426.4 L1379.1 425.6 L1380.2 424.8 L1381.3 424.0 L1382.5 423.2 L1383.6 422.4 L1384.7 421.6 L1385.8 420.8 L1386.9 420.0 L1388.0 419.2 L1389.0 418.4 L1390.1 417.6 L1391.2 416.8 L1392.2 416.0 L1393.2 415.2 L1394.3 414.4 L1395.3 413.6 L1396.3 412.8 L1397.3 412.0 L1398.3 411.1 L1399.3 410.3 L1400.2 409.5 L1401.2 408.7 L1402.2 407.9 L1403.1 407.1 L1404.1 406.3 L1405.0 405.5 L1405.9 404.7 L1406.8 403.9 L1407.7 403.1 L1408.6 402.3 L1409.5 401.5 L1410.4 400.7 L1411.2 399.9 L1412.1 399.1 L1412.9 398.3 L1413.7 397.5 L1414.6 396.7 L1415.4 395.9 L1416.2 395.1 L1417.0 394.3 L1417.8 393.5 L1418.6 392.7 L1419.3 391.9 L1420.1 391.1 L1420.8 390.3 L1421.6 389.5 L1422.3 388.7 L1423.0 387.8 L1423.7 387.0 L1424.4 386.2 L1425.1 385.4 L1425.8 384.6 L1426.5 383.8 L1427.1 383.0 L1427.8 382.2 L1428.4 381.4 L1429.1 380.6 L1429.7 379.8 L1430.3 379.0 L1430.9 378.2 L1431.5 377.4 L1432.1 376.6 L1432.7 375.8 L1433.2 375.0 L1433.8 374.2 L1434.3 373.4 L1434.9 372.6 L1435.4 371.8 L1435.9 371.0 L1436.4 370.2 L1436.9 369.3 L1437.4 368.5 L1437.9 367.7 L1438.3 366.9 L1438.8 366.1 L1439.2 365.3 L1439.7 364.5 L1440.1 363.7 L1440.5 362.9 L1440.9 362.1 L1441.3 361.3 L1441.7 360.5 L1442.1 359.7 L1442.5 358.9 L1442.8 358.1 L1443.2 357.3 L1443.5 356.5 L1443.8 355.7 L1444.1 354.9 L1444.4 354.1 L1444.7 353.2 L1445.0 352.4 L1445.3 351.6 L1445.6 350.8 L1445.8 350.0 L1446.1 349.2 L1446.3 348.4 L1446.5 347.6 L1446.7 346.8 L1446.9 346.0 L1447.1 345.2 L1447.3 344.4 L1447.5 343.6 L1447.7 342.8 L1447.8 342.0 L1448.0 341.2 L1448.1 340.4 L1448.2 339.6 L1448.3 338.8 L1448.4 337.9 L1448.5 337.1 M852.3 551.5 L851.4 551.3 L850.4 551.1 L849.5 550.9 L848.5 550.7 L847.5 550.4 L846.5 550.2 L845.6 550.0 L844.6 549.7 L843.6 549.4 L842.6 549.2 L841.6 548.9 L840.5 548.6 L839.5 548.3 L838.5 548.0 L837.4 547.7 L836.4 547.3 L835.3 547.0 L834.2 546.7 L833.2 546.3 L832.1 546.0 L831.0 545.6 L829.9 545.2 L828.8 544.8 L827.7 544.5 L826.6 544.1 L825.4 543.7 L824.3 543.3 L823.2 542.8 L822.0 542.4 L820.9 542.0 L819.7 541.6 L818.6 541.1 L817.4 540.7 L816.2 540.2 L815.0 539.8 L813.9 539.3 L812.7 538.8 L811.5 538.4 L810.3 537.9 L809.1 537.4 L807.8 536.9 L806.6 536.4 L805.4 535.9 L804.2 535.4 L802.9 534.9 L801.7 534.4 L800.4 533.9 L799.2 533.3 L797.9 532.8 L796.7 532.3 L795.4 531.7 L794.2 531.2 L792.9 530.6 L791.6 530.1 L790.3 529.5 L789.0 529.0 L787.8 528.4 L786.5 527.9 L785.2 527.3 L783.9 526.7 L782.6 526.1 L781.3 525.6 L780.0 525.0 L778.6 524.4 L777.3 523.8 L776.0 523.2 L774.7 522.6 L773.4 522.0 L772.1 521.4 L770.7 520.8 L769.4 520.2 L768.1 519.6 L766.7 519.0 L765.4 518.3 L764.1 517.7 L762.7 517.1 L761.4 516.5 L760.0 515.8 L758.7 515.2 L757.3 514.6 L756.0 513.9 L754.6 513.3 L753.3 512.7 L751.9 512.0 L750.6 511.4 L749.2 510.7 L747.9 510.1 L746.5 509.4 L745.2 508.8 L743.8 508.1 L742.5 507.5 L741.1 506.8 L739.7 506.2 L738.4 505.5 L737.0 504.8 L735.7 504.2 L734.3 503.5 L732.9 502.8 L731.6 502.2 L730.2 501.5 L728.9 500.8 L727.5 500.1 L726.1 499.5 L724.8 498.8 L723.4 498.1 L722.0 497.4 L720.7 496.7 L719.3 496.0 L718.0 495.4 L716.6 494.7 L715.3 494.0 L713.9 493.3 L712.5 492.6 L711.2 491.9 L709.8 491.2 L708.5 490.5 L707.1 489.8 L705.8 489.1 L704.4 488.4 L703.1 487.7 L701.7 487.0 L700.4 486.3 L699.0 485.6 L697.7 484.9 L696.4 484.2 L695.0 483.5 L693.7 482.8 L692.3 482.1 L691.0 481.4 L689.7 480.7 L688.3 479.9 L687.0 479.2 L685.7 478.5 L684.4 477.8 L683.0 477.1 L681.7 476.4 L680.4 475.6 L679.1 474.9 L677.8 474.2 L676.4 473.5 L675.1 472.8 L673.8 472.0 L672.5 471.3 L671.2 470.6 L669.9 469.9 L668.6 469.1 L667.3 468.4 L666.0 467.7 L664.7 467.0 L663.4 466.2 L662.2 465.5 L660.9 464.8 L659.6 464.1 L658.3 463.3 L657.0 462.6 L655.8 461.9 L654.5 461.1 L653.2 460.4 L652.0 459.7 L650.7 458.9 L649.5 458.2 L648.2 457.4 L647.0 456.7 L645.7 456.0 L644.5 455.2 L643.2 454.5 L642.0 453.8 L640.8 453.0 L639.5 452.3 L638.3 451.5 L637.1 450.8 L635.9 450.1 L634.6 449.3 L633.4 448.6 L632.2 447.8 L631.0 447.1 L629.8 446.3 L628.6 445.6 L627.4 444.9 L626.2 444.1 L625.1 443.4 L623.9 442.6 L622.7 441.9 L621.5 441.1 L620.4 440.4 L619.2 439.6 L618.0 438.9 L616.9 438.1 L615.7 437.4 L614.6 436.6 L613.4 435.9 L612.3 435.1 L611.1 434.4 L610.0 433.6 L608.9 432.9 L607.8 432.1 L606.6 431.4 L605.5 430.6 L604.4 429.9 L603.3 429.1 L602.2 428.4 L601.1 427.6 L600.0 426.9 L598.9 426.1 L597.8 425.3 L596.8 424.6 L595.7 423.8 L594.6 423.1 L593.6 422.3 L592.5 421.6 L591.4 420.8 L590.4 420.0 L589.4 419.3 L588.3 418.5 L587.3 417.8 L586.2 417.0 L585.2 416.3 L584.2 415.5 L583.2 414.7 L582.2 414.0 L581.2 413.2 L580.2 412.5 L579.2 411.7 L578.2 410.9 L577.2 410.2 L576.2 409.4 L575.2 408.7 L574.3 407.9 L573.3 407.1 L572.3 406.4 L571.4 405.6 L570.4 404.8 L569.5 404.1 L568.6 403.3 L567.6 402.6 L566.7 401.8 L565.8 401.0 L564.9 400.3 L564.0 399.5 L563.1 398.7 L562.2 398.0 L561.3 397.2 L560.4 396.5 L559.5 395.7 L558.6 394.9 L557.7 394.2 L556.9 393.4 L556.0 392.6 L555.2 391.9 L554.3 391.1 L553.5 390.3 L552.6 389.6 L551.8 388.8 L551.0 388.0 L550.1 387.3 L549.3 386.5 L548.5 385.7 L547.7 385.0 L546.9 384.2 L546.1 383.4 L545.3 382.7 L544.6 381.9 L543.8 381.1 L543.0 380.4 L542.3 379.6 L541.5 378.8 L540.8 378.1 L540.0 377.3 L539.3 376.5 L538.5 375.8 L537.8 375.0 L537.1 374.2 L536.4 373.4 L535.7 372.7 L535.0 371.9 L534.3 371.1 L533.6 370.4 L532.9 369.6 L532.2 368.8 L531.6 368.1 L530.9 367.3 L530.3 366.5 L529.6 365.8 L529.0 365.0 L528.3 364.2 L527.7 363.4 L527.1 362.7 L526.4 361.9 L525.8 361.1 L525.2 360.4 L524.6 359.6 L524.0 358.8 L523.4 358.0 L522.9 357.3 L522.3 356.5 L521.7 355.7 L521.1 355.0 L520.6 354.2 L520.0 353.4 L519.5 352.7 L519.0 351.9 L518.4 351.1 L517.9 350.3 L517.4 349.6 L516.9 348.8 L516.4 348.0 L515.9 347.2 L515.4 346.5 L514.9 345.7 L514.4 344.9 L514.0 344.2 L513.5 343.4 L513.0 342.6 L512.6 341.8 L512.1 341.1 L511.7 340.3 L511.3 339.5 L510.9 338.8 L510.4 338.0 L510.0 337.2 L509.6 336.4 L509.2 335.7 L508.8 334.9 L508.4 334.1 L508.1 333.4 L507.7 332.6 L507.3 331.8 L507.0 331.0 L506.6 330.3 L506.3 329.5 L506.0 328.7 L505.6 327.9 L505.3 327.2 L505.0 326.4 L504.7 325.6 L504.4 324.9 L504.1 324.1 L503.8 323.3 L503.5 322.5 L503.2 321.8 L503.0 321.0 L502.7 320.2 L502.4 319.4 L502.2 318.7 L501.9 317.9 L501.7 317.1 L501.5 316.4 L501.3 315.6 L501.1 314.8 L500.8 314.0 L500.6 313.3 L500.4 312.5 L500.3 311.7 L500.1 310.9 L499.9 310.2 L499.7 309.4 L499.6 308.6 L499.4 307.9 L499.3 307.1 L499.1 306.3 L499.0 305.5 L498.9 304.8 L498.8 304.0 L498.7 303.2 L498.6 302.5 L498.5 301.7 L498.4 300.9 L498.3 300.1 L498.2 299.4 L498.1 298.6 L498.1 297.8 L498.0 297.0 L498.0 296.3 L497.9 295.5 L497.9 294.7 L497.9 294.0 L497.8 293.2 L497.8 292.4 L497.8 291.6 L497.8 290.9 L497.8 290.1 L497.8 289.3 L497.9 288.6 L497.9 287.8 L497.9 287.0 L498.0 286.2 L498.0 285.5 L498.1 284.7 L498.1 283.9 L498.2 283.2 L498.3 282.4 L498.3 281.6 L498.4 280.8 L498.5 280.1 L498.6 279.3 L498.7 278.5 L498.9 277.8 L499.0 277.0 L499.1 276.2 L499.2 275.5 L499.4 274.7 L499.5 273.9 L499.7 273.1 L499.9 272.4 L500.0 271.6 L500.2 270.8 L500.4 270.1 L500.6 269.3 L500.8 268.5 L501.0 267.8 L501.2 267.0 L501.4 266.2 L501.6 265.5 L501.9 264.7 L502.1 263.9 L502.3 263.1 L502.6 262.4 L502.8 261.6 L503.1 260.8 L503.4 260.1 L503.6 259.3 L503.9 258.5 L504.2 257.8 L504.5 257.0 L504.8 256.2 L505.1 255.5 L505.4 254.7 L505.8 253.9 L506.1 253.2 L506.4 252.4 L506.8 251.6 L507.1 250.9 L507.5 250.1 L507.8 249.3 L508.2 248.6 L508.6 247.8 L509.0 247.0 L509.4 246.3 L509.8 245.5 L510.2 244.8 L510.6 244.0 L511.0 243.2 L511.4 242.5 L511.8 241.7 L512.3 240.9 L512.7 240.2 L513.1 239.4 L513.6 238.6 L514.1 237.9 L514.5 237.1 L515.0 236.4 L515.5 235.6 L515.9 234.8 L516.4 234.1 L516.9 233.3 L517.4 232.5 L517.9 231.8 L518.5 231.0 L519.0 230.3 L519.5 229.5 L520.0 228.7 L520.6 228.0 L521.1 227.2 L521.7 226.5 L522.2 225.7 L522.8 224.9 L523.3 224.2 L523.9 223.4 L524.5 222.7 L525.1 221.9 L525.7 221.1 L526.3 220.4 L526.9 219.6 L527.5 218.9 L528.1 218.1 L528.7 217.4 L529.3 216.6 L530.0 215.9 L530.6 215.1 L531.3 214.3 L531.9 213.6 L532.6 212.8 L533.2 212.1 L533.9 211.3 L534.6 210.6 L535.2 209.8 L535.9 209.1 L536.6 208.3 L537.3 207.6 L538.0 206.8 L538.7 206.1 L539.4 205.3 L540.1 204.6 L540.8 203.8 L541.6 203.1 L542.3 202.3 L543.0 201.6 L543.8 200.8 L544.5 200.1 L545.3 199.3 L546.0 198.6 L546.8 197.8 L547.6 197.1 M890.4 550.8 L889.6 550.4 L888.8 550.0 L888.1 549.6 L887.3 549.1 L886.5 548.7 L885.7 548.3 L884.9 547.8 L884.1 547.4 L883.3 546.9 L882.5 546.5 L881.7 546.0 L880.9 545.5 L880.1 545.0 L879.3 544.5 L878.5 544.0 L877.7 543.5 L876.9 543.0 L876.1 542.5 L875.3 542.0 L874.5 541.5 L873.7 541.0 L872.9 540.4 L872.1 539.9 L871.2 539.3 L870.4 538.8 L869.6 538.3 L868.8 537.7 L868.0 537.1 L867.1 536.6 L866.3 536.0 L865.5 535.4 L864.6 534.9 L863.8 534.3 L863.0 533.7 L862.2 533.1 L861.3 532.5 L860.5 531.9 L859.6 531.3 L858.8 530.7 L858.0 530.1 L857.1 529.5 L856.3 528.9 L855.4 528.3 L854.6 527.6 L853.8 527.0 L852.9 526.4 L852.1 525.8 L851.2 525.1 L850.4 524.5 L849.5 523.9 L848.7 523.2 L847.8 522.6 L847.0 522.0 L846.1 521.3 L845.3 520.7 L844.4 520.0 L843.6 519.4 L842.7 518.7 L841.9 518.0 L841.0 517.4 L840.1 516.7 L839.3 516.1 L838.4 515.4 L837.6 514.7 L836.7 514.1 L835.9 513.4 L835.0 512.7 L834.1 512.0 L833.3 511.4 L832.4 510.7 L831.6 510.0 L830.7 509.3 L829.8 508.6 L829.0 507.9 L828.1 507.2 L827.3 506.6 L826.4 505.9 L825.5 505.2 L824.7 504.5 L823.8 503.8 L823.0 503.1 L822.1 502.4 L821.3 501.7 L820.4 501.0 L819.5 500.3 L818.7 499.6 L817.8 498.9 L817.0 498.2 L816.1 497.5 L815.3 496.8 L814.4 496.0 L813.6 495.3 L812.7 494.6 L811.8 493.9 L811.0 493.2 L810.1 492.5 L809.3 491.8 L808.4 491.0 L807.6 490.3 L806.7 489.6 L805.9 488.9 L805.0 488.2 L804.2 487.4 L803.3 486.7 L802.5 486.0 L801.7 485.3 L800.8 484.5 L800.0 483.8 L799.1 483.1 L798.3 482.4 L797.5 481.6 L796.6 480.9 L795.8 480.2 L794.9 479.4 L794.1 478.7 L793.3 478.0 L792.4 477.2 L791.6 476.5 L790.8 475.8 L789.9 475.0 L789.1 474.3 L788.3 473.5 L787.5 472.8 L786.6 472.1 L785.8 471.3 L785.0 470.6 L784.2 469.8 L783.4 469.1 L782.5 468.4 L781.7 467.6 L780.9 466.9 L780.1 466.1 L779.3 465.4 L778.5 464.6 L777.7 463.9 L776.9 463.1 L776.1 462.4 L775.3 461.6 L774.5 460.9 L773.7 460.2 L772.9 459.4 L772.1 458.7 L771.3 457.9 L770.5 457.2 L769.7 456.4 L768.9 455.6 L768.1 454.9 L767.3 454.1 L766.6 453.4 L765.8 452.6 L765.0 451.9 L764.2 451.1 L763.4 450.4 L762.7 449.6 L761.9 448.9 L761.1 448.1 L760.4 447.3 L759.6 446.6 L758.8 445.8 L758.1 445.1 L757.3 444.3 L756.6 443.6 L755.8 442.8 L755.1 442.0 L754.3 441.3 L753.6 440.5 L752.8 439.8 L752.1 439.0 L751.3 438.2 L750.6 437.5 L749.9 436.7 L749.1 436.0 L748.4 435.2 L747.7 434.4 L746.9 433.7 L746.2 432.9 L745.5 432.1 L744.8 431.4 L744.1 430.6 L743.3 429.8 L742.6 429.1 L741.9 428.3 L741.2 427.6 L740.5 426.8 L739.8 426.0 L739.1 425.3 L738.4 424.5 L737.7 423.7 L737.0 423.0 L736.3 422.2 L735.7 421.4 L735.0 420.7 L734.3 419.9 L733.6 419.1 L732.9 418.3 L732.3 417.6 L731.6 416.8 L730.9 416.0 L730.3 415.3 L729.6 414.5 L728.9 413.7 L728.3 413.0 L727.6 412.2 L727.0 411.4 L726.3 410.7 L725.7 409.9 L725.1 409.1 L724.4 408.3 L723.8 407.6 L723.2 406.8 L722.5 406.0 L721.9 405.3 L721.3 404.5 L720.7 403.7 L720.0 402.9 L719.4 402.2 L718.8 401.4 L718.2 400.6 L717.6 399.8 L717.0 399.1 L716.4 398.3 L715.8 397.5 L715.2 396.8 L714.6 396.0 L714.0 395.2 L713.4 394.4 L712.9 393.7 L712.3 392.9 L711.7 392.1 L711.1 391.3 L710.6 390.6 L710.0 389.8 L709.4 389.0 L708.9 388.2 L708.3 387.5 L707.8 386.7 L707.2 385.9 L706.7 385.1 L706.2 384.4 L705.6 383.6 L705.1 382.8 L704.5 382.0 L704.0 381.3 L703.5 380.5 L703.0 379.7 L702.5 378.9 L701.9 378.1 L701.4 377.4 L700.9 376.6 L700.4 375.8 L699.9 375.0 L699.4 374.3 L698.9 373.5 L698.4 372.7 L698.0 371.9 L697.5 371.2 L697.0 370.4 L696.5 369.6 L696.0 368.8 L695.6 368.0 L695.1 367.3 L694.6 366.5 L694.2 365.7 L693.7 364.9 L693.3 364.2 L692.8 363.4 L692.4 362.6 L691.9 361.8 L691.5 361.0 L691.1 360.3 L690.6 359.5 L690.2 358.7 L689.8 357.9 L689.4 357.1 L689.0 356.4 L688.6 355.6 L688.1 354.8 L687.7 354.0 L687.3 353.2 L686.9 352.5 L686.6 351.7 L686.2 350.9 L685.8 350.1 L685.4 349.4 L685.0 348.6 L684.6 347.8 L684.3 347.0 L683.9 346.2 L683.5 345.5 L683.2 344.7 L682.8 343.9 L682.5 343.1 L682.1 342.3 L681.8 341.6 L681.5 340.8 L681.1 340.0 L680.8 339.2 L680.5 338.4 L680.1 337.7 L679.8 336.9 L679.5 336.1 L679.2 335.3 L678.9 334.5 L678.6 333.8 L678.3 333.0 L678.0 332.2 L677.7 331.4 L677.4 330.6 L677.1 329.9 L676.8 329.1 L676.5 328.3 L676.3 327.5 L676.0 326.7 L675.7 326.0 L675.5 325.2 L675.2 324.4 L675.0 323.6 L674.7 322.8 L674.5 322.1 L674.2 321.3 L674.0 320.5 L673.8 319.7 L673.5 318.9 L673.3 318.1 L673.1 317.4 L672.9 316.6 L672.6 315.8 L672.4 315.0 L672.2 314.2 L672.0 313.5 L671.8 312.7 L671.6 311.9 L671.4 311.1 L671.3 310.3 L671.1 309.6 L670.9 308.8 L670.7 308.0 L670.5 307.2 L670.4 306.4 L670.2 305.7 L670.1 304.9 L669.9 304.1 L669.8 303.3 L669.6 302.5 L669.5 301.8 L669.3 301.0 L669.2 300.2 L669.1 299.4 L668.9 298.6 L668.8 297.9 L668.7 297.1 L668.6 296.3 L668.5 295.5 L668.4 294.7 L668.3 294.0 L668.2 293.2 L668.1 292.4 L668.0 291.6 L667.9 290.8 L667.8 290.1 L667.8 289.3 L667.7 288.5 L667.6 287.7 L667.5 287.0 L667.5 286.2 L667.4 285.4 L667.4 284.6 L667.3 283.8 L667.3 283.1 L667.2 282.3 L667.2 281.5 L667.2 280.7 L667.2 279.9 L667.1 279.2 L667.1 278.4 L667.1 277.6 L667.1 276.8 L667.1 276.0 L667.1 275.3 L667.1 274.5 L667.1 273.7 L667.1 272.9 L667.1 272.2 L667.1 271.4 L667.1 270.6 L667.2 269.8 L667.2 269.0 L667.2 268.3 L667.3 267.5 L667.3 266.7 L667.3 265.9 L667.4 265.2 L667.4 264.4 L667.5 263.6 L667.6 262.8 L667.6 262.1 L667.7 261.3 L667.8 260.5 L667.8 259.7 L667.9 258.9 L668.0 258.2 L668.1 257.4 L668.2 256.6 L668.3 255.8 L668.4 255.1 L668.5 254.3 L668.6 253.5 L668.7 252.7 L668.8 252.0 L668.9 251.2 L669.1 250.4 L669.2 249.6 L669.3 248.9 L669.5 248.1 L669.6 247.3 L669.8 246.5 L669.9 245.8 L670.1 245.0 L670.2 244.2 L670.4 243.4 L670.5 242.7 L670.7 241.9 L670.9 241.1 L671.0 240.4 L671.2 239.6 L671.4 238.8 L671.6 238.0 L671.8 237.3 L672.0 236.5 L672.2 235.7 L672.4 234.9 L672.6 234.2 L672.8 233.4 L673.0 232.6 L673.2 231.9 L673.4 231.1 L673.7 230.3 L673.9 229.5 L674.1 228.8 L674.4 228.0 L674.6 227.2 L674.8 226.5 L675.1 225.7 L675.3 224.9 L675.6 224.2 L675.9 223.4 L676.1 222.6 L676.4 221.9 L676.7 221.1 L676.9 220.3 L677.2 219.6 L677.5 218.8 L677.8 218.0 L678.1 217.3 L678.3 216.5 L678.6 215.7 L678.9 215.0 L679.2 214.2 L679.5 213.4 L679.9 212.7 L680.2 211.9 L680.5 211.1 L680.8 210.4 L681.1 209.6 L681.4 208.8 L681.8 208.1 L682.1 207.3 L682.4 206.5 L682.8 205.8 L683.1 205.0 L683.5 204.3 L683.8 203.5 L684.2 202.7 L684.5 202.0 L684.9 201.2 L685.3 200.4 L685.6 199.7 L686.0 198.9 L686.4 198.2 L686.7 197.4 L687.1 196.7 M879.5 581.0 L880.0 581.8 L880.5 582.6 L881.0 583.4 L881.5 584.3 L882.0 585.1 L882.5 585.9 L883.0 586.7 L883.4 587.5 L883.9 588.3 L884.4 589.1 L884.9 589.9 L885.4 590.7 L885.9 591.6 L886.4 592.4 L886.9 593.2 L887.4 594.0 L887.9 594.8 L888.4 595.6 L888.9 596.4 L889.4 597.2 L889.9 598.0 L890.4 598.8 L890.9 599.6 L891.4 600.5 L891.9 601.3 L892.4 602.1 L892.8 602.9 L893.3 603.7 L893.8 604.5 L894.3 605.2 L894.8 606.0 L895.3 606.8 L895.7 607.6 L896.2 608.3 L896.6 609.1 L897.0 609.8 L897.3 610.4 L897.5 611.0 L897.5 611.4 L897.0 611.5 L895.9 611.4 L894.1 611.0 L891.9 610.5 M913.8 609.8 L915.5 609.1 L917.3 608.4 L919.2 607.6 L921.1 606.9 L923.1 606.1 L925.1 605.3 L927.1 604.5 L929.1 603.7 L931.1 602.9 L933.1 602.1 L935.1 601.3 L937.1 600.5 L939.1 599.7 L941.2 598.9 L943.2 598.1 L945.2 597.3 L947.3 596.5 L949.3 595.7 L951.3 594.9 L953.4 594.1 L955.4 593.2 L957.4 592.4 L959.5 591.6 L961.5 590.8 L963.5 590.0 L965.5 589.2 L967.6 588.4 L969.6 587.6 L971.6 586.7 L973.7 585.9 L975.7 585.1 L977.7 584.3 L979.7 583.5 L981.8 582.7 L983.8 581.9 L985.8 581.1 L987.8 580.2 L989.8 579.4 L991.9 578.6 L993.9 577.8 L995.9 577.0 L997.9 576.2 L999.9 575.4 L1001.9 574.6 L1003.9 573.7 L1005.9 572.9 L1007.9 572.1 L1009.9 571.3 L1011.9 570.5 L1013.9 569.7 L1015.9 568.9 L1017.9 568.0 L1019.9 567.2 L1021.9 566.4 L1023.9 565.6 L1025.9 564.8 L1027.8 564.0 L1029.8 563.2 L1031.8 562.3 L1033.8 561.5 L1035.7 560.7 L1037.7 559.9 L1039.7 559.1 L1041.6 558.3 L1043.6 557.5 L1045.6 556.6 L1047.5 555.8 L1049.5 555.0 L1051.4 554.2 L1053.4 553.4 L1055.3 552.6 L1057.3 551.8 L1059.2 550.9 L1061.1 550.1 L1063.1 549.3 L1065.0 548.5 L1066.9 547.7 L1068.9 546.9 L1070.8 546.1 L1072.7 545.2 L1074.6 544.4 L1076.5 543.6 L1078.4 542.8 L1080.3 542.0 L1082.2 541.2 L1084.1 540.3 L1086.0 539.5 L1087.9 538.7 L1089.8 537.9 L1091.7 537.1 L1093.6 536.3 L1095.5 535.5 L1097.3 534.6 L1099.2 533.8 L1101.1 533.0 L1102.9 532.2 L1104.8 531.4 L1106.6 530.6 L1108.5 529.8 L1110.3 528.9 L1112.2 528.1 L1114.0 527.3 L1115.8 526.5 L1117.7 525.7 L1119.5 524.9 L1121.3 524.1 L1123.1 523.2 L1125.0 522.4 L1126.8 521.6 L1128.6 520.8 L1130.4 520.0 L1132.2 519.2 L1134.0 518.4 L1135.8 517.5 L1137.5 516.7 L1139.3 515.9 L1141.1 515.1 L1142.9 514.3 L1144.6 513.5 L1146.4 512.6 L1148.1 511.8 L1149.9 511.0 L1151.6 510.2 L1153.4 509.4 L1155.1 508.6 L1156.8 507.8 L1158.6 506.9 L1160.3 506.1 L1162.0 505.3 L1163.7 504.5 L1165.4 503.7 L1167.1 502.9 L1168.8 502.1 L1170.5 501.2 L1172.2 500.4 L1173.9 499.6 L1175.6 498.8 L1177.2 498.0 L1178.9 497.2 L1180.6 496.4 L1182.2 495.5 L1183.9 494.7 L1185.5 493.9 L1187.2 493.1 L1188.8 492.3 L1190.4 491.5 L1192.1 490.6 L1193.7 489.8 L1195.3 489.0 L1196.9 488.2 L1198.5 487.4 L1200.1 486.6 L1201.7 485.8 L1203.3 484.9 L1204.8 484.1 L1206.4 483.3 M831.3 587.3 L829.1 586.7 L826.9 586.1 L824.7 585.4 L822.5 584.8 L820.2 584.1 L817.9 583.5 L815.6 582.8 L813.3 582.1 L811.0 581.5 L808.6 580.8 L806.2 580.1 L803.8 579.4 L801.4 578.7 L799.0 578.0 L796.6 577.3 L794.2 576.5 L791.7 575.8 L789.3 575.1 L786.8 574.4 L784.4 573.6 L781.9 572.9 L779.4 572.2 L776.9 571.4 L774.4 570.7 L772.0 569.9 L769.4 569.2 L766.9 568.4 L764.4 567.7 L761.9 566.9 L759.4 566.2 L756.9 565.4 L754.4 564.7 L751.8 563.9 L749.3 563.1 L746.8 562.4 L744.2 561.6 L741.7 560.9 L739.2 560.1 L736.6 559.3 L734.1 558.5 L731.5 557.8 L729.0 557.0 L726.5 556.2 L723.9 555.4 L721.4 554.7 L718.8 553.9 L716.3 553.1 L713.8 552.3 L711.2 551.6 L708.7 550.8 L706.2 550.0 L703.6 549.2 L701.1 548.4 L698.6 547.6 M1107.1 546.9 L1109.2 546.1 L1111.3 545.3 L1113.4 544.5 L1115.5 543.7 L1117.5 542.9 L1119.6 542.1 L1121.7 541.3 L1123.8 540.6 L1125.9 539.8 L1127.9 539.0 L1130.0 538.2 L1132.1 537.4 L1134.1 536.6 L1136.2 535.8 L1138.2 535.0 L1140.3 534.2 L1142.3 533.4 L1144.4 532.6 L1146.4 531.8 L1148.5 531.0 L1150.5 530.2 L1152.5 529.4 L1154.6 528.7 L1156.6 527.9 L1158.6 527.1 L1160.6 526.3 L1162.7 525.5 L1164.7 524.7 L1166.7 523.9 L1168.7 523.1 L1170.7 522.3 L1172.7 521.5 L1174.7 520.7 L1176.7 519.9 L1178.6 519.1 L1180.6 518.3 L1182.6 517.5 L1184.6 516.7 L1186.5 515.9 L1188.5 515.1 L1190.4 514.3 L1192.4 513.5 L1194.3 512.7 L1196.3 511.9 L1198.2 511.1 L1200.1 510.3 L1202.0 509.5 L1204.0 508.7 L1205.9 507.9 L1207.8 507.1 L1209.7 506.3 L1211.6 505.4 L1213.5 504.6 L1215.4 503.8 L1217.3 503.0 L1219.1 502.2 L1221.0 501.4 L1222.9 500.6 L1224.7 499.8 M930.0 556.0 L929.2 556.1 L928.3 556.1 L927.5 556.2 L926.7 556.2 L925.8 556.2 L925.0 556.3 L924.2 556.3 L923.4 556.2 L922.6 556.2 L921.8 556.2 L921.0 556.2 L920.2 556.1 L919.4 556.0 L918.6 556.0 L917.8 555.9 L917.0 555.8 L916.2 555.7 L915.5 555.6 L914.7 555.4 L913.9 555.3 L913.1 555.1 L912.4 555.0 L911.6 554.8 L910.8 554.6 L910.1 554.4 L909.3 554.2 L908.5 554.0 L907.8 553.8 L907.0 553.6 L906.3 553.3 L905.5 553.1 L904.7 552.8 L904.0 552.5 L903.2 552.2 L902.5 552.0 L901.7 551.7 L901.0 551.4 L900.2 551.0 L899.5 550.7 L898.7 550.4 L897.9 550.0 L897.2 549.7 L896.4 549.3 L895.7 549.0 L894.9 548.6 L894.1 548.2 L893.4 547.8 L892.6 547.4 L891.9 547.0 L891.1 546.6 L890.3 546.2 L889.6 545.8 L888.8 545.3 L888.0 544.9 L887.3 544.4 L886.5 544.0 L885.7 543.5 L884.9 543.1 L884.2 542.6 L883.4 542.1 L882.6 541.7 L881.8 541.2 L881.1 540.7 L880.3 540.2 L879.5 539.7 L878.7 539.2 L877.9 538.7 L877.1 538.1 L876.4 537.6 L875.6 537.1 L874.8 536.5 L874.0 536.0 L873.2 535.5 L872.4 534.9 L871.6 534.4 L870.8 533.8 L870.0 533.3 L869.2 532.7 L868.4 532.1 L867.6 531.6 L866.8 531.0 L866.0 530.4 L865.2 529.8 L864.4 529.2 L863.6 528.6 L862.8 528.1 L862.0 527.5 L861.2 526.9 L860.3 526.3 L859.5 525.6 L858.7 525.0 L857.9 524.4 L857.1 523.8 L856.3 523.2 L855.5 522.6 L854.6 521.9 L853.8 521.3 L853.0 520.7 L852.2 520.1 L851.4 519.4 L850.5 518.8 L849.7 518.1 L848.9 517.5 L848.1 516.9 L847.3 516.2 L846.4 515.6 L845.6 514.9 L844.8 514.3 L844.0 513.6 L843.1 513.0 L842.3 512.3 L841.5 511.6 L840.7 511.0 L839.8 510.3 L839.0 509.6 L838.2 509.0 L837.4 508.3 L836.5 507.6 L835.7 506.9 L834.9 506.3 L834.0 505.6 L833.2 504.9 L832.4 504.2 L831.6 503.5 L830.7 502.9 L829.9 502.2 L829.1 501.5 L828.3 500.8 L827.4 500.1 L826.6 499.4 L825.8 498.7 L824.9 498.0 L824.1 497.3 L823.3 496.6 L822.5 495.9 L821.6 495.2 L820.8 494.5 L820.0 493.8 L819.2 493.1 L818.4 492.4 L817.5 491.7 L816.7 491.0 L815.9 490.3 L815.1 489.6 L814.2 488.9 L813.4 488.2 L812.6 487.5 L811.8 486.7 L811.0 486.0 L810.2 485.3 L809.3 484.6 L808.5 483.9 L807.7 483.2 L806.9 482.4 L806.1 481.7 L805.3 481.0 L804.5 480.3 L803.6 479.6 L802.8 478.8 L802.0 478.1 L801.2 477.4 L800.4 476.7 L799.6 475.9 L798.8 475.2 L798.0 474.5 L797.2 473.7 L796.4 473.0 L795.6 472.3 L794.8 471.5 L794.0 470.8 L793.2 470.1 L792.4 469.3 L791.6 468.6 L790.8 467.9 L790.0 467.1 L789.3 466.4 L788.5 465.7 L787.7 464.9 L786.9 464.2 L786.1 463.5 L785.3 462.7 L784.5 462.0 L783.8 461.2 L783.0 460.5 L782.2 459.7 L781.4 459.0 L780.7 458.3 L779.9 457.5 L779.1 456.8 L778.4 456.0 L777.6 455.3 L776.8 454.5 L776.1 453.8 L775.3 453.0 L774.5 452.3 L773.8 451.5 L773.0 450.8 L772.3 450.0 L771.5 449.3 L770.8 448.6 L770.0 447.8 L769.3 447.0 L768.5 446.3 L767.8 445.5 L767.0 444.8 L766.3 444.0 L765.6 443.3 L764.8 442.5 L764.1 441.8 L763.4 441.0 L762.6 440.3 L761.9 439.5 L761.2 438.8 L760.5 438.0 L759.7 437.3 L759.0 436.5 L758.3 435.7 L757.6 435.0 L756.9 434.2 L756.2 433.5 L755.5 432.7 L754.7 432.0 L754.0 431.2 L753.3 430.4 L752.6 429.7 L751.9 428.9 L751.3 428.2 L750.6 427.4 L749.9 426.6 L749.2 425.9 L748.5 425.1 L747.8 424.4 L747.1 423.6 L746.5 422.8 L745.8 422.1 L745.1 421.3 L744.4 420.5 L743.8 419.8 L743.1 419.0 L742.4 418.3 L741.8 417.5 L741.1 416.7 L740.5 416.0 L739.8 415.2 L739.2 414.4 L738.5 413.7 L737.9 412.9 L737.2 412.1 L736.6 411.4 L736.0 410.6 L735.3 409.8 L734.7 409.1 L734.1 408.3 L733.4 407.5 L732.8 406.8 L732.2 406.0 L731.6 405.2 L731.0 404.5 L730.3 403.7 L729.7 402.9 L729.1 402.2 L728.5 401.4 L727.9 400.6 L727.3 399.9 L726.7 399.1 L726.1 398.3 L725.6 397.6 L725.0 396.8 L724.4 396.0 L723.8 395.2 L723.2 394.5 L722.7 393.7 L722.1 392.9 L721.5 392.2 L720.9 391.4 L720.4 390.6 L719.8 389.9 L719.3 389.1 L718.7 388.3 L718.2 387.5 L717.6 386.8 L717.1 386.0 L716.5 385.2 L716.0 384.5 L715.5 383.7 L714.9 382.9 L714.4 382.1 L713.9 381.4 L713.3 380.6 L712.8 379.8 L712.3 379.1 L711.8 378.3 L711.3 377.5 L710.8 376.7 L710.3 376.0 L709.8 375.2 L709.3 374.4 L708.8 373.6 L708.3 372.9 L707.8 372.1 L707.3 371.3 L706.9 370.5 L706.4 369.8 L705.9 369.0 L705.4 368.2 L705.0 367.5 L704.5 366.7 L704.0 365.9 L703.6 365.1 L703.1 364.4 L702.7 363.6 L702.2 362.8 L701.8 362.0 L701.4 361.3 L700.9 360.5 L700.5 359.7 L700.1 358.9 L699.6 358.2 L699.2 357.4 L698.8 356.6 L698.4 355.8 L698.0 355.1 L697.6 354.3 L697.1 353.5 L696.7 352.7 L696.3 352.0 L696.0 351.2 L695.6 350.4 L695.2 349.6 L694.8 348.9 L694.4 348.1 L694.0 347.3 L693.7 346.5 L693.3 345.7 L692.9 345.0 L692.6 344.2 L692.2 343.4 L691.8 342.6 L691.5 341.9 L691.1 341.1 L690.8 340.3 L690.5 339.5 L690.1 338.8 L689.8 338.0 L689.5 337.2 L689.1 336.4 L688.8 335.7 L688.5 334.9 L688.2 334.1 L687.9 333.3 L687.6 332.6 L687.3 331.8 L687.0 331.0 L686.7 330.2 L686.4 329.4 L686.1 328.7 L685.8 327.9 L685.5 327.1 L685.2 326.3 L685.0 325.6 L684.7 324.8 L684.4 324.0 L684.2 323.2 L683.9 322.5 L683.6 321.7 L683.4 320.9 L683.1 320.1 L682.9 319.3 L682.7 318.6 L682.4 317.8 L682.2 317.0 L682.0 316.2 L681.7 315.5 L681.5 314.7 L681.3 313.9 L681.1 313.1 L680.9 312.4 L680.7 311.6 L680.5 310.8 L680.3 310.0 L680.1 309.2 L679.9 308.5 L679.7 307.7 L679.5 306.9 L679.3 306.1 L679.2 305.4 L679.0 304.6 L678.8 303.8 L678.7 303.0 L678.5 302.3 L678.3 301.5 L678.2 300.7 L678.0 299.9 L677.9 299.2 L677.8 298.4 L677.6 297.6 L677.5 296.8 L677.4 296.1 L677.2 295.3 L677.1 294.5 L677.0 293.7 L676.9 292.9 L676.8 292.2 L676.7 291.4 L676.6 290.6 L676.5 289.8 L676.4 289.1 L676.3 288.3 L676.2 287.5 L676.1 286.7 L676.0 286.0 L676.0 285.2 L675.9 284.4 L675.8 283.6 L675.8 282.9 L675.7 282.1 L675.6 281.3 L675.6 280.5 L675.5 279.8 L675.5 279.0 L675.5 278.2 L675.4 277.4 L675.4 276.7 L675.4 275.9 L675.3 275.1 L675.3 274.3 L675.3 273.6 L675.3 272.8 L675.3 272.0 L675.3 271.2 L675.3 270.5 L675.3 269.7 L675.3 268.9 L675.3 268.2 L675.3 267.4 L675.3 266.6 L675.3 265.8 L675.4 265.1 L675.4 264.3 L675.4 263.5 L675.5 262.7 L675.5 262.0 L675.6 261.2 L675.6 260.4 L675.7 259.6 L675.7 258.9 L675.8 258.1 L675.8 257.3 L675.9 256.6 L676.0 255.8 L676.1 255.0 L676.1 254.2 L676.2 253.5 L676.3 252.7 L676.4 251.9 L676.5 251.2 L676.6 250.4 L676.7 249.6 L676.8 248.8 L676.9 248.1 L677.0 247.3 L677.1 246.5 L677.3 245.8 L677.4 245.0 L677.5 244.2 L677.6 243.5 L677.8 242.7 L677.9 241.9 L678.1 241.2 L678.2 240.4 L678.3 239.6 L678.5 238.8 L678.7 238.1 L678.8 237.3 L679.0 236.5 L679.2 235.8 L679.3 235.0 L679.5 234.2 L679.7 233.5 L679.9 232.7 L680.1 231.9 L680.2 231.2 L680.4 230.4 L680.6 229.6 L680.8 228.9 L681.0 228.1 L681.2 227.3 L681.5 226.6 L681.7 225.8 L681.9 225.1 L682.1 224.3 L682.3 223.5 L682.6 222.8 L682.8 222.0 L683.0 221.2 L683.3 220.5 L683.5 219.7 L683.8 218.9 L684.0 218.2 L684.3 217.4 L684.5 216.7 L684.8 215.9 L685.0 215.1 L685.3 214.4 L685.6 213.6 L685.9 212.9 L686.1 212.1 L686.4 211.3 L686.7 210.6 L687.0 209.8 L687.3 209.1 L687.6 208.3 L687.9 207.5 L688.2 206.8 L688.5 206.0 L688.8 205.3 L689.1 204.5 L689.4 203.8 L689.7 203.0 L690.0 202.2 L690.4 201.5 L690.7 200.7 L691.0 200.0 L691.3 199.2 L691.7 198.5 L692.0 197.7 L692.4 197.0 M947.5 556.0 L947.5 556.6 L947.5 557.3 L947.5 557.9 L947.5 558.6 L947.5 559.2 L947.5 559.8 L947.5 560.4 L947.5 561.1 L947.6 561.7 L947.6 562.3 L947.6 562.9 L947.6 563.5 L947.7 564.0 L947.7 564.6 L947.8 565.2 L947.8 565.8 L947.9 566.3 L948.0 566.9 L948.0 567.4 L948.1 568.0 L948.2 568.5 L948.3 569.0 L948.4 569.5 L948.5 570.0 L948.7 570.5 L948.8 571.0 L948.9 571.5 L949.1 571.9 L949.3 572.4 L949.4 572.8 L949.6 573.3 L949.9 573.7 L950.1 574.1 L950.3 574.5 L950.6 574.9 L950.8 575.2 L951.1 575.6 L951.4 575.9 L951.7 576.2 L952.1 576.6 L952.4 576.9 L952.8 577.1 L953.2 577.4 L953.7 577.6 L954.1 577.9 L954.6 578.1 L955.1 578.3 L955.6 578.5 L956.2 578.6 L956.8 578.8 L957.4 578.9 L958.0 579.0 L958.7 579.1 L959.4 579.2 L960.1 579.2 L960.9 579.2 L961.7 579.2 L962.5 579.2 L963.3 579.2 L964.2 579.2 L965.2 579.1 L966.1 579.0 L967.1 578.9 L968.2 578.8 L969.2 578.7 L970.3 578.5 L971.5 578.3 L972.6 578.1 L973.8 577.9 L975.1 577.7 L976.3 577.5 L977.6 577.2 L979.0 576.9 L980.3 576.6 L981.7 576.3 L983.2 576.0 L984.6 575.7 L986.1 575.3 L987.7 574.9 L989.2 574.6 L990.8 574.2 L992.4 573.8 L994.0 573.4 L995.7 572.9 L997.4 572.5 L999.1 572.0 L1000.8 571.6 L1002.6 571.1 L1004.4 570.6 L1006.2 570.1 L1008.0 569.6 L1009.8 569.1 L1011.7 568.6 L1013.6 568.1 L1015.5 567.6 L1017.4 567.0 L1019.3 566.5 L1021.3 565.9 L1023.3 565.3 L1025.3 564.8 L1027.3 564.2 L1029.3 563.6 L1031.3 563.0 L1033.4 562.4 L1035.4 561.8 L1037.5 561.2 L1039.6 560.6 L1041.7 560.0 L1043.8 559.3 L1045.9 558.7 L1048.0 558.1 L1050.2 557.4 L1052.3 556.8 L1054.5 556.2 L1056.6 555.5 L1058.8 554.8 L1061.0 554.2 L1063.2 553.5 L1065.4 552.9 L1067.6 552.2 L1069.8 551.5 L1072.0 550.8 L1074.2 550.2 L1076.5 549.5 L1078.7 548.8 L1080.9 548.1 L1083.2 547.4 L1085.4 546.7 L1087.7 546.0 L1089.9 545.3 L1092.2 544.6 L1094.4 543.9 L1096.7 543.2 L1099.0 542.5 L1101.3 541.8 L1103.5 541.1 L1105.8 540.4 L1108.1 539.7 L1110.4 538.9 L1112.7 538.2 L1114.9 537.5 L1117.2 536.8 L1119.5 536.0 L1121.8 535.3 L1124.1 534.6 L1126.4 533.9 L1128.7 533.1 L1131.0 532.4 L1133.3 531.7 L1135.5 530.9 L1137.8 530.2 L1140.1 529.4 L1142.4 528.7 L1144.7 528.0 L1147.0 527.2 L1149.3 526.5 L1151.6 525.7 L1153.9 525.0 L1156.1 524.2 L1158.4 523.5 L1160.7 522.7 L1163.0 522.0 L1165.3 521.2 L1167.6 520.5 L1169.8 519.7 L1172.1 519.0 L1174.4 518.2 L1176.7 517.5 L1178.9 516.7 L1181.2 516.0 L1183.5 515.2 L1185.7 514.4 L1188.0 513.7 L1190.2 512.9 L1192.5 512.2 L1194.7 511.4 L1197.0 510.6 L1199.2 509.9 L1201.5 509.1 L1203.7 508.3 L1205.9 507.6 L1208.2 506.8 L1210.4 506.0 L1212.6 505.3 L1214.8 504.5 L1217.1 503.7 L1219.3 503.0 L1221.5 502.2 L1223.7 501.4 L1225.9 500.7 L1228.1 499.9 L1230.3 499.1 L1232.5 498.3 L1234.6 497.6 L1236.8 496.8 L1239.0 496.0 L1241.2 495.2 L1243.3 494.5 L1245.5 493.7 L1247.6 492.9 L1249.8 492.1 L1251.9 491.4 L1254.1 490.6 L1256.2 489.8 L1258.3 489.0 L1260.5 488.2 L1262.6 487.5 L1264.7 486.7 L1266.8 485.9 L1268.9 485.1 L1271.0 484.3 L1273.1 483.6 L1275.2 482.8 L1277.3 482.0 L1279.3 481.2 L1281.4 480.4 L1283.5 479.7 L1285.5 478.9 L1287.6 478.1 L1289.6 477.3 L1291.7 476.5 L1293.7 475.7 L1295.7 475.0 L1297.8 474.2 L1299.8 473.4 L1301.8 472.6 L1303.8 471.8 L1305.8 471.0 L1307.8 470.2 L1309.7 469.5 L1311.7 468.7 L1313.7 467.9 L1315.6 467.1 L1317.6 466.3 L1319.5 465.5 L1321.5 464.7 M480.1 463.9 L478.6 463.2 L477.1 462.4 L475.6 461.6 L474.1 460.8 L472.6 460.0 L471.2 459.2 L469.7 458.4 L468.2 457.6 L466.8 456.8 L465.3 456.1 L463.9 455.3 L462.5 454.5 L461.0 453.7 L459.6 452.9 L458.2 452.1 L456.8 451.3 L455.4 450.5 L454.0 449.7 L452.7 448.9 L451.3 448.1 L449.9 447.4 L448.6 446.6 L447.2 445.8 L445.9 445.0 L444.6 444.2 L443.2 443.4 L441.9 442.6 L440.6 441.8 L439.3 441.0 L438.0 440.2 L436.8 439.4 L435.5 438.6 L434.2 437.8 L433.0 437.0 L431.7 436.3 L430.5 435.5 L429.2 434.7 L428.0 433.9 L426.8 433.1 L425.6 432.3 L424.4 431.5 L423.2 430.7 L422.0 429.9 L420.8 429.1 L419.7 428.3 L418.5 427.5 L417.4 426.7 L416.2 425.9 L415.1 425.1 L414.0 424.3 L412.9 423.5 L411.8 422.7 L410.7 421.9 L409.6 421.1 L408.5 420.4 L407.4 419.6 L406.4 418.8 L405.3 418.0 L404.3 417.2 L403.2 416.4 L402.2 415.6 L401.2 414.8 L400.2 414.0 L399.2 413.2 L398.2 412.4 L397.2 411.6 L396.3 410.8 L395.3 410.0 L394.3 409.2 L393.4 408.4 L392.5 407.6 L391.5 406.8 L390.6 406.0 L389.7 405.2 L388.8 404.4 L387.9 403.6 L387.1 402.8 L386.2 402.0 L385.3 401.2 L384.5 400.4 L383.6 399.6 L382.8 398.8 L382.0 398.0 L381.2 397.2 L380.4 396.4 L379.6 395.6 L378.8 394.8 L378.0 394.0 L377.2 393.2 L376.5 392.4 L375.7 391.6 L375.0 390.8 L374.3 390.0 L373.5 389.2 L372.8 388.4 L372.1 387.6 L371.4 386.8 L370.8 386.0 L370.1 385.2 L369.4 384.4 L368.8 383.6 L368.1 382.8 L367.5 382.0 L366.9 381.2 L366.3 380.4 L365.7 379.6 L365.1 378.8 L364.5 378.0 L363.9 377.2 L363.4 376.4 L362.8 375.6 L362.3 374.8 L361.7 374.0 L361.2 373.2 L360.7 372.4 L360.2 371.6 L359.7 370.8 L359.2 370.0 L358.7 369.2 L358.3 368.4 L357.8 367.6 L357.4 366.8 L356.9 366.0 L356.5 365.2 L356.1 364.4 L355.7 363.6 L355.3 362.8 L354.9 362.0 L354.6 361.2 L354.2 360.4 L353.8 359.6 L353.5 358.8 L353.2 358.0 L352.8 357.2 L352.5 356.4 L352.2 355.6 L351.9 354.8 L351.6 354.0 L351.4 353.2 L351.1 352.4 L350.8 351.6 L350.6 350.8 L350.4 350.0 L350.1 349.2 L349.9 348.4 L349.7 347.6 L349.5 346.8 L349.4 346.0 L349.2 345.2 L349.0 344.4 L348.9 343.6 L348.7 342.8 L348.6 342.0 L348.5 341.2 L348.4 340.4 L348.3 339.6 L348.2 338.8 L348.1 338.0 L348.0 337.2 M1040.0 558.0 L1042.1 557.3 L1044.3 556.5 L1046.4 555.7 L1048.5 555.0 L1050.6 554.2 L1052.8 553.5 L1054.9 552.7 L1057.1 552.0 L1059.2 551.2 L1061.3 550.4 L1063.5 549.7 L1065.6 548.9 L1067.7 548.1 L1069.9 547.4 L1072.0 546.6 L1074.2 545.8 L1076.3 545.1 L1078.4 544.3 L1080.6 543.5 L1082.7 542.7 L1084.8 542.0 L1087.0 541.2 L1089.1 540.4 L1091.2 539.6 L1093.3 538.9 L1095.5 538.1 L1097.6 537.3 L1099.7 536.5 L1101.8 535.7 L1104.0 535.0 L1106.1 534.2 L1108.2 533.4 L1110.3 532.6 L1112.4 531.8 L1114.5 531.0 L1116.6 530.3 L1118.7 529.5 L1120.8 528.7 L1122.9 527.9 L1125.0 527.1 L1127.1 526.3 L1129.2 525.5 L1131.3 524.7 L1133.4 524.0 L1135.5 523.2 L1137.5 522.4 L1139.6 521.6 L1141.7 520.8 L1143.7 520.0 L1145.8 519.2 L1147.9 518.4 L1149.9 517.6 L1152.0 516.8 L1154.0 516.0 L1156.1 515.3 L1158.1 514.5 L1160.2 513.7 L1162.2 512.9 L1164.2 512.1 L1166.2 511.3 L1168.3 510.5 L1170.3 509.7 L1172.3 508.9 L1174.3 508.1 L1176.3 507.3 L1178.3 506.5 L1180.3 505.7 L1182.3 504.9 L1184.3 504.1 L1186.3 503.3 L1188.2 502.5 L1190.2 501.7 L1192.2 500.9 L1194.1 500.1 L1196.1 499.3 L1198.1 498.5 L1200.0 497.7 L1201.9 496.9 L1203.9 496.1 L1205.8 495.3 L1207.7 494.5 L1209.7 493.7 L1211.6 492.9 L1213.5 492.1 L1215.4 491.3 L1217.3 490.5 L1219.2 489.7 L1221.1 488.9 L1223.0 488.1 L1224.9 487.3 L1226.7 486.5 L1228.6 485.7 L1230.5 484.9 L1232.3 484.1 L1234.2 483.3 L1236.0 482.5 L1237.9 481.7 L1239.7 480.9 L1241.5 480.1 L1243.3 479.3 L1245.2 478.5 L1247.0 477.7 L1248.8 476.9 L1250.6 476.1 L1252.4 475.3 L1254.1 474.5 L1255.9 473.7 L1257.7 472.9 L1259.5 472.1 L1261.2 471.3 L1263.0 470.5 L1264.7 469.7 L1266.5 468.9 L1268.2 468.1 L1269.9 467.3 M1000.0 578.0 L1002.2 577.4 L1004.5 576.7 L1006.8 576.1 L1009.1 575.4 L1011.4 574.8 L1013.7 574.1 L1016.0 573.4 L1018.4 572.7 L1020.7 572.1 L1023.1 571.4 L1025.5 570.7 L1027.9 570.0 L1030.3 569.3 L1032.7 568.6 L1035.1 567.9 L1037.6 567.2 L1040.0 566.5 L1042.4 565.7 L1044.9 565.0 L1047.3 564.3 L1049.8 563.6 L1052.3 562.8 L1054.7 562.1 L1057.2 561.4 L1059.7 560.6 L1062.2 559.9 L1064.7 559.2 L1067.2 558.4 L1069.7 557.7 L1072.2 556.9 L1074.7 556.2 L1077.2 555.4 L1079.7 554.7 L1082.2 553.9 L1084.7 553.2 L1087.2 552.4 L1089.7 551.7 L1092.2 550.9 L1094.7 550.2 L1097.2 549.4 L1099.8 548.6 L1102.3 547.9 L1104.8 547.1 L1107.3 546.3 L1109.8 545.6 L1112.3 544.8 L1114.8 544.0 L1117.3 543.3 L1119.9 542.5 M681.2 541.7 L679.2 540.9 L677.2 540.2 L675.2 539.4 L673.3 538.6 L671.3 537.8 L669.3 537.1 L667.3 536.3 L665.4 535.5 L663.4 534.7 L661.4 534.0 L659.4 533.2 L657.5 532.4 L655.5 531.6 L653.6 530.8 L651.6 530.0 L649.6 529.3 L647.7 528.5 L645.7 527.7 L643.8 526.9 L641.9 526.1 L639.9 525.3 L638.0 524.6 L636.0 523.8 L634.1 523.0 L632.2 522.2 L630.3 521.4 L628.3 520.6 L626.4 519.8 L624.5 519.0 L622.6 518.2 L620.7 517.5 L618.8 516.7 L616.9 515.9 L615.0 515.1 L613.1 514.3 L611.3 513.5 L609.4 512.7 L607.5 511.9 L605.6 511.1 L603.8 510.3 L601.9 509.5 L600.1 508.7 L598.2 507.9 L596.4 507.2 L594.5 506.4 L592.7 505.6 L590.9 504.8 L589.0 504.0 L587.2 503.2 L585.4 502.4 L583.6 501.6 L581.8 500.8 L580.0 500.0 L578.2 499.2 L576.4 498.4 L574.6 497.6 L572.8 496.8 L571.0 496.0 L569.3 495.2 L567.5 494.4 L565.8 493.6 L564.0 492.8 L562.3 492.0 L560.5 491.2 L558.8 490.4 L557.1 489.6 L555.3 488.8 L553.6 488.0 L551.9 487.2 L550.2 486.4 L548.5 485.6 L546.8 484.8 L545.1 484.0 L543.5 483.2 L541.8 482.4 L540.1 481.6 L538.5 480.8 L536.8 480.0 L535.2 479.2 L533.5 478.4 L531.9 477.6 L530.3 476.8 L528.6 476.0 L527.0 475.2 L525.4 474.4 L523.8 473.6 L522.2 472.8 L520.6 472.0 L519.0 471.2 L517.5 470.4 L515.9 469.6 L514.3 468.8 L512.8 468.0 L511.2 467.2 L509.7 466.4 L508.2 465.6 L506.6 464.8 L505.1 464.0 L503.6 463.2 L502.1 462.4 L500.6 461.5 L499.1 460.7 L497.6 459.9 L496.2 459.1 L494.7 458.3 L493.2 457.5 L491.8 456.7 L490.3 455.9 L488.9 455.1 L487.5 454.3 L486.0 453.5 L484.6 452.7 L483.2 451.9 L481.8 451.1 L480.4 450.3 L479.0 449.5 L477.7 448.7 L476.3 447.9 L474.9 447.1 L473.6 446.3 L472.2 445.5 L470.9 444.6 L469.6 443.8 L468.2 443.0 L466.9 442.2 L465.6 441.4 L464.3 440.6 L463.0 439.8 L461.7 439.0 L460.5 438.2 L459.2 437.4 L457.9 436.6 L456.7 435.8 L455.4 435.0 L454.2 434.2 L453.0 433.4 L451.8 432.6 L450.6 431.8 L449.4 430.9 L448.2 430.1 L447.0 429.3 L445.8 428.5 L444.6 427.7 L443.5 426.9 L442.3 426.1 L441.2 425.3 L440.1 424.5 L438.9 423.7 L437.8 422.9 L436.7 422.1 L435.6 421.3 L434.5 420.5 L433.4 419.7 L432.4 418.8 L431.3 418.0 L430.3 417.2 L429.2 416.4 L428.2 415.6 L427.1 414.8 L426.1 414.0 L425.1 413.2 L424.1 412.4 L423.1 411.6 L422.1 410.8 L421.1 410.0 L420.2 409.2 L419.2 408.4 L418.3 407.5 L417.3 406.7 L416.4 405.9 L415.5 405.1 L414.6 404.3 L413.7 403.5 L412.8 402.7 L411.9 401.9 L411.0 401.1 L410.1 400.3 L409.3 399.5 L408.4 398.7 L407.6 397.9 L406.8 397.0 L405.9 396.2 L405.1 395.4 L404.3 394.6 L403.5 393.8 L402.8 393.0 L402.0 392.2 L401.2 391.4 L400.5 390.6 L399.7 389.8 L399.0 389.0 L398.2 388.2 L397.5 387.3 L396.8 386.5 L396.1 385.7 L395.4 384.9 L394.7 384.1 L394.1 383.3 L393.4 382.5 L392.8 381.7 L392.1 380.9 L391.5 380.1 L390.9 379.3 L390.2 378.5 L389.6 377.6 L389.0 376.8 L388.5 376.0 L387.9 375.2 L387.3 374.4 L386.8 373.6 L386.2 372.8 L385.7 372.0 L385.1 371.2 L384.6 370.4 L384.1 369.6 L383.6 368.7 L383.1 367.9 L382.6 367.1 L382.2 366.3 L381.7 365.5 L381.3 364.7 L380.8 363.9 L380.4 363.1 L380.0 362.3 L379.6 361.5 L379.2 360.7 L378.8 359.9 L378.4 359.0 L378.0 358.2 L377.7 357.4 L377.3 356.6 L377.0 355.8 L376.6 355.0 L376.3 354.2 L376.0 353.4 L375.7 352.6 L375.4 351.8 L375.1 351.0 L374.8 350.1 L374.6 349.3 L374.3 348.5 L374.1 347.7 L373.8 346.9 L373.6 346.1 L373.4 345.3 L373.2 344.5 L373.0 343.7 L372.8 342.9 L372.6 342.1 L372.5 341.2 L372.3 340.4 L372.2 339.6 L372.0 338.8 L371.9 338.0 L371.8 337.2 L371.7 336.4 L371.6 335.6 L371.5 334.8 L371.4 334.0 L371.4 333.2 L371.3 332.3 L371.3 331.5 L371.2 330.7 L371.2 329.9 L371.2 329.1 L371.2 328.3 L371.2 327.5 L371.2 326.7 L371.2 325.9 L371.3 325.1 L371.3 324.3 L371.4 323.4 L371.4 322.6 L371.5 321.8 L371.6 321.0 L371.7 320.2 L371.8 319.4 L371.9 318.6 L372.0 317.8 L372.2 317.0 L372.3 316.2 L372.5 315.4 L372.6 314.5 L372.8 313.7 L373.0 312.9 L373.2 312.1 L373.4 311.3 L373.6 310.5 L373.8 309.7 L374.1 308.9 L374.3 308.1 L374.5 307.3 L374.8 306.5 L375.1 305.6 L375.4 304.8 L375.7 304.0 L376.0 303.2 L376.3 302.4 L376.6 301.6 L376.9 300.8 L377.3 300.0 L377.6 299.2 L378.0 298.4 L378.3 297.6 L378.7 296.7 L379.1 295.9 L379.5 295.1 L379.9 294.3 L380.4 293.5 L380.8 292.7 L381.2 291.9 L381.7 291.1 L382.1 290.3 L382.6 289.5 L383.1 288.7 L383.6 287.9 L384.1 287.0 L384.6 286.2 L385.1 285.4 L385.6 284.6 L386.2 283.8 L386.7 283.0 L387.3 282.2 L387.8 281.4 L388.4 280.6 L389.0 279.8 L389.6 279.0 L390.2 278.1 L390.8 277.3 L391.4 276.5 L392.0 275.7 L392.7 274.9 L393.3 274.1 L394.0 273.3 L394.7 272.5 L395.4 271.7 L396.0 270.9 L396.7 270.1 L397.5 269.2 L398.2 268.4 L398.9 267.6 L399.6 266.8 L400.4 266.0 L401.1 265.2 L401.9 264.4 L402.7 263.6 L403.5 262.8 L404.3 262.0 L405.1 261.2 L405.9 260.4 L406.7 259.5 L407.5 258.7 L408.4 257.9 L409.2 257.1 L410.1 256.3 L410.9 255.5 L411.8 254.7 L412.7 253.9 L413.6 253.1 L414.5 252.3 L415.4 251.5 L416.3 250.7 L417.3 249.8 L418.2 249.0 L419.2 248.2 L420.1 247.4 L421.1 246.6 L422.1 245.8 L423.0 245.0 L424.0 244.2 L425.0 243.4 L426.1 242.6 L427.1 241.8 L428.1 241.0 L429.1 240.1 L430.2 239.3 L431.2 238.5 L432.3 237.7 L433.4 236.9 L434.5 236.1 L435.6 235.3 L436.7 234.5 L437.8 233.7 L438.9 232.9 L440.0 232.1 L441.1 231.3 L442.3 230.5 L443.4 229.6 L444.6 228.8 L445.8 228.0 L446.9 227.2 L448.1 226.4 L449.3 225.6 L450.5 224.8 L451.7 224.0 L452.9 223.2 L454.2 222.4 L455.4 221.6 L456.7 220.8 L457.9 220.0 L459.2 219.2 L460.4 218.3 L461.7 217.5 L463.0 216.7 L464.3 215.9 L465.6 215.1 L466.9 214.3 L468.2 213.5 L469.5 212.7 L470.9 211.9 L472.2 211.1 L473.6 210.3 L474.9 209.5 L476.3 208.7 L477.7 207.9 L479.0 207.1 L480.4 206.3 L481.8 205.4 L483.2 204.6 L484.6 203.8 L486.1 203.0 L487.5 202.2 L488.9 201.4 L490.4 200.6 L491.8 199.8 L493.3 199.0 L494.7 198.2 L496.2 197.4 L497.7 196.6 M1070.0 541.0 L1070.3 541.2 L1070.5 541.5 L1070.8 541.7 L1071.2 541.9 L1071.5 542.1 L1071.8 542.3 L1072.2 542.5 L1072.6 542.7 L1073.0 542.8 L1073.4 543.0 L1073.9 543.1 L1074.4 543.3 L1074.9 543.4 L1075.4 543.5 L1075.9 543.7 L1076.4 543.8 L1077.0 543.9 L1077.6 543.9 L1078.2 544.0 L1078.9 544.1 L1079.5 544.2 L1080.2 544.2 L1080.9 544.3 L1081.6 544.3 L1082.4 544.3 L1083.2 544.3 L1083.9 544.4 L1084.8 544.4 L1085.6 544.3 L1086.5 544.3 L1087.4 544.3 L1088.3 544.3 L1089.2 544.2 L1090.2 544.2 L1091.1 544.1 L1092.1 544.0 L1093.2 543.9 L1094.2 543.8 L1095.3 543.7 L1096.4 543.6 L1097.5 543.5 L1098.6 543.4 L1099.8 543.3 L1101.0 543.1 L1102.2 543.0 L1103.4 542.8 L1104.7 542.6 L1106.0 542.4 L1107.3 542.3 L1108.6 542.1 L1110.0 541.9 L1111.3 541.6 L1112.7 541.4 L1114.1 541.2 L1115.6 541.0 L1117.0 540.7 L1118.5 540.5 L1120.0 540.2 L1121.6 539.9 L1123.1 539.7 L1124.7 539.4 L1126.2 539.1 L1127.9 538.8 L1129.5 538.5 L1131.1 538.2 L1132.8 537.9 M669.1 537.5 L668.9 537.2 L668.6 536.9 L668.4 536.5 L668.1 536.2 L667.8 535.8 L667.5 535.4 L667.2 535.1 L666.9 534.7 L666.5 534.3 L666.1 533.9 L665.8 533.5 L665.4 533.1 L665.0 532.7 L664.5 532.3 L664.1 531.9 L663.6 531.4 L663.2 531.0 L662.7 530.6 L662.2 530.1 L661.7 529.7 L661.1 529.2 L660.6 528.8 L660.1 528.3 L659.5 527.9 L658.9 527.4 L658.4 526.9 L657.8 526.4 L657.2 525.9 L656.6 525.5 L655.9 525.0 L655.3 524.5 L654.7 524.0 L654.0 523.5 L653.4 522.9 L652.7 522.4 L652.0 521.9 L651.4 521.4 L650.7 520.9 L650.0 520.3 L649.3 519.8 L648.6 519.3 L647.9 518.7 L647.1 518.2 L646.4 517.6 L645.7 517.1 L644.9 516.5 L644.2 516.0 L643.5 515.4 L642.7 514.8 L641.9 514.3 L641.2 513.7 L640.4 513.1 L639.6 512.5 L638.8 512.0 L638.1 511.4 L637.3 510.8 L636.5 510.2 L635.7 509.6 L634.9 509.0 L634.1 508.4 L633.3 507.8 L632.5 507.2 L631.7 506.6 L630.9 506.0 L630.0 505.4 L629.2 504.8 L628.4 504.2 L627.6 503.5 L626.8 502.9 L625.9 502.3 L625.1 501.7 L624.3 501.1 L623.4 500.4 L622.6 499.8 L621.8 499.2 L620.9 498.5 L620.1 497.9 L619.3 497.3 L618.4 496.6 L617.6 496.0 L616.8 495.3 L615.9 494.7 L615.1 494.0 L614.2 493.4 L613.4 492.7 L612.6 492.1 L611.7 491.4 L610.9 490.8 L610.1 490.1 L609.2 489.5 L608.4 488.8 L607.5 488.1 L606.7 487.5 L605.9 486.8 L605.0 486.2 L604.2 485.5 L603.4 484.8 L602.5 484.1 L601.7 483.5 L600.9 482.8 L600.1 482.1 L599.2 481.5 L598.4 480.8 L597.6 480.1 L596.8 479.4 L595.9 478.7 L595.1 478.1 L594.3 477.4 L593.5 476.7 L592.7 476.0 L591.9 475.3 L591.1 474.6 L590.3 473.9 L589.5 473.2 L588.7 472.6 L587.9 471.9 L587.1 471.2 L586.3 470.5 L585.5 469.8 L584.7 469.1 L583.9 468.4 L583.1 467.7 L582.4 467.0 L581.6 466.3 L580.8 465.6 L580.0 464.9 L579.3 464.2 L578.5 463.5 L577.7 462.8 L577.0 462.1 L576.2 461.4 L575.5 460.7 L574.7 460.0 L574.0 459.2 L573.2 458.5 L572.5 457.8 L571.8 457.1 L571.0 456.4 L570.3 455.7 L569.6 455.0 L568.9 454.3 L568.2 453.5 L567.4 452.8 L566.7 452.1 L566.0 451.4 L565.3 450.7 L564.6 450.0 L563.9 449.2 L563.3 448.5 L562.6 447.8 L561.9 447.1 L561.2 446.4 L560.5 445.6 L559.9 444.9 L559.2 444.2 L558.6 443.5 L557.9 442.7 L557.2 442.0 L556.6 441.3 L556.0 440.6 L555.3 439.8 L554.7 439.1 L554.1 438.4 L553.4 437.7 L552.8 436.9 L552.2 436.2 L551.6 435.5 L551.0 434.7 L550.4 434.0 L549.8 433.3 L549.2 432.5 L548.6 431.8 L548.0 431.1 L547.5 430.3 L546.9 429.6 L546.3 428.9 L545.8 428.1 L545.2 427.4 L544.7 426.7 L544.1 425.9 L543.6 425.2 L543.0 424.5 L542.5 423.7 L542.0 423.0 L541.4 422.3 L540.9 421.5 L540.4 420.8 L539.9 420.0 L539.4 419.3 L538.9 418.6 L538.4 417.8 L537.9 417.1 L537.5 416.3 L537.0 415.6 L536.5 414.9 L536.1 414.1 L535.6 413.4 L535.2 412.6 L534.7 411.9 L534.3 411.1 L533.8 410.4 L533.4 409.7 L533.0 408.9 L532.6 408.2 L532.1 407.4 L531.7 406.7 L531.3 405.9 L530.9 405.2 L530.5 404.4 L530.2 403.7 L529.8 403.0 L529.4 402.2 L529.0 401.5 L528.7 400.7 L528.3 400.0 L528.0 399.2 L527.6 398.5 L527.3 397.7 L526.9 397.0 L526.6 396.2 L526.3 395.5 L526.0 394.7 L525.7 394.0 L525.4 393.2 L525.1 392.5 L524.8 391.7 L524.5 391.0 L524.2 390.2 L523.9 389.5 L523.7 388.7 L523.4 388.0 L523.1 387.2 L522.9 386.5 L522.6 385.7 L522.4 385.0 L522.2 384.2 L521.9 383.5 L521.7 382.7 L521.5 382.0 L521.3 381.2 L521.1 380.5 L520.9 379.7 L520.7 378.9 L520.5 378.2 L520.3 377.4 L520.2 376.7 L520.0 375.9 L519.8 375.2 L519.7 374.4 L519.5 373.7 L519.4 372.9 L519.3 372.2 L519.1 371.4 L519.0 370.7 L518.9 369.9 L518.8 369.1 L518.7 368.4 L518.6 367.6 L518.5 366.9 L518.4 366.1 L518.3 365.4 L518.2 364.6 L518.2 363.9 L518.1 363.1 L518.0 362.3 L518.0 361.6 L518.0 360.8 L517.9 360.1 L517.9 359.3 L517.9 358.6 L517.8 357.8 L517.8 357.0 L517.8 356.3 L517.8 355.5 L517.8 354.8 L517.8 354.0 L517.9 353.3 L517.9 352.5 L517.9 351.7 L518.0 351.0 L518.0 350.2 L518.1 349.5 L518.1 348.7 L518.2 347.9 L518.3 347.2 L518.3 346.4 L518.4 345.7 L518.5 344.9 L518.6 344.2 L518.7 343.4 L518.8 342.6 L518.9 341.9 L519.0 341.1 L519.2 340.4 L519.3 339.6 L519.4 338.8 L519.6 338.1 L519.7 337.3 L519.9 336.6 L520.1 335.8 L520.2 335.0 L520.4 334.3 L520.6 333.5 L520.8 332.8 L521.0 332.0 L521.2 331.3 L521.4 330.5 L521.6 329.7 L521.8 329.0 L522.0 328.2 L522.3 327.5 L522.5 326.7 L522.8 325.9 L523.0 325.2 L523.3 324.4 L523.5 323.7 L523.8 322.9 L524.1 322.1 L524.4 321.4 L524.7 320.6 L525.0 319.9 L525.3 319.1 L525.6 318.3 L525.9 317.6 L526.2 316.8 L526.5 316.1 L526.9 315.3 L527.2 314.5 L527.6 313.8 L527.9 313.0 L528.3 312.3 L528.6 311.5 L529.0 310.7 L529.4 310.0 L529.8 309.2 L530.1 308.5 L530.5 307.7 L530.9 307.0 L531.4 306.2 L531.8 305.4 L532.2 304.7 L532.6 303.9 L533.0 303.2 L533.5 302.4 L533.9 301.6 L534.4 300.9 L534.8 300.1 L535.3 299.4 L535.8 298.6 L536.2 297.8 L536.7 297.1 L537.2 296.3 L537.7 295.6 L538.2 294.8 L538.7 294.1 L539.2 293.3 L539.7 292.5 L540.2 291.8 L540.8 291.0 L541.3 290.3 L541.8 289.5 L542.4 288.7 L542.9 288.0 L543.5 287.2 L544.1 286.5 L544.6 285.7 L545.2 285.0 L545.8 284.2 L546.4 283.4 L547.0 282.7 L547.6 281.9 L548.2 281.2 L548.8 280.4 L549.4 279.7 L550.0 278.9 L550.6 278.1 L551.3 277.4 L551.9 276.6 L552.6 275.9 L553.2 275.1 L553.9 274.4 L554.5 273.6 L555.2 272.9 L555.9 272.1 L556.5 271.3 L557.2 270.6 L557.9 269.8 L558.6 269.1 L559.3 268.3 L560.0 267.6 L560.7 266.8 L561.4 266.1 L562.2 265.3 L562.9 264.6 L563.6 263.8 L564.4 263.0 L565.1 262.3 L565.9 261.5 L566.6 260.8 L567.4 260.0 L568.1 259.3 L568.9 258.5 L569.7 257.8 L570.5 257.0 L571.2 256.3 L572.0 255.5 L572.8 254.8 L573.6 254.0 L574.4 253.3 L575.3 252.5 L576.1 251.8 L576.9 251.0 L577.7 250.3 L578.6 249.5 L579.4 248.8 L580.2 248.0 L581.1 247.3 L581.9 246.5 L582.8 245.8 L583.7 245.0 L584.5 244.3 L585.4 243.5 L586.3 242.8 L587.2 242.0 L588.0 241.3 L588.9 240.5 L589.8 239.8 L590.7 239.0 L591.6 238.3 L592.6 237.5 L593.5 236.8 L594.4 236.0 L595.3 235.3 L596.2 234.5 L597.2 233.8 L598.1 233.1 L599.1 232.3 L600.0 231.6 L601.0 230.8 L601.9 230.1 L602.9 229.3 L603.8 228.6 L604.8 227.9 L605.8 227.1 L606.8 226.4 L607.8 225.6 L608.7 224.9 L609.7 224.1 L610.7 223.4 L611.7 222.7 L612.7 221.9 L613.8 221.2 L614.8 220.4 L615.8 219.7 L616.8 219.0 L617.8 218.2 L618.9 217.5 L619.9 216.8 L620.9 216.0 L622.0 215.3 L623.0 214.5 L624.1 213.8 L625.1 213.1 L626.2 212.3 L627.2 211.6 L628.3 210.9 L629.4 210.1 L630.5 209.4 L631.5 208.7 L632.6 207.9 L633.7 207.2 L634.8 206.5 L635.9 205.7 L637.0 205.0 L638.1 204.3 L639.2 203.6 L640.3 202.8 L641.4 202.1 L642.5 201.4 L643.6 200.6 L644.7 199.9 L645.9 199.2 L647.0 198.5 L648.1 197.7 L649.2 197.0 M1079.0 536.0 L1079.1 536.3 L1079.2 536.6 L1079.2 536.9 L1079.4 537.2 L1079.5 537.5 L1079.6 537.8 L1079.8 538.1 L1080.0 538.3 L1080.2 538.6 L1080.4 538.8 L1080.6 539.1 L1080.8 539.3 L1081.1 539.6 L1081.4 539.8 L1081.7 540.0 L1082.0 540.2 L1082.3 540.4 L1082.7 540.6 L1083.0 540.8 L1083.4 540.9 L1083.8 541.1 L1084.2 541.3 L1084.7 541.4 L1085.2 541.5 L1085.6 541.7 L1086.2 541.8 L1086.7 541.9 L1087.2 542.0 L1087.8 542.1 L1088.4 542.2 L1089.0 542.3 L1089.7 542.3 L1090.3 542.4 L1091.0 542.5 L1091.7 542.5 L1092.4 542.5 L1093.2 542.6 L1093.9 542.6 L1094.7 542.6 L1095.6 542.6 L1096.4 542.6 L1097.3 542.6 L1098.1 542.5 L1099.1 542.5 L1100.0 542.5 L1100.9 542.4 L1101.9 542.3 L1102.9 542.3 L1104.0 542.2 L1105.0 542.1 L1106.1 542.0 L1107.2 541.9 L1108.3 541.8 L1109.4 541.7 L1110.6 541.5 L1111.8 541.4 L1113.0 541.2 L1114.3 541.1 L1115.5 540.9 L1116.8 540.7 L1118.1 540.5 L1119.4 540.4 L1120.8 540.2 L1122.1 540.0 L1123.5 539.7 L1125.0 539.5 L1126.4 539.3 L1127.9 539.0 L1129.3 538.8 L1130.8 538.5 M671.3 538.3 L671.3 538.0 L671.3 537.7 L671.2 537.5 L671.2 537.2 L671.1 536.9 L671.0 536.6 L670.9 536.3 L670.7 535.9 L670.6 535.6 L670.4 535.3 L670.2 534.9 L670.0 534.6 L669.7 534.2 L669.5 533.9 L669.2 533.5 L669.0 533.2 L668.7 532.8 L668.4 532.4 L668.0 532.0 L667.7 531.6 L667.3 531.2 L667.0 530.8 L666.6 530.4 L666.2 530.0 L665.8 529.6 L665.4 529.1 L664.9 528.7 L664.5 528.3 L664.0 527.8 L663.6 527.4 L663.1 526.9 L662.6 526.5 L662.1 526.0 L661.6 525.5 L661.1 525.1 L660.5 524.6 L660.0 524.1 L659.4 523.6 L658.9 523.1 L658.3 522.6 L657.7 522.1 L657.1 521.6 L656.6 521.1 L656.0 520.6 L655.3 520.1 L654.7 519.6 L654.1 519.1 L653.5 518.5 L652.8 518.0 L652.2 517.5 L651.5 516.9 L650.9 516.4 L650.2 515.8 L649.5 515.3 L648.9 514.7 L648.2 514.2 L647.5 513.6 L646.8 513.1 L646.1 512.5 L645.4 511.9 L644.7 511.4 L644.0 510.8 L643.3 510.2 L642.6 509.6 L641.9 509.1 L641.1 508.5 L640.4 507.9 L639.7 507.3 L638.9 506.7 L638.2 506.1 L637.5 505.5 L636.7 504.9 L636.0 504.3 L635.2 503.7 L634.5 503.1 L633.7 502.5 L633.0 501.9 L632.2 501.3 L631.5 500.7 L630.7 500.0 L629.9 499.4 L629.2 498.8 L628.4 498.2 L627.6 497.5 L626.9 496.9 L626.1 496.3 L625.3 495.7 L624.6 495.0 L623.8 494.4 L623.0 493.7 L622.3 493.1 L621.5 492.5 L620.7 491.8 L620.0 491.2 L619.2 490.5 L618.4 489.9 L617.7 489.2 L616.9 488.6 L616.1 487.9 L615.3 487.3 L614.6 486.6 L613.8 486.0 L613.0 485.3 L612.3 484.6 L611.5 484.0 L610.7 483.3 L610.0 482.6 L609.2 482.0 L608.5 481.3 L607.7 480.6 L606.9 480.0 L606.2 479.3 L605.4 478.6 L604.7 477.9 L603.9 477.3 L603.2 476.6 L602.4 475.9 L601.7 475.2 L600.9 474.5 L600.2 473.9 L599.5 473.2 L598.7 472.5 L598.0 471.8 L597.2 471.1 L596.5 470.4 L595.8 469.7 L595.1 469.1 L594.3 468.4 L593.6 467.7 L592.9 467.0 L592.2 466.3 L591.5 465.6 L590.8 464.9 L590.0 464.2 L589.3 463.5 L588.6 462.8 L587.9 462.1 L587.2 461.4 L586.5 460.7 L585.9 460.0 L585.2 459.3 L584.5 458.6 L583.8 457.9 L583.1 457.2 L582.4 456.5 L581.8 455.8 L581.1 455.1 L580.4 454.4 L579.8 453.6 L579.1 452.9 L578.5 452.2 L577.8 451.5 L577.2 450.8 L576.5 450.1 L575.9 449.4 L575.3 448.7 L574.6 447.9 L574.0 447.2 L573.4 446.5 L572.8 445.8 L572.1 445.1 L571.5 444.4 L570.9 443.6 L570.3 442.9 L569.7 442.2 L569.1 441.5 L568.5 440.8 L567.9 440.0 L567.4 439.3 L566.8 438.6 L566.2 437.9 L565.6 437.1 L565.1 436.4 L564.5 435.7 L564.0 435.0 L563.4 434.2 L562.9 433.5 L562.3 432.8 L561.8 432.1 L561.2 431.3 L560.7 430.6 L560.2 429.9 L559.7 429.1 L559.1 428.4 L558.6 427.7 L558.1 427.0 L557.6 426.2 L557.1 425.5 L556.6 424.8 L556.2 424.0 L555.7 423.3 L555.2 422.6 L554.7 421.8 L554.3 421.1 L553.8 420.4 L553.3 419.6 L552.9 418.9 L552.4 418.1 L552.0 417.4 L551.6 416.7 L551.1 415.9 L550.7 415.2 L550.3 414.5 L549.8 413.7 L549.4 413.0 L549.0 412.2 L548.6 411.5 L548.2 410.8 L547.8 410.0 L547.5 409.3 L547.1 408.5 L546.7 407.8 L546.3 407.1 L546.0 406.3 L545.6 405.6 L545.2 404.8 L544.9 404.1 L544.6 403.4 L544.2 402.6 L543.9 401.9 L543.6 401.1 L543.2 400.4 L542.9 399.6 L542.6 398.9 L542.3 398.1 L542.0 397.4 L541.7 396.7 L541.4 395.9 L541.1 395.2 L540.8 394.4 L540.6 393.7 L540.3 392.9 L540.0 392.2 L539.8 391.4 L539.5 390.7 L539.3 389.9 L539.1 389.2 L538.8 388.4 L538.6 387.7 L538.4 387.0 L538.2 386.2 L537.9 385.5 L537.7 384.7 L537.5 384.0 L537.3 383.2 L537.2 382.5 L537.0 381.7 L536.8 381.0 L536.6 380.2 L536.5 379.5 L536.3 378.7 L536.2 378.0 L536.0 377.2 L535.9 376.5 L535.7 375.7 L535.6 375.0 L535.5 374.2 L535.4 373.5 L535.2 372.7 L535.1 371.9 L535.0 371.2 L534.9 370.4 L534.8 369.7 L534.8 368.9 L534.7 368.2 L534.6 367.4 L534.6 366.7 L534.5 365.9 L534.4 365.2 L534.4 364.4 L534.3 363.7 L534.3 362.9 L534.3 362.2 L534.3 361.4 L534.2 360.7 L534.2 359.9 L534.2 359.2 L534.2 358.4 L534.2 357.6 L534.2 356.9 L534.3 356.1 L534.3 355.4 L534.3 354.6 L534.3 353.9 L534.4 353.1 L534.4 352.4 L534.5 351.6 L534.5 350.9 L534.6 350.1 L534.7 349.3 L534.8 348.6 L534.8 347.8 L534.9 347.1 L535.0 346.3 L535.1 345.6 L535.2 344.8 L535.3 344.1 L535.5 343.3 L535.6 342.5 L535.7 341.8 L535.9 341.0 L536.0 340.3 L536.1 339.5 L536.3 338.8 L536.5 338.0 L536.6 337.2 L536.8 336.5 L537.0 335.7 L537.2 335.0 L537.4 334.2 L537.5 333.5 L537.7 332.7 L538.0 332.0 L538.2 331.2 L538.4 330.4 L538.6 329.7 L538.9 328.9 L539.1 328.2 L539.3 327.4 L539.6 326.7 L539.8 325.9 L540.1 325.1 L540.4 324.4 L540.6 323.6 L540.9 322.9 L541.2 322.1 L541.5 321.4 L541.8 320.6 L542.1 319.8 L542.4 319.1 L542.7 318.3 L543.0 317.6 L543.4 316.8 L543.7 316.1 L544.0 315.3 L544.4 314.6 L544.7 313.8 L545.1 313.0 L545.5 312.3 L545.8 311.5 L546.2 310.8 L546.6 310.0 L547.0 309.3 L547.4 308.5 L547.8 307.7 L548.2 307.0 L548.6 306.2 L549.0 305.5 L549.4 304.7 L549.8 304.0 L550.3 303.2 L550.7 302.5 L551.1 301.7 L551.6 300.9 L552.0 300.2 L552.5 299.4 L553.0 298.7 L553.4 297.9 L553.9 297.2 L554.4 296.4 L554.9 295.6 L555.4 294.9 L555.9 294.1 L556.4 293.4 L556.9 292.6 L557.4 291.9 L557.9 291.1 L558.5 290.4 L559.0 289.6 L559.5 288.9 L560.1 288.1 L560.6 287.3 L561.2 286.6 L561.8 285.8 L562.3 285.1 L562.9 284.3 L563.5 283.6 L564.1 282.8 L564.6 282.1 L565.2 281.3 L565.8 280.6 L566.4 279.8 L567.1 279.0 L567.7 278.3 L568.3 277.5 L568.9 276.8 L569.6 276.0 L570.2 275.3 L570.8 274.5 L571.5 273.8 L572.1 273.0 L572.8 272.3 L573.5 271.5 L574.1 270.8 L574.8 270.0 L575.5 269.3 L576.2 268.5 L576.9 267.8 L577.6 267.0 L578.3 266.3 L579.0 265.5 L579.7 264.8 L580.4 264.0 L581.1 263.2 L581.8 262.5 L582.6 261.7 L583.3 261.0 L584.0 260.2 L584.8 259.5 L585.5 258.7 L586.3 258.0 L587.1 257.3 L587.8 256.5 L588.6 255.8 L589.4 255.0 L590.2 254.3 L590.9 253.5 L591.7 252.8 L592.5 252.0 L593.3 251.3 L594.1 250.5 L594.9 249.8 L595.8 249.0 L596.6 248.3 L597.4 247.5 L598.2 246.8 L599.1 246.0 L599.9 245.3 L600.7 244.5 L601.6 243.8 L602.4 243.1 L603.3 242.3 L604.2 241.6 L605.0 240.8 L605.9 240.1 L606.8 239.3 L607.7 238.6 L608.5 237.8 L609.4 237.1 L610.3 236.4 L611.2 235.6 L612.1 234.9 L613.0 234.1 L613.9 233.4 L614.8 232.7 L615.8 231.9 L616.7 231.2 L617.6 230.4 L618.5 229.7 L619.5 229.0 L620.4 228.2 L621.4 227.5 L622.3 226.7 L623.3 226.0 L624.2 225.3 L625.2 224.5 L626.1 223.8 L627.1 223.1 L628.1 222.3 L629.1 221.6 L630.0 220.8 L631.0 220.1 L632.0 219.4 L633.0 218.6 L634.0 217.9 L635.0 217.2 L636.0 216.4 L637.0 215.7 L638.0 215.0 L639.0 214.2 L640.0 213.5 L641.1 212.8 L642.1 212.0 L643.1 211.3 L644.2 210.6 L645.2 209.9 L646.2 209.1 L647.3 208.4 L648.3 207.7 L649.4 206.9 L650.4 206.2 L651.5 205.5 L652.5 204.8 L653.6 204.0 L654.7 203.3 L655.7 202.6 L656.8 201.9 L657.9 201.2 L658.9 200.4 L660.0 199.7 L661.1 199.0 L662.2 198.3 L663.3 197.5 L664.4 196.8 M1376.0 300.0 L1376.2 300.7 L1376.4 301.3 L1376.6 302.0 L1376.8 302.6 L1377.0 303.3 L1377.1 303.9 L1377.3 304.6 L1377.5 305.2 L1377.6 305.9 L1377.8 306.5 L1377.9 307.2 L1378.1 307.8 L1378.2 308.5 L1378.3 309.1 L1378.4 309.8 L1378.6 310.4 L1378.7 311.1 L1378.8 311.7 L1378.9 312.4 L1379.0 313.0 L1379.0 313.7 L1379.1 314.3 L1379.2 315.0 L1379.3 315.6 L1379.3 316.3 L1379.4 316.9 L1379.4 317.6 L1379.5 318.2 L1379.5 318.9 L1379.6 319.5 L1379.6 320.2 L1379.6 320.8 L1379.6 321.5 L1379.6 322.2 L1379.7 322.8 L1379.7 323.5 L1379.6 324.1 L1379.6 324.8 L1379.6 325.4 L1379.6 326.1 L1379.6 326.7 L1379.5 327.4 L1379.5 328.0 L1379.4 328.7 L1379.4 329.3 L1379.3 330.0 L1379.3 330.6 L1379.2 331.3 L1379.1 331.9 L1379.0 332.6 L1378.9 333.2 L1378.9 333.9 L1378.8 334.5 L1378.7 335.2 L1378.5 335.8 L1378.4 336.5 L1378.3 337.1 L1378.2 337.8 L1378.0 338.4 L1377.9 339.1 L1377.8 339.7 L1377.6 340.4 L1377.4 341.0 L1377.3 341.7 L1377.1 342.3 L1376.9 343.0 L1376.8 343.7 L1376.6 344.3 L1376.4 345.0 L1376.2 345.6 L1376.0 346.3 L1375.8 346.9 L1375.6 347.6 L1375.3 348.2 L1375.1 348.9 L1374.9 349.5 L1374.6 350.2 L1374.4 350.8 L1374.2 351.5 L1373.9 352.1 L1373.6 352.8 L1373.4 353.4 L1373.1 354.1 L1372.8 354.7 L1372.5 355.4 L1372.2 356.0 L1371.9 356.7 L1371.6 357.3 L1371.3 358.0 L1371.0 358.6 L1370.7 359.3 L1370.4 359.9 L1370.1 360.6 L1369.7 361.2 L1369.4 361.9 L1369.0 362.5 L1368.7 363.2 L1368.3 363.8 L1368.0 364.5 L1367.6 365.2 L1367.2 365.8 L1366.8 366.5 L1366.5 367.1 L1366.1 367.8 L1365.7 368.4 L1365.3 369.1 L1364.8 369.7 L1364.4 370.4 L1364.0 371.0 L1363.6 371.7 L1363.2 372.3 L1362.7 373.0 L1362.3 373.6 L1361.8 374.3 L1361.4 374.9 L1360.9 375.6 L1360.5 376.2 L1360.0 376.9 L1359.5 377.5 L1359.0 378.2 L1358.5 378.8 L1358.0 379.5 L1357.5 380.1 L1357.0 380.8 L1356.5 381.4 L1356.0 382.1 L1355.5 382.7 L1355.0 383.4 L1354.4 384.0 L1353.9 384.7 L1353.4 385.3 L1352.8 386.0 L1352.3 386.6 L1351.7 387.3 L1351.1 388.0 L1350.6 388.6 L1350.0 389.3 L1349.4 389.9 L1348.8 390.6 L1348.2 391.2 L1347.6 391.9 L1347.0 392.5 L1346.4 393.2 L1345.8 393.8 L1345.2 394.5 L1344.6 395.1 L1343.9 395.8 L1343.3 396.4 L1342.7 397.1 L1342.0 397.7 L1341.4 398.4 L1340.7 399.0 L1340.0 399.7 L1339.4 400.3 L1338.7 401.0 L1338.0 401.6 L1337.3 402.3 L1336.7 402.9 L1336.0 403.6 L1335.3 404.2 L1334.6 404.9 L1333.9 405.5 L1333.1 406.2 L1332.4 406.8 L1331.7 407.5 L1331.0 408.1 L1330.2 408.8 L1329.5 409.4 L1328.7 410.1 L1328.0 410.8 L1327.2 411.4 L1326.5 412.1 L1325.7 412.7 L1324.9 413.4 L1324.2 414.0 L1323.4 414.7 L1322.6 415.3 L1321.8 416.0 L1321.0 416.6 L1320.2 417.3 L1319.4 417.9 L1318.6 418.6 L1317.8 419.2 L1316.9 419.9 L1316.1 420.5 L1315.3 421.2 L1314.4 421.8 L1313.6 422.5 L1312.7 423.1 L1311.9 423.8 L1311.0 424.4 L1310.2 425.1 L1309.3 425.7 L1308.4 426.4 L1307.6 427.0 L1306.7 427.7 L1305.8 428.3 L1304.9 429.0 L1304.0 429.6 L1303.1 430.3 L1302.2 430.9 L1301.3 431.6 L1300.4 432.2 L1299.4 432.9 L1298.5 433.5 L1297.6 434.2 L1296.6 434.9 L1295.7 435.5 L1294.7 436.2 L1293.8 436.8 L1292.8 437.5 L1291.9 438.1 L1290.9 438.8 L1289.9 439.4 L1289.0 440.1 L1288.0 440.7 L1287.0 441.4 L1286.0 442.0 L1285.0 442.7 L1284.0 443.3 L1283.0 444.0 L1282.0 444.6 L1281.0 445.3 L1280.0 445.9 L1279.0 446.6 L1277.9 447.2 L1276.9 447.9 L1275.9 448.5 L1274.8 449.2 L1273.8 449.8 L1272.8 450.5 L1271.7 451.1 L1270.6 451.8 L1269.6 452.4 L1268.5 453.1 L1267.4 453.7 L1266.4 454.4 L1265.3 455.0 L1264.2 455.7 L1263.1 456.3 L1262.0 457.0 L1260.9 457.6 L1259.8 458.3 L1258.7 458.9 L1257.6 459.6 L1256.5 460.2 L1255.4 460.9 L1254.3 461.6 L1253.1 462.2 L1252.0 462.9 L1250.9 463.5 L1249.7 464.2 L1248.6 464.8 L1247.4 465.5 L1246.3 466.1 L1245.1 466.8 L1244.0 467.4 L1242.8 468.1 L1241.6 468.7 L1240.5 469.4 L1239.3 470.0 L1238.1 470.7 L1236.9 471.3 L1235.7 472.0 L1234.5 472.6 L1233.3 473.3 L1232.1 473.9 L1230.9 474.6 L1229.7 475.2 L1228.5 475.9 L1227.3 476.5 L1226.1 477.2 L1224.8 477.8 L1223.6 478.5 L1222.4 479.1 L1221.1 479.8 L1219.9 480.4 L1218.7 481.1 L1217.4 481.7 L1216.2 482.4 L1214.9 483.0 L1213.6 483.7 L1212.4 484.3 L1211.1 485.0 L1209.8 485.6 L1208.6 486.3 L1207.3 486.9 L1206.0 487.6 L1204.7 488.2 L1203.4 488.9 L1202.1 489.5 L1200.8 490.2 L1199.5 490.8 L1198.2 491.5 L1196.9 492.1 L1195.6 492.8 L1194.3 493.4 L1193.0 494.1 L1191.7 494.7 L1190.3 495.4 L1189.0 496.0 L1187.7 496.7 L1186.3 497.3 L1185.0 498.0 L1183.7 498.7 L1182.3 499.3 L1181.0 500.0 L1179.6 500.6 L1178.3 501.3 L1176.9 501.9 L1175.5 502.6 L1174.2 503.2 L1172.8 503.9 L1171.4 504.5 L1170.0 505.2 L1168.7 505.8 L1167.3 506.5 L1165.9 507.1 L1164.5 507.8 L1163.1 508.4 L1161.7 509.1 L1160.3 509.7 L1158.9 510.4 L1157.5 511.0 L1156.1 511.7 L1154.7 512.3 L1153.3 513.0 L1151.9 513.6 L1150.5 514.3 L1149.0 514.9 L1147.6 515.6 L1146.2 516.2 L1144.8 516.9 L1143.3 517.5 L1141.9 518.2 L1140.4 518.8 L1139.0 519.5 L1137.6 520.1 L1136.1 520.8 L1134.7 521.4 L1133.2 522.1 L1131.8 522.7 L1130.3 523.4 L1128.8 524.0 L1127.4 524.7 L1125.9 525.3 L1124.4 526.0 L1123.0 526.6 L1121.5 527.3 L1120.0 527.9 L1118.5 528.6 L1117.0 529.2 L1115.6 529.9 L1114.1 530.5 L1112.6 531.2 L1111.1 531.8 L1109.6 532.5 L1108.1 533.1 L1106.6 533.8 L1105.1 534.4 L1103.6 535.0 L1102.1 535.7 L1100.6 536.3 L1099.1 537.0 L1097.6 537.6 L1096.0 538.3 L1094.5 538.9 L1093.0 539.6 L1091.5 540.2 L1090.0 540.9 L1088.4 541.5 L1086.9 542.2 L1085.4 542.8 L1083.8 543.5 L1082.3 544.1 L1080.8 544.8 L1079.2 545.4 L1077.7 546.1 L1076.1 546.7 L1074.6 547.4 L1073.0 548.0 L1071.5 548.7 L1070.0 549.3 L1068.4 550.0 L1066.8 550.6 L1065.3 551.3 L1063.7 551.9 L1062.2 552.6 L1060.6 553.2 L1059.0 553.8 L1057.5 554.5 L1055.9 555.1 L1054.4 555.8 L1052.8 556.4 L1051.2 557.1 L1049.6 557.7 L1048.1 558.4 L1046.5 559.0 L1044.9 559.7 L1043.3 560.3 M1404.0 300.0 L1404.3 300.6 L1404.7 301.3 L1405.0 301.9 L1405.4 302.5 L1405.7 303.2 L1406.0 303.8 L1406.3 304.4 L1406.6 305.0 L1406.9 305.7 L1407.2 306.3 L1407.5 306.9 L1407.8 307.6 L1408.1 308.2 L1408.3 308.8 L1408.6 309.5 L1408.9 310.1 L1409.1 310.7 L1409.4 311.4 L1409.6 312.0 L1409.8 312.6 L1410.1 313.3 L1410.3 313.9 L1410.5 314.5 L1410.7 315.1 L1410.9 315.8 L1411.1 316.4 L1411.3 317.0 L1411.5 317.7 L1411.7 318.3 L1411.9 318.9 L1412.1 319.6 L1412.2 320.2 L1412.4 320.8 L1412.6 321.5 L1412.7 322.1 L1412.9 322.7 L1413.0 323.3 L1413.1 324.0 L1413.3 324.6 L1413.4 325.2 L1413.5 325.9 L1413.6 326.5 L1413.7 327.1 L1413.8 327.8 L1413.9 328.4 L1414.0 329.0 L1414.1 329.7 L1414.1 330.3 L1414.2 330.9 L1414.3 331.6 L1414.3 332.2 L1414.4 332.8 L1414.4 333.4 L1414.5 334.1 L1414.5 334.7 L1414.5 335.3 L1414.5 336.0 L1414.6 336.6 L1414.6 337.2 L1414.6 337.9 L1414.6 338.5 L1414.6 339.1 L1414.5 339.8 L1414.5 340.4 L1414.5 341.0 L1414.5 341.6 L1414.4 342.3 L1414.4 342.9 L1414.3 343.5 L1414.3 344.2 L1414.2 344.8 L1414.2 345.4 L1414.1 346.1 L1414.0 346.7 L1413.9 347.3 L1413.8 348.0 L1413.7 348.6 L1413.6 349.2 L1413.5 349.8 L1413.4 350.5 L1413.3 351.1 L1413.2 351.7 L1413.0 352.4 L1412.9 353.0 L1412.8 353.6 L1412.6 354.3 L1412.5 354.9 L1412.3 355.5 L1412.1 356.2 L1412.0 356.8 L1411.8 357.4 L1411.6 358.0 L1411.4 358.7 L1411.2 359.3 L1411.0 359.9 L1410.8 360.6 L1410.6 361.2 L1410.4 361.8 L1410.2 362.5 L1409.9 363.1 L1409.7 363.7 L1409.5 364.3 L1409.2 365.0 L1409.0 365.6 L1408.7 366.2 L1408.5 366.9 L1408.2 367.5 L1407.9 368.1 L1407.6 368.8 L1407.3 369.4 L1407.1 370.0 L1406.8 370.6 L1406.5 371.3 L1406.1 371.9 L1405.8 372.5 L1405.5 373.2 L1405.2 373.8 L1404.8 374.4 L1404.5 375.0 L1404.2 375.7 L1403.8 376.3 L1403.5 376.9 L1403.1 377.6 L1402.7 378.2 L1402.4 378.8 L1402.0 379.4 L1401.6 380.1 L1401.2 380.7 L1400.8 381.3 L1400.4 382.0 L1400.0 382.6 L1399.6 383.2 L1399.2 383.8 L1398.8 384.5 L1398.3 385.1 L1397.9 385.7 L1397.5 386.4 L1397.0 387.0 L1396.6 387.6 L1396.1 388.2 L1395.7 388.9 L1395.2 389.5 L1394.7 390.1 L1394.3 390.8 L1393.8 391.4 L1393.3 392.0 L1392.8 392.6 L1392.3 393.3 L1391.8 393.9 L1391.3 394.5 L1390.8 395.1 L1390.2 395.8 L1389.7 396.4 L1389.2 397.0 L1388.6 397.7 L1388.1 398.3 L1387.6 398.9 L1387.0 399.5 L1386.4 400.2 L1385.9 400.8 L1385.3 401.4 L1384.7 402.0 L1384.2 402.7 L1383.6 403.3 L1383.0 403.9 L1382.4 404.5 L1381.8 405.2 L1381.2 405.8 L1380.6 406.4 L1380.0 407.1 L1379.3 407.7 L1378.7 408.3 L1378.1 408.9 L1377.4 409.6 L1376.8 410.2 L1376.1 410.8 L1375.5 411.4 L1374.8 412.1 L1374.2 412.7 L1373.5 413.3 L1372.8 413.9 L1372.1 414.6 L1371.5 415.2 L1370.8 415.8 L1370.1 416.4 L1369.4 417.1 L1368.7 417.7 L1368.0 418.3 L1367.2 418.9 L1366.5 419.5 L1365.8 420.2 L1365.1 420.8 L1364.3 421.4 L1363.6 422.0 L1362.8 422.7 L1362.1 423.3 L1361.3 423.9 L1360.6 424.5 L1359.8 425.2 L1359.1 425.8 L1358.3 426.4 L1357.5 427.0 L1356.7 427.6 L1355.9 428.3 L1355.1 428.9 L1354.3 429.5 L1353.5 430.1 L1352.7 430.8 L1351.9 431.4 L1351.1 432.0 L1350.3 432.6 L1349.4 433.2 L1348.6 433.9 L1347.8 434.5 L1346.9 435.1 L1346.1 435.7 L1345.2 436.3 L1344.4 437.0 L1343.5 437.6 L1342.7 438.2 L1341.8 438.8 L1340.9 439.4 L1340.0 440.1 L1339.2 440.7 L1338.3 441.3 L1337.4 441.9 L1336.5 442.5 L1335.6 443.2 L1334.7 443.8 L1333.8 444.4 L1332.9 445.0 L1331.9 445.6 L1331.0 446.2 L1330.1 446.9 L1329.2 447.5 L1328.2 448.1 L1327.3 448.7 L1326.3 449.3 L1325.4 449.9 L1324.4 450.6 L1323.5 451.2 L1322.5 451.8 L1321.6 452.4 L1320.6 453.0 L1319.6 453.6 L1318.6 454.3 L1317.7 454.9 L1316.7 455.5 L1315.7 456.1 L1314.7 456.7 L1313.7 457.3 L1312.7 457.9 L1311.7 458.6 L1310.7 459.2 L1309.7 459.8 L1308.6 460.4 L1307.6 461.0 L1306.6 461.6 L1305.6 462.2 L1304.5 462.8 L1303.5 463.4 L1302.5 464.1 L1301.4 464.7 L1300.4 465.3 L1299.3 465.9 L1298.3 466.5 L1297.2 467.1 L1296.1 467.7 L1295.1 468.3 L1294.0 468.9 L1292.9 469.5 L1291.9 470.2 L1290.8 470.8 L1289.7 471.4 L1288.6 472.0 L1287.5 472.6 L1286.4 473.2 L1285.3 473.8 L1284.2 474.4 L1283.1 475.0 L1282.0 475.6 L1280.9 476.2 L1279.8 476.8 L1278.7 477.4 L1277.6 478.0 L1276.4 478.6 L1275.3 479.2 L1274.2 479.8 L1273.0 480.4 L1271.9 481.0 L1270.8 481.6 L1269.6 482.2 L1268.5 482.8 L1267.3 483.4 L1266.2 484.0 L1265.0 484.6 L1263.9 485.2 L1262.7 485.8 L1261.6 486.4 L1260.4 487.0 L1259.3 487.6 L1258.1 488.2 L1256.9 488.8 L1255.7 489.4 L1254.6 490.0 L1253.4 490.6 L1252.2 491.2 L1251.0 491.8 L1249.8 492.4 L1248.7 493.0 L1247.5 493.6 L1246.3 494.2 L1245.1 494.8 L1243.9 495.4 L1242.7 495.9 L1241.5 496.5 L1240.3 497.1 L1239.1 497.7 L1237.9 498.3 L1236.7 498.9 L1235.5 499.5 L1234.3 500.1 L1233.1 500.6 L1231.8 501.2 L1230.6 501.8 L1229.4 502.4 L1228.2 503.0 L1227.0 503.6 L1225.8 504.1 L1224.5 504.7 L1223.3 505.3 M1410.0 356.0 L1409.9 356.6 L1409.8 357.2 L1409.8 357.8 L1409.7 358.4 L1409.6 359.0 L1409.5 359.6 L1409.3 360.2 L1409.2 360.8 L1409.1 361.4 L1409.0 362.0 L1408.9 362.6 L1408.7 363.3 L1408.6 363.9 L1408.4 364.5 L1408.3 365.1 L1408.1 365.7 L1408.0 366.3 L1407.8 366.9 L1407.6 367.5 L1407.5 368.1 L1407.3 368.7 L1407.1 369.3 L1406.9 369.9 L1406.7 370.5 L1406.5 371.1 L1406.3 371.7 L1406.1 372.3 L1405.8 372.9 L1405.6 373.5 L1405.4 374.1 L1405.2 374.7 L1404.9 375.3 L1404.7 375.9 L1404.4 376.5 L1404.2 377.1 L1403.9 377.7 L1403.6 378.3 L1403.4 378.9 L1403.1 379.5 L1402.8 380.1 L1402.5 380.7 L1402.2 381.3 L1402.0 381.9 L1401.7 382.5 L1401.3 383.1 L1401.0 383.7 L1400.7 384.3 L1400.4 384.9 L1400.1 385.5 L1399.7 386.1 L1399.4 386.7 L1399.1 387.3 L1398.7 387.9 L1398.4 388.5 L1398.0 389.1 L1397.7 389.7 L1397.3 390.3 L1396.9 390.9 L1396.5 391.5 L1396.2 392.1 L1395.8 392.7 L1395.4 393.3 L1395.0 393.9 L1394.6 394.5 L1394.2 395.1 L1393.8 395.7 L1393.4 396.3 L1392.9 396.9 L1392.5 397.5 L1392.1 398.1 L1391.6 398.7 L1391.2 399.3 L1390.8 399.9 L1390.3 400.5 L1389.9 401.1 L1389.4 401.7 L1388.9 402.3 L1388.5 402.9 L1388.0 403.5 L1387.5 404.1 L1387.0 404.7 L1386.6 405.3 L1386.1 405.9 L1385.6 406.4 L1385.1 407.0 L1384.6 407.6 L1384.1 408.2 L1383.5 408.8 L1383.0 409.4 L1382.5 410.0 L1382.0 410.6 L1381.4 411.2 L1380.9 411.8 L1380.4 412.4 L1379.8 413.0 L1379.3 413.6 L1378.7 414.2 L1378.1 414.8 L1377.6 415.3 L1377.0 415.9 L1376.4 416.5 L1375.9 417.1 L1375.3 417.7 L1374.7 418.3 L1374.1 418.9 L1373.5 419.5 L1372.9 420.1 L1372.3 420.7 L1371.7 421.3 L1371.1 421.8 L1370.5 422.4 L1369.8 423.0 L1369.2 423.6 L1368.6 424.2 L1367.9 424.8 L1367.3 425.4 L1366.7 426.0 L1366.0 426.5 L1365.4 427.1 L1364.7 427.7 L1364.1 428.3 L1363.4 428.9 L1362.7 429.5 L1362.1 430.1 L1361.4 430.6 L1360.7 431.2 L1360.0 431.8 L1359.3 432.4 L1358.6 433.0 L1357.9 433.6 L1357.2 434.1 L1356.5 434.7 L1355.8 435.3 L1355.1 435.9 L1354.4 436.5 L1353.7 437.1 L1353.0 437.6 L1352.2 438.2 L1351.5 438.8 L1350.8 439.4 L1350.0 440.0 L1349.3 440.5 L1348.6 441.1 L1347.8 441.7 L1347.1 442.3 L1346.3 442.9 L1345.6 443.4 L1344.8 444.0 L1344.0 444.6 L1343.3 445.2 L1342.5 445.7 L1341.7 446.3 L1340.9 446.9 L1340.1 447.5 L1339.4 448.0 L1338.6 448.6 L1337.8 449.2 L1337.0 449.8 L1336.2 450.3 L1335.4 450.9 L1334.6 451.5 L1333.8 452.0 L1333.0 452.6 L1332.1 453.2 L1331.3 453.8 L1330.5 454.3 L1329.7 454.9 L1328.8 455.5 L1328.0 456.0 L1327.2 456.6 L1326.3 457.2 L1325.5 457.7 L1324.7 458.3 L1323.8 458.9 L1323.0 459.4 L1322.1 460.0 L1321.3 460.6 L1320.4 461.1 L1319.6 461.7 L1318.7 462.3 L1317.8 462.8 L1317.0 463.4 L1316.1 463.9 L1315.2 464.5 L1314.3 465.1 L1313.5 465.6 L1312.6 466.2 L1311.7 466.7 L1310.8 467.3 L1309.9 467.8 L1309.1 468.4 L1308.2 469.0 L1307.3 469.5 L1306.4 470.1 L1305.5 470.6 L1304.6 471.2 L1303.7 471.7 L1302.8 472.3 L1301.9 472.8 L1301.0 473.4 L1300.1 473.9 L1299.1 474.5 L1298.2 475.0 M1468.0 336.0 L1467.8 336.7 L1467.7 337.3 L1467.5 338.0 L1467.3 338.6 L1467.1 339.3 L1466.9 339.9 L1466.7 340.6 L1466.5 341.2 L1466.3 341.9 L1466.1 342.5 L1465.9 343.2 L1465.6 343.8 L1465.4 344.5 L1465.1 345.1 L1464.9 345.8 L1464.6 346.4 L1464.3 347.1 L1464.1 347.7 L1463.8 348.4 L1463.5 349.0 L1463.2 349.7 L1462.9 350.3 L1462.6 351.0 L1462.3 351.6 L1461.9 352.3 L1461.6 353.0 L1461.3 353.6 L1460.9 354.3 L1460.6 354.9 L1460.2 355.6 L1459.8 356.2 L1459.5 356.9 L1459.1 357.5 L1458.7 358.2 L1458.3 358.8 L1457.9 359.5 L1457.5 360.1 L1457.1 360.8 L1456.7 361.4 L1456.2 362.1 L1455.8 362.7 L1455.4 363.4 L1454.9 364.0 L1454.5 364.7 L1454.0 365.3 L1453.5 366.0 L1453.1 366.6 L1452.6 367.3 L1452.1 367.9 L1451.6 368.6 L1451.1 369.2 L1450.6 369.9 L1450.1 370.6 L1449.6 371.2 L1449.0 371.9 L1448.5 372.5 L1448.0 373.2 L1447.4 373.8 L1446.9 374.5 L1446.3 375.1 L1445.7 375.8 L1445.2 376.4 L1444.6 377.1 L1444.0 377.7 L1443.4 378.4 L1442.8 379.0 L1442.2 379.7 L1441.6 380.3 L1441.0 381.0 L1440.3 381.6 L1439.7 382.3 L1439.1 382.9 L1438.4 383.6 L1437.8 384.2 L1437.1 384.9 L1436.4 385.5 L1435.8 386.2 L1435.1 386.8 L1434.4 387.5 L1433.7 388.2 L1433.0 388.8 L1432.3 389.5 L1431.6 390.1 L1430.9 390.8 L1430.1 391.4 L1429.4 392.1 L1428.7 392.7 L1427.9 393.4 L1427.2 394.0 L1426.4 394.7 L1425.7 395.3 L1424.9 396.0 L1424.1 396.6 L1423.3 397.3 L1422.5 397.9 L1421.7 398.6 L1420.9 399.2 L1420.1 399.9 L1419.3 400.5 L1418.5 401.2 L1417.7 401.8 L1416.8 402.5 L1416.0 403.1 L1415.2 403.8 L1414.3 404.5 L1413.5 405.1 L1412.6 405.8 L1411.7 406.4 L1410.8 407.1 L1410.0 407.7 L1409.1 408.4 L1408.2 409.0 L1407.3 409.7 L1406.4 410.3 L1405.5 411.0 L1404.5 411.6 L1403.6 412.3 L1402.7 412.9 L1401.7 413.6 L1400.8 414.2 L1399.8 414.9 L1398.9 415.5 L1397.9 416.2 L1397.0 416.8 L1396.0 417.5 L1395.0 418.1 L1394.0 418.8 L1393.0 419.4 L1392.0 420.1 L1391.0 420.7 L1390.0 421.4 L1389.0 422.1 L1388.0 422.7 L1387.0 423.4 L1385.9 424.0 L1384.9 424.7 L1383.8 425.3 L1382.8 426.0 L1381.7 426.6 L1380.7 427.3 L1379.6 427.9 L1378.5 428.6 L1377.4 429.2 L1376.3 429.9 L1375.3 430.5 L1374.2 431.2 L1373.1 431.8 L1371.9 432.5 L1370.8 433.1 L1369.7 433.8 L1368.6 434.4 L1367.4 435.1 L1366.3 435.7 L1365.2 436.4 L1364.0 437.0 L1362.9 437.7 L1361.7 438.4 L1360.5 439.0 L1359.4 439.7 L1358.2 440.3 L1357.0 441.0 L1355.8 441.6 L1354.6 442.3 L1353.4 442.9 L1352.2 443.6 L1351.0 444.2 L1349.8 444.9 L1348.6 445.5 L1347.3 446.2 L1346.1 446.8 L1344.9 447.5 L1343.6 448.1 L1342.4 448.8 L1341.1 449.4 L1339.9 450.1 L1338.6 450.7 L1337.3 451.4 L1336.1 452.0 L1334.8 452.7 L1333.5 453.3 L1332.2 454.0 L1330.9 454.6 L1329.6 455.3 L1328.3 456.0 L1327.0 456.6 L1325.7 457.3 L1324.3 457.9 L1323.0 458.6 L1321.7 459.2 L1320.4 459.9 L1319.0 460.5 L1317.7 461.2 L1316.3 461.8 L1315.0 462.5 L1313.6 463.1 L1312.2 463.8 L1310.8 464.4 L1309.5 465.1 L1308.1 465.7 L1306.7 466.4 L1305.3 467.0 L1303.9 467.7 L1302.5 468.3 L1301.1 469.0 L1299.7 469.6 L1298.3 470.3 L1296.8 470.9 L1295.4 471.6 L1294.0 472.2 L1292.6 472.9 L1291.1 473.6 L1289.7 474.2 L1288.2 474.9 L1286.8 475.5 L1285.3 476.2 L1283.8 476.8 L1282.4 477.5 L1280.9 478.1 L1279.4 478.8 L1277.9 479.4 L1276.4 480.1 L1275.0 480.7 L1273.5 481.4 L1272.0 482.0 L1270.4 482.7 L1268.9 483.3 L1267.4 484.0 L1265.9 484.6 L1264.4 485.3 L1262.9 485.9 L1261.3 486.6 L1259.8 487.2 L1258.2 487.9 L1256.7 488.5 L1255.1 489.2 L1253.6 489.8 L1252.0 490.5 L1250.5 491.2 L1248.9 491.8 L1247.3 492.5 L1245.8 493.1 L1244.2 493.8 L1242.6 494.4 L1241.0 495.1 L1239.4 495.7 L1237.8 496.4 L1236.2 497.0 L1234.6 497.7 L1233.0 498.3 L1231.4 499.0 L1229.8 499.6 L1228.2 500.3 L1226.5 500.9 L1224.9 501.6 L1223.3 502.2 L1221.6 502.9 L1220.0 503.5 L1218.4 504.2 L1216.7 504.8 L1215.1 505.5 L1213.4 506.1 L1211.7 506.8 L1210.1 507.4 L1208.4 508.1 L1206.7 508.7 L1205.1 509.4 L1203.4 510.1 L1201.7 510.7 L1200.0 511.4 L1198.3 512.0 L1196.6 512.7 L1194.9 513.3 L1193.2 514.0 L1191.5 514.6 L1189.8 515.3 L1188.1 515.9 L1186.4 516.6 L1184.7 517.2 L1183.0 517.9 L1181.3 518.5 L1179.5 519.2 L1177.8 519.8 L1176.1 520.5 L1174.3 521.1 L1172.6 521.8 L1170.8 522.4 L1169.1 523.1 L1167.3 523.7 L1165.6 524.4 L1163.8 525.0 L1162.1 525.7 L1160.3 526.3 L1158.5 527.0 L1156.8 527.6 L1155.0 528.3 L1153.2 529.0 L1151.4 529.6 L1149.7 530.3 L1147.9 530.9 L1146.1 531.6 L1144.3 532.2 L1142.5 532.9 L1140.7 533.5 L1138.9 534.2 L1137.1 534.8 L1135.3 535.5 L1133.5 536.1 L1131.7 536.8 L1129.9 537.4 L1128.1 538.1 L1126.2 538.7 L1124.4 539.4 L1122.6 540.0 L1120.8 540.7 L1118.9 541.3 L1117.1 542.0 L1115.3 542.6 L1113.4 543.3 L1111.6 543.9 L1109.8 544.6 L1107.9 545.2 L1106.1 545.9 L1104.2 546.5 L1102.4 547.2 L1100.5 547.8 L1098.6 548.5 L1096.8 549.1 L1094.9 549.8 L1093.1 550.4 L1091.2 551.1 L1089.3 551.8 L1087.5 552.4 L1085.6 553.1 L1083.7 553.7 L1081.8 554.4 L1080.0 555.0 L1078.1 555.7 L1076.2 556.3 L1074.3 557.0 L1072.4 557.6 L1070.5 558.3 L1068.6 558.9 L1066.7 559.6 L1064.8 560.2 L1062.9 560.9 L1061.0 561.5 L1059.1 562.2 L1057.2 562.8 L1055.3 563.5 L1053.4 564.1 L1051.5 564.8 L1049.6 565.4 L1047.7 566.1 L1045.8 566.7 L1043.9 567.4 L1042.0 568.0 L1040.0 568.7 L1038.1 569.3 L1036.2 570.0 L1034.3 570.6 L1032.3 571.3 L1030.4 571.9 L1028.5 572.6 L1026.6 573.2 L1024.6 573.9 L1022.7 574.5 L1020.8 575.2 L1018.8 575.8 L1016.9 576.5 L1015.0 577.1 L1013.0 577.8 L1011.1 578.4 L1009.1 579.1 L1007.2 579.7 L1005.3 580.4 L1003.3 581.0 L1001.4 581.7 L999.4 582.3 L997.5 583.0 L995.5 583.6 L993.6 584.3 L991.6 584.9 L989.7 585.6 M1446.0 350.0 L1445.7 350.7 L1445.3 351.3 L1445.0 352.0 L1444.6 352.6 L1444.3 353.3 L1443.9 353.9 L1443.5 354.6 L1443.2 355.2 L1442.8 355.9 L1442.4 356.5 L1442.0 357.2 L1441.6 357.8 L1441.2 358.5 L1440.8 359.1 L1440.4 359.8 L1439.9 360.4 L1439.5 361.1 L1439.0 361.7 L1438.6 362.4 L1438.1 363.0 L1437.7 363.7 L1437.2 364.3 L1436.7 365.0 L1436.3 365.6 L1435.8 366.3 L1435.3 366.9 L1434.8 367.6 L1434.3 368.2 L1433.7 368.9 L1433.2 369.5 L1432.7 370.2 L1432.2 370.9 L1431.6 371.5 L1431.1 372.2 L1430.5 372.8 L1430.0 373.5 L1429.4 374.1 L1428.8 374.8 L1428.3 375.4 L1427.7 376.1 L1427.1 376.7 L1426.5 377.4 L1425.9 378.0 L1425.3 378.7 L1424.6 379.3 L1424.0 380.0 L1423.4 380.6 L1422.8 381.3 L1422.1 381.9 L1421.5 382.6 L1420.8 383.2 L1420.2 383.9 L1419.5 384.5 L1418.8 385.2 L1418.1 385.8 L1417.4 386.5 L1416.8 387.1 L1416.1 387.8 L1415.4 388.4 L1414.6 389.1 L1413.9 389.7 L1413.2 390.4 L1412.5 391.0 L1411.7 391.7 L1411.0 392.4 L1410.2 393.0 L1409.5 393.7 L1408.7 394.3 L1408.0 395.0 L1407.2 395.6 L1406.4 396.3 L1405.6 396.9 L1404.8 397.6 L1404.0 398.2 L1403.2 398.9 L1402.4 399.5 L1401.6 400.2 L1400.8 400.8 L1399.9 401.5 L1399.1 402.1 L1398.3 402.8 L1397.4 403.4 L1396.6 404.1 L1395.7 404.7 L1394.9 405.4 L1394.0 406.0 L1393.1 406.7 L1392.2 407.3 L1391.3 408.0 L1390.4 408.6 L1389.5 409.3 L1388.6 409.9 L1387.7 410.6 L1386.8 411.2 L1385.9 411.9 L1384.9 412.6 L1384.0 413.2 L1383.1 413.9 L1382.1 414.5 L1381.2 415.2 L1380.2 415.8 L1379.2 416.5 L1378.3 417.1 L1377.3 417.8 L1376.3 418.4 L1375.3 419.1 L1374.3 419.7 L1373.3 420.4 L1372.3 421.0 L1371.3 421.7 L1370.3 422.3 L1369.3 423.0 L1368.3 423.6 L1367.2 424.3 L1366.2 424.9 L1365.1 425.6 L1364.1 426.2 L1363.0 426.9 L1362.0 427.5 L1360.9 428.2 L1359.8 428.8 L1358.7 429.5 L1357.7 430.1 L1356.6 430.8 L1355.5 431.4 L1354.4 432.1 L1353.3 432.7 L1352.2 433.4 L1351.0 434.0 L1349.9 434.7 L1348.8 435.4 L1347.7 436.0 L1346.5 436.7 L1345.4 437.3 L1344.2 438.0 L1343.1 438.6 L1341.9 439.3 L1340.7 439.9 L1339.6 440.6 L1338.4 441.2 L1337.2 441.9 L1336.0 442.5 L1334.8 443.2 L1333.6 443.8 L1332.4 444.5 L1331.2 445.1 L1330.0 445.8 L1328.8 446.4 L1327.6 447.1 L1326.3 447.7 L1325.1 448.4 L1323.9 449.0 L1322.6 449.7 L1321.4 450.3 L1320.1 451.0 L1318.8 451.6 L1317.6 452.3 L1316.3 452.9 L1315.0 453.6 L1313.8 454.2 L1312.5 454.9 L1311.2 455.5 L1309.9 456.2 L1308.6 456.8 L1307.3 457.5 L1306.0 458.2 L1304.7 458.8 L1303.3 459.5 L1302.0 460.1 L1300.7 460.8 L1299.4 461.4 L1298.0 462.1 L1296.7 462.7 L1295.3 463.4 L1294.0 464.0 L1292.6 464.7 L1291.2 465.3 L1289.9 466.0 L1288.5 466.6 L1287.1 467.3 L1285.7 467.9 L1284.4 468.6 L1283.0 469.2 L1281.6 469.9 L1280.2 470.5 L1278.8 471.2 L1277.4 471.8 L1275.9 472.5 L1274.5 473.1 L1273.1 473.8 L1271.7 474.4 L1270.2 475.1 L1268.8 475.7 L1267.4 476.4 L1265.9 477.0 L1264.5 477.7 L1263.0 478.3 L1261.6 479.0 L1260.1 479.6 L1258.6 480.3 L1257.2 480.9 L1255.7 481.6 L1254.2 482.2 L1252.7 482.9 L1251.2 483.5 L1249.7 484.2 L1248.2 484.8 L1246.7 485.5 L1245.2 486.2 L1243.7 486.8 L1242.2 487.5 L1240.7 488.1 L1239.2 488.8 L1237.6 489.4 L1236.1 490.1 L1234.6 490.7 L1233.0 491.4 L1231.5 492.0 L1230.0 492.7 L1228.4 493.3 L1226.9 494.0 L1225.3 494.6 L1223.7 495.3 L1222.2 495.9 L1220.6 496.6 L1219.0 497.2 L1217.4 497.9 L1215.9 498.5 L1214.3 499.2 L1212.7 499.8 L1211.1 500.5 L1209.5 501.1 L1207.9 501.8 L1206.3 502.4 L1204.7 503.1 L1203.1 503.7 L1201.5 504.4 L1199.9 505.0 L1198.2 505.7 L1196.6 506.3 L1195.0 507.0 L1193.3 507.6 L1191.7 508.3 L1190.1 508.9 L1188.4 509.6 L1186.8 510.2 L1185.1 510.9 L1183.5 511.5 L1181.8 512.2 L1180.2 512.8 L1178.5 513.5 L1176.8 514.1 L1175.2 514.8 L1173.5 515.4 L1171.8 516.1 L1170.1 516.7 L1168.5 517.4 L1166.8 518.0 L1165.1 518.7 L1163.4 519.3 L1161.7 520.0 L1160.0 520.6 L1158.3 521.3 L1156.6 521.9 L1154.9 522.6 L1153.2 523.2 L1151.5 523.9 L1149.7 524.5 L1148.0 525.2 L1146.3 525.8 L1144.6 526.5 L1142.8 527.1 L1141.1 527.8 L1139.4 528.4 L1137.6 529.1 L1135.9 529.7 L1134.2 530.4 L1132.4 531.0 L1130.7 531.7 L1128.9 532.3 L1127.2 533.0 L1125.4 533.6 L1123.7 534.3 L1121.9 534.9 L1120.1 535.6 L1118.4 536.2 L1116.6 536.9 L1114.8 537.5 L1113.1 538.2 L1111.3 538.8 L1109.5 539.5 L1107.7 540.1 L1105.9 540.8 L1104.1 541.4 L1102.4 542.1 L1100.6 542.7 L1098.8 543.4 L1097.0 544.0 L1095.2 544.7 L1093.4 545.3 L1091.6 546.0 L1089.8 546.6 L1088.0 547.3 L1086.2 547.9 L1084.4 548.6 L1082.5 549.2 L1080.7 549.9 L1078.9 550.5 L1077.1 551.2 L1075.3 551.8 L1073.5 552.5 L1071.6 553.1 L1069.8 553.8 L1068.0 554.4 L1066.2 555.1 L1064.3 555.7 L1062.5 556.4 L1060.7 557.0 L1058.8 557.7 L1057.0 558.3 L1055.2 558.9 L1053.3 559.6 L1051.5 560.2 L1049.6 560.9 L1047.8 561.5 L1045.9 562.2 L1044.1 562.8 L1042.2 563.5 L1040.4 564.1 L1038.5 564.8 L1036.7 565.4 L1034.8 566.1 L1033.0 566.7 L1031.1 567.4 L1029.3 568.0 L1027.4 568.6 L1025.5 569.3 L1023.7 569.9 L1021.8 570.6 L1020.0 571.2 L1018.1 571.9 L1016.2 572.5 L1014.4 573.2 L1012.5 573.8 L1010.6 574.4 L1008.8 575.1 L1006.9 575.7 L1005.0 576.4 L1003.2 577.0 L1001.3 577.7 L999.4 578.3 L997.6 578.9 L995.7 579.6 L993.8 580.2 L992.0 580.9 L990.1 581.5 L988.2 582.1 L986.4 582.8 L984.5 583.4 L982.6 584.0 L980.8 584.7 L978.9 585.3 L977.1 586.0 L975.2 586.6 L973.3 587.2 L971.5 587.9 L969.6 588.5 L967.8 589.1 L965.9 589.7 L964.1 590.4 L962.2 591.0 L960.4 591.6 L958.6 592.2 L956.7 592.9 L954.9 593.5 L953.1 594.1 L951.2 594.7 L949.4 595.3 L947.6 595.9 L945.8 596.5 L944.0 597.1 L942.3 597.7 L940.5 598.3 L938.7 598.9 L937.0 599.5 L935.2 600.1 L933.5 600.7 L931.8 601.2 L930.2 601.8 L928.5 602.3 L926.9 602.9 L925.3 603.4 L923.7 603.9 L922.2 604.4 L920.8 604.8 L919.4 605.3 L918.0 605.7 L916.7 606.1 L915.5 606.4 L914.4 606.7 M381.8 248.6 L380.7 249.7 L379.6 250.7 L378.6 251.8 L377.5 252.9 L376.5 253.9 L375.5 255.0 L374.5 256.1 L373.5 257.1 L372.6 258.2 L371.6 259.3 L370.7 260.4 L369.8 261.4 L368.9 262.5 L368.0 263.6 L367.2 264.6 L366.3 265.7 L365.5 266.8 L364.7 267.9 L363.9 268.9 L363.2 270.0 L362.4 271.1 L361.7 272.1 L361.0 273.2 L360.3 274.3 L359.6 275.4 L358.9 276.4 L358.3 277.5 L357.7 278.6 L357.1 279.6 L356.5 280.7 L355.9 281.8 L355.4 282.9 L354.8 283.9 L354.3 285.0 L353.8 286.1 L353.3 287.1 L352.9 288.2 L352.4 289.3 L352.0 290.3 L351.6 291.4 L351.2 292.5 L350.8 293.6 L350.5 294.6 L350.1 295.7 L349.8 296.8 L349.5 297.8 L349.2 298.9 L349.0 300.0 L348.7 301.1 L348.5 302.1 L348.3 303.2 L348.1 304.3 L347.9 305.3 L347.8 306.4 L347.6 307.5 L347.5 308.6 L347.4 309.6 L347.3 310.7 L347.3 311.8 L347.2 312.8 L347.2 313.9 L347.2 315.0 L347.2 316.1 L347.2 317.1 L347.3 318.2 L347.3 319.3 L347.4 320.3 L347.5 321.4 L347.6 322.5 L347.8 323.6 L347.9 324.6 L348.1 325.7 L348.3 326.8 L348.5 327.8 L348.7 328.9 L349.0 330.0 L349.3 331.1 L349.5 332.1 L349.8 333.2 L350.2 334.3 L350.5 335.3 L350.9 336.4 L351.2 337.5 L351.6 338.6 L352.0 339.6 L352.5 340.7 L352.9 341.8 L353.4 342.8 L353.9 343.9 L354.4 345.0 L354.9 346.1 L355.4 347.1 L356.0 348.2 L356.5 349.3 L357.1 350.3 L357.7 351.4 L358.4 352.5 L359.0 353.6 L359.7 354.6 L360.4 355.7 L361.0 356.8 L361.8 357.8 L362.5 358.9 L363.2 360.0 L364.0 361.1 L364.8 362.1 L365.6 363.2 L366.4 364.3 L367.3 365.3 L368.1 366.4 L369.0 367.5 L369.9 368.5 L370.8 369.6 L371.7 370.7 L372.7 371.8 L373.6 372.8 L374.6 373.9 L375.6 375.0 L376.6 376.0 L377.6 377.1 L378.7 378.2 L379.8 379.3 L380.8 380.3 L381.9 381.4 L383.1 382.5 L384.2 383.5 L385.3 384.6 L386.5 385.7 L387.7 386.8 L388.9 387.8 L390.1 388.9 L391.3 390.0 L392.6 391.0 L393.9 392.1 L395.1 393.2 L396.5 394.3 L397.8 395.3 L399.1 396.4 L400.5 397.5 L401.8 398.5 L403.2 399.6 L404.6 400.7 L406.0 401.7 L407.5 402.8 L408.9 403.9 L410.4 405.0 L411.8 406.0 L413.3 407.1 L414.9 408.2 L416.4 409.2 L417.9 410.3 L419.5 411.4 L421.1 412.4 L422.7 413.5 L424.3 414.6 L425.9 415.7 L427.5 416.7 L429.2 417.8 L430.9 418.9 L432.5 419.9 L434.2 421.0 L436.0 422.1 L437.7 423.1 L439.4 424.2 L441.2 425.3 L443.0 426.4 L444.8 427.4 L446.6 428.5 L448.4 429.6 L450.2 430.6 L452.1 431.7 L454.0 432.8 L455.8 433.8 L457.7 434.9 L459.6 436.0 L461.6 437.1 L463.5 438.1 L465.5 439.2 L467.4 440.3 L469.4 441.3 L471.4 442.4 L473.4 443.5 L475.4 444.5 L477.5 445.6 L479.5 446.7 L481.6 447.7 L483.7 448.8 L485.7 449.9 L487.8 450.9 L490.0 452.0 L492.1 453.1 L494.2 454.2 L496.4 455.2 L498.6 456.3 L500.8 457.4 L503.0 458.4 L505.2 459.5 L507.4 460.6 L509.6 461.6 L511.9 462.7 L514.1 463.8 L516.4 464.8 L518.7 465.9 L521.0 467.0 L523.3 468.0 L525.6 469.1 L528.0 470.2 L530.3 471.2 L532.7 472.3 L535.0 473.4 L537.4 474.4 L539.8 475.5 L542.2 476.6 L544.6 477.6 L547.1 478.7 L549.5 479.8 L551.9 480.8 L554.4 481.9 L556.9 483.0 L559.4 484.0 L561.9 485.1 L564.4 486.2 L566.9 487.2 L569.4 488.3 L571.9 489.4 L574.5 490.4 L577.1 491.5 L579.6 492.6 L582.2 493.6 L584.8 494.7 L587.4 495.7 L590.0 496.8 L592.6 497.9 L595.2 498.9 L597.9 500.0 L600.5 501.1 L603.2 502.1 L605.8 503.2 L608.5 504.3 L611.2 505.3 L613.9 506.4 L616.6 507.4 L619.3 508.5 L622.0 509.6 L624.7 510.6 L627.5 511.7 L630.2 512.7 L633.0 513.8 L635.7 514.9 L638.5 515.9 L641.3 517.0 L644.0 518.0 L646.8 519.1 L649.6 520.2 L652.4 521.2 L655.2 522.3 L658.1 523.3 L660.9 524.4 L663.7 525.4 L666.6 526.5 L669.4 527.6 L672.2 528.6 L675.1 529.7 L678.0 530.7 L680.8 531.8 L683.7 532.8 L686.6 533.9 L689.5 534.9 L692.4 536.0 L695.3 537.0 L698.2 538.1 L701.1 539.1 L704.0 540.2 L706.9 541.2 L709.8 542.3 L712.7 543.3 L715.6 544.4 L718.6 545.4 L721.5 546.5 L724.4 547.5 L727.4 548.5 L730.3 549.6 L733.3 550.6 L736.2 551.7 L739.2 552.7 L742.1 553.7 L745.1 554.8 L748.0 555.8 L751.0 556.8 L753.9 557.9 L756.9 558.9 L759.8 559.9 L762.8 560.9 L765.7 562.0 L768.7 563.0 L771.6 564.0 L774.6 565.0 L777.5 566.0 L780.5 567.1 L783.4 568.1 M366.0 281.2 L365.5 282.2 L365.0 283.2 L364.5 284.2 L364.0 285.2 L363.6 286.2 L363.2 287.2 L362.7 288.2 L362.3 289.2 L361.9 290.2 L361.6 291.2 L361.2 292.2 L360.9 293.2 L360.5 294.2 L360.2 295.2 L359.9 296.2 L359.7 297.2 L359.4 298.2 L359.1 299.2 L358.9 300.2 L358.7 301.2 L358.5 302.1 L358.3 303.1 L358.1 304.1 L358.0 305.1 L357.8 306.1 L357.7 307.1 L357.6 308.1 L357.5 309.1 L357.4 310.1 L357.4 311.1 L357.3 312.1 L357.3 313.1 L357.3 314.1 L357.3 315.1 L357.3 316.1 L357.3 317.1 L357.4 318.1 L357.4 319.1 L357.5 320.1 L357.6 321.1 L357.7 322.1 L357.8 323.1 L358.0 324.1 L358.1 325.1 L358.3 326.1 L358.5 327.1 L358.7 328.1 L358.9 329.1 L359.1 330.1 L359.4 331.1 L359.6 332.1 L359.9 333.1 L360.2 334.1 L360.5 335.1 L360.9 336.1 L361.2 337.1 L361.5 338.1 L361.9 339.1 L362.3 340.1 L362.7 341.1 L363.1 342.1 L363.6 343.1 L364.0 344.1 L364.5 345.1 L365.0 346.1 L365.5 347.1 L366.0 348.1 L366.5 349.1 L367.0 350.1 L367.6 351.1 L368.2 352.1 L368.7 353.1 L369.3 354.1 L370.0 355.1 L370.6 356.1 L371.2 357.1 L371.9 358.1 L372.6 359.1 L373.3 360.1 L374.0 361.1 L374.7 362.1 L375.4 363.1 L376.2 364.1 L377.0 365.1 L377.7 366.1 L378.5 367.1 L379.4 368.1 L380.2 369.1 L381.0 370.0 L381.9 371.0 L382.8 372.0 L383.6 373.0 L384.6 374.0 L385.5 375.0 L386.4 376.0 L387.3 377.0 L388.3 378.0 L389.3 379.0 L390.3 380.0 L391.3 381.0 L392.3 382.0 L393.3 383.0 L394.4 384.0 L395.4 385.0 L396.5 386.0 L397.6 387.0 L398.7 388.0 L399.8 389.0 L401.0 390.0 L402.1 391.0 L403.3 392.0 L404.5 393.0 L405.7 394.0 L406.9 395.0 L408.1 396.0 L409.3 397.0 L410.6 398.0 L411.8 399.0 L413.1 400.0 L414.4 401.0 L415.7 402.0 L417.0 403.0 L418.3 404.0 L419.7 405.0 L421.1 406.0 L422.4 407.0 L423.8 408.0 L425.2 409.0 L426.6 410.0 L428.1 411.0 L429.5 412.0 L430.9 413.0 L432.4 414.0 L433.9 415.0 L435.4 416.0 L436.9 417.0 L438.4 417.9 L439.9 418.9 L441.5 419.9 L443.1 420.9 L444.6 421.9 L446.2 422.9 L447.8 423.9 L449.4 424.9 L451.0 425.9 L452.7 426.9 L454.3 427.9 L456.0 428.9 L457.7 429.9 L459.4 430.9 L461.1 431.9 L462.8 432.9 L464.5 433.9 L466.2 434.9 L468.0 435.9 L469.7 436.9 L471.5 437.9 L473.3 438.9 L475.1 439.9 L476.9 440.9 L478.7 441.9 L480.6 442.9 L482.4 443.9 L484.3 444.9 L486.2 445.9 L488.0 446.9 L489.9 447.9 L491.8 448.8 L493.8 449.8 L495.7 450.8 L497.6 451.8 L499.6 452.8 L501.5 453.8 L503.5 454.8 L505.5 455.8 L507.5 456.8 L509.5 457.8 L511.5 458.8 L513.5 459.8 L515.6 460.8 L517.6 461.8 L519.7 462.8 L521.8 463.8 L523.8 464.8 L525.9 465.8 L528.0 466.8 L530.2 467.8 L532.3 468.8 L534.4 469.7 L536.6 470.7 L538.7 471.7 L540.9 472.7 L543.1 473.7 L545.2 474.7 L547.4 475.7 L549.6 476.7 L551.9 477.7 L554.1 478.7 L556.3 479.7 L558.6 480.7 L560.8 481.7 L563.1 482.7 L565.4 483.7 L567.6 484.7 L569.9 485.6 L572.2 486.6 L574.5 487.6 L576.9 488.6 L579.2 489.6 L581.5 490.6 L583.9 491.6 L586.2 492.6 L588.6 493.6 L590.9 494.6 L593.3 495.6 L595.7 496.6 L598.1 497.6 L600.5 498.5 L602.9 499.5 L605.3 500.5 L607.8 501.5 L610.2 502.5 L612.6 503.5 L615.1 504.5 L617.5 505.5 L620.0 506.5 L622.5 507.5 L625.0 508.4 L627.4 509.4 L629.9 510.4 L632.4 511.4 L634.9 512.4 L637.5 513.4 L640.0 514.4 L642.5 515.4 L645.0 516.3 L647.6 517.3 L650.1 518.3 L652.7 519.3 L655.2 520.3 L657.8 521.3 L660.4 522.3 L663.0 523.2 L665.5 524.2 L668.1 525.2 L670.7 526.2 L673.3 527.2 L675.9 528.2 L678.6 529.1 L681.2 530.1 L683.8 531.1 L686.4 532.1 L689.0 533.1 L691.7 534.0 L694.3 535.0 L697.0 536.0 L699.6 537.0 L702.3 538.0 L704.9 538.9 L707.6 539.9 L710.2 540.9 L712.9 541.9 L715.6 542.8 L718.3 543.8 L720.9 544.8 L723.6 545.8 L726.3 546.7 L729.0 547.7 L731.7 548.7 L734.3 549.6 L737.0 550.6 L739.7 551.6 L742.4 552.5 L745.1 553.5 L747.8 554.5 L750.5 555.4 L753.2 556.4 L755.9 557.3 L758.6 558.3 L761.3 559.3 L764.0 560.2 L766.7 561.2 L769.4 562.1 L772.1 563.1 L774.8 564.0 L777.5 565.0 L780.2 565.9 L782.8 566.8 L785.5 567.8 L788.2 568.7 L790.9 569.6 L793.5 570.6 L796.2 571.5 L798.9 572.4 L801.5 573.3 L804.1 574.2 L806.8 575.1 L809.4 576.0 L812.0 576.9 L814.6 577.8 M328.3 326.8 L328.5 327.7 L328.7 328.6 L329.0 329.5 L329.2 330.4 L329.5 331.3 L329.8 332.2 L330.1 333.1 L330.4 334.0 L330.7 334.9 L331.1 335.8 L331.4 336.7 L331.8 337.5 L332.2 338.4 L332.6 339.3 L333.0 340.2 L333.4 341.1 L333.8 342.0 L334.3 342.9 L334.7 343.8 L335.2 344.7 L335.7 345.6 L336.2 346.5 L336.7 347.4 L337.2 348.3 L337.7 349.2 L338.3 350.1 L338.8 351.0 L339.4 351.9 L340.0 352.7 L340.6 353.6 L341.2 354.5 L341.8 355.4 L342.5 356.3 L343.1 357.2 L343.8 358.1 L344.4 359.0 L345.1 359.9 L345.8 360.8 L346.5 361.7 L347.3 362.6 L348.0 363.5 L348.8 364.4 L349.5 365.3 L350.3 366.2 L351.1 367.1 L351.9 367.9 L352.7 368.8 L353.5 369.7 L354.4 370.6 L355.2 371.5 L356.1 372.4 L357.0 373.3 L357.8 374.2 L358.7 375.1 L359.7 376.0 L360.6 376.9 L361.5 377.8 L362.5 378.7 L363.4 379.6 L364.4 380.5 L365.4 381.3 L366.4 382.2 L367.4 383.1 L368.4 384.0 L369.5 384.9 L370.5 385.8 L371.6 386.7 L372.7 387.6 L373.7 388.5 L374.8 389.4 L375.9 390.3 L377.1 391.2 L378.2 392.1 L379.3 393.0 L380.5 393.8 L381.7 394.7 L382.8 395.6 L384.0 396.5 L385.2 397.4 L386.5 398.3 L387.7 399.2 L388.9 400.1 L390.2 401.0 L391.4 401.9 L392.7 402.8 L394.0 403.7 L395.3 404.6 L396.6 405.5 L397.9 406.3 L399.3 407.2 L400.6 408.1 L402.0 409.0 L403.3 409.9 L404.7 410.8 L406.1 411.7 L407.5 412.6 L408.9 413.5 L410.3 414.4 L411.8 415.3 L413.2 416.2 L414.6 417.0 L416.1 417.9 L417.6 418.8 L419.1 419.7 L420.6 420.6 L422.1 421.5 L423.6 422.4 L425.1 423.3 L426.7 424.2 L428.2 425.1 L429.8 426.0 L431.4 426.9 L433.0 427.7 L434.6 428.6 L436.2 429.5 L437.8 430.4 L439.4 431.3 L441.0 432.2 L442.7 433.1 L444.3 434.0 L446.0 434.9 L447.7 435.8 L449.4 436.7 L451.1 437.5 L452.8 438.4 L454.5 439.3 L456.2 440.2 L458.0 441.1 L459.7 442.0 L461.5 442.9 L463.2 443.8 L465.0 444.7 L466.8 445.5 L468.6 446.4 L470.4 447.3 L472.2 448.2 L474.1 449.1 L475.9 450.0 L477.7 450.9 L479.6 451.8 L481.5 452.7 L483.3 453.5 L485.2 454.4 L487.1 455.3 L489.0 456.2 L490.9 457.1 L492.8 458.0 L494.8 458.9 L496.7 459.8 L498.6 460.7 L500.6 461.5 L502.6 462.4 L504.5 463.3 L506.5 464.2 L508.5 465.1 L510.5 466.0 L512.5 466.9 L514.5 467.7 L516.5 468.6 L518.6 469.5 L520.6 470.4 L522.7 471.3 L524.7 472.2 L526.8 473.1 L528.9 473.9 L530.9 474.8 L533.0 475.7 L535.1 476.6 L537.2 477.5 L539.3 478.4 L541.5 479.3 L543.6 480.1 L545.7 481.0 L547.9 481.9 L550.0 482.8 L552.2 483.7 L554.3 484.6 L556.5 485.4 L558.7 486.3 L560.9 487.2 L563.1 488.1 L565.3 489.0 L567.5 489.8 L569.7 490.7 L571.9 491.6 L574.1 492.5 L576.4 493.4 L578.6 494.3 L580.9 495.1 L583.1 496.0 L585.4 496.9 L587.6 497.8 L589.9 498.6 L592.2 499.5 L594.5 500.4 L596.8 501.3 L599.1 502.2 L601.4 503.0 L603.7 503.9 L606.0 504.8 L608.3 505.7 L610.6 506.5 L613.0 507.4 L615.3 508.3 L617.6 509.2 L620.0 510.0 L622.3 510.9 L624.7 511.8 L627.1 512.7 L629.4 513.5 L631.8 514.4 L634.2 515.3 L636.6 516.1 L638.9 517.0 L641.3 517.9 L643.7 518.8 L646.1 519.6 L648.5 520.5 L650.9 521.4 L653.3 522.2 L655.8 523.1 L658.2 524.0 L660.6 524.8 L663.0 525.7 L665.4 526.5 L667.9 527.4 L670.3 528.3 L672.7 529.1 L675.2 530.0 L677.6 530.9 L680.1 531.7 L682.5 532.6 L685.0 533.4 L687.4 534.3 L689.9 535.1 L692.3 536.0 L694.8 536.8 L697.2 537.7 L699.7 538.5 L702.2 539.4 L704.6 540.2 L707.1 541.1 L709.6 541.9 L712.0 542.8 L714.5 543.6 L717.0 544.5 L719.4 545.3 L721.9 546.1 L724.4 547.0 L726.8 547.8 L729.3 548.7 L731.8 549.5 L734.2 550.3 L736.7 551.1 L739.1 552.0 L741.6 552.8 L744.0 553.6 L746.5 554.4 L748.9 555.3 L751.4 556.1 L753.8 556.9 L756.3 557.7 L758.7 558.5 L761.1 559.3 L763.6 560.1 L766.0 560.9 L768.4 561.7 L770.8 562.5 L773.2 563.3 L775.6 564.1 L778.0 564.9 L780.4 565.6 L782.7 566.4 L785.1 567.2 L787.4 567.9 L789.8 568.7 L792.1 569.4 L794.4 570.2 L796.7 570.9 L799.0 571.7 L801.3 572.4 L803.6 573.1 L805.8 573.8 L808.0 574.5 L810.2 575.2 L812.4 575.9 L814.6 576.6 L816.8 577.3 L818.9 577.9 L821.0 578.6 L823.1 579.2 L825.1 579.9 L827.2 580.5 L829.2 581.1 L831.1 581.7 L833.1 582.2 L835.0 582.8 L836.9 583.3 L838.7 583.9 L840.5 584.4 M429.6 229.0 L428.2 230.1 L426.9 231.2 L425.5 232.2 L424.1 233.3 L422.8 234.3 L421.5 235.4 L420.2 236.5 L418.9 237.5 L417.6 238.6 L416.4 239.7 L415.1 240.7 L413.9 241.8 L412.7 242.9 L411.5 243.9 L410.3 245.0 L409.1 246.1 L408.0 247.1 L406.9 248.2 L405.8 249.3 L404.7 250.3 L403.6 251.4 L402.5 252.5 L401.5 253.5 L400.4 254.6 L399.4 255.6 L398.4 256.7 L397.4 257.8 L396.5 258.8 L395.5 259.9 L394.6 261.0 L393.6 262.0 L392.7 263.1 L391.9 264.2 L391.0 265.2 L390.1 266.3 L389.3 267.4 L388.5 268.4 L387.7 269.5 L386.9 270.6 L386.1 271.6 L385.4 272.7 L384.6 273.8 L383.9 274.8 L383.2 275.9 L382.5 277.0 L381.9 278.0 L381.2 279.1 L380.6 280.1 L380.0 281.2 L379.4 282.3 L378.8 283.3 L378.2 284.4 L377.7 285.5 L377.1 286.5 L376.6 287.6 L376.1 288.7 L375.6 289.7 L375.2 290.8 L374.7 291.9 L374.3 292.9 L373.9 294.0 L373.5 295.1 L373.1 296.1 L372.8 297.2 L372.4 298.3 L372.1 299.3 L371.8 300.4 L371.5 301.4 L371.2 302.5 L371.0 303.6 L370.7 304.6 L370.5 305.7 L370.3 306.8 L370.1 307.8 L369.9 308.9 L369.8 310.0 L369.6 311.0 L369.5 312.1 L369.4 313.2 L369.3 314.2 L369.3 315.3 L369.2 316.4 L369.2 317.4 L369.2 318.5 L369.2 319.6 L369.2 320.6 L369.2 321.7 L369.3 322.8 L369.3 323.8 L369.4 324.9 L369.5 325.9 L369.7 327.0 L369.8 328.1 L370.0 329.1 L370.1 330.2 L370.3 331.3 L370.5 332.3 L370.8 333.4 L371.0 334.5 L371.3 335.5 L371.5 336.6 L371.8 337.7 L372.2 338.7 L372.5 339.8 L372.8 340.9 L373.2 341.9 L373.6 343.0 L374.0 344.1 L374.4 345.1 L374.8 346.2 L375.3 347.3 L375.7 348.3 L376.2 349.4 L376.7 350.4 L377.3 351.5 L377.8 352.6 L378.3 353.6 L378.9 354.7 L379.5 355.8 L380.1 356.8 L380.7 357.9 L381.4 359.0 L382.0 360.0 L382.7 361.1 L383.4 362.2 L384.1 363.2 L384.8 364.3 L385.5 365.4 L386.3 366.4 L387.1 367.5 L387.9 368.6 L388.7 369.6 L389.5 370.7 L390.3 371.7 L391.2 372.8 L392.1 373.9 L392.9 374.9 L393.9 376.0 L394.8 377.1 L395.7 378.1 L396.7 379.2 L397.6 380.3 L398.6 381.3 L399.6 382.4 L400.7 383.5 L401.7 384.5 L402.7 385.6 L403.8 386.7 L404.9 387.7 L406.0 388.8 L407.1 389.9 L408.3 390.9 L409.4 392.0 L410.6 393.1 L411.8 394.1 L412.9 395.2 L414.2 396.2 L415.4 397.3 L416.6 398.4 L417.9 399.4 L419.2 400.5 L420.5 401.6 L421.8 402.6 L423.1 403.7 L424.4 404.8 L425.8 405.8 L427.2 406.9 L428.6 408.0 L430.0 409.0 L431.4 410.1 L432.8 411.2 L434.2 412.2 L435.7 413.3 L437.2 414.4 L438.7 415.4 L440.2 416.5 L441.7 417.5 L443.2 418.6 L444.8 419.7 L446.4 420.7 L448.0 421.8 L449.5 422.9 L451.2 423.9 L452.8 425.0 L454.4 426.1 L456.1 427.1 L457.8 428.2 L459.4 429.3 L461.1 430.3 L462.8 431.4 L464.6 432.5 L466.3 433.5 L468.1 434.6 L469.8 435.7 L471.6 436.7 L473.4 437.8 L475.2 438.8 L477.1 439.9 L478.9 441.0 L480.8 442.0 L482.6 443.1 L484.5 444.2 L486.4 445.2 L488.3 446.3 L490.2 447.4 L492.2 448.4 L494.1 449.5 L496.1 450.6 L498.0 451.6 L500.0 452.7 L502.0 453.8 L504.0 454.8 L506.1 455.9 L508.1 457.0 L510.2 458.0 L512.2 459.1 L514.3 460.1 L516.4 461.2 L518.5 462.3 L520.6 463.3 L522.7 464.4 L524.9 465.5 L527.0 466.5 L529.2 467.6 L531.4 468.7 L533.5 469.7 L535.7 470.8 L538.0 471.9 L540.2 472.9 L542.4 474.0 L544.7 475.1 L546.9 476.1 L549.2 477.2 L551.5 478.3 L553.8 479.3 L556.1 480.4 L558.4 481.4 L560.7 482.5 L563.1 483.6 L565.4 484.6 L567.8 485.7 L570.1 486.8 L572.5 487.8 L574.9 488.9 L577.3 490.0 L579.7 491.0 L582.1 492.1 L584.6 493.2 L587.0 494.2 L589.5 495.3 L591.9 496.4 L594.4 497.4 L596.9 498.5 L599.4 499.5 L601.9 500.6 L604.4 501.7 L606.9 502.7 L609.5 503.8 L612.0 504.9 L614.6 505.9 L617.1 507.0 L619.7 508.1 L622.3 509.1 L624.9 510.2 L627.5 511.3 L630.1 512.3 L632.7 513.4 L635.3 514.5 L637.9 515.5 L640.6 516.6 L643.2 517.6 L645.9 518.7 L648.5 519.8 L651.2 520.8 L653.9 521.9 L656.6 523.0 L659.3 524.0 L662.0 525.1 L664.7 526.2 L667.4 527.2 L670.2 528.3 L672.9 529.4 L675.6 530.4 L678.4 531.5 L681.1 532.5 L683.9 533.6 L686.7 534.7 L689.5 535.7 L692.2 536.8 L695.0 537.9 L697.8 538.9 L700.6 540.0 L703.4 541.1 L706.3 542.1 L709.1 543.2 L711.9 544.2 L714.8 545.3 L717.6 546.4 L720.4 547.4 L723.3 548.5 M327.1 294.2 L326.7 295.1 L326.4 296.0 L326.1 296.9 L325.8 297.8 L325.5 298.7 L325.2 299.6 L324.9 300.5 L324.7 301.4 L324.4 302.2 L324.2 303.1 L324.0 304.0 L323.8 304.9 L323.6 305.8 L323.4 306.7 L323.3 307.6 L323.1 308.5 L323.0 309.4 L322.9 310.3 L322.8 311.2 L322.7 312.1 L322.6 313.0 L322.5 313.8 L322.5 314.7 L322.4 315.6 L322.4 316.5 L322.4 317.4 L322.4 318.3 L322.4 319.2 L322.4 320.1 L322.5 321.0 L322.5 321.9 L322.6 322.8 L322.6 323.7 L322.7 324.6 L322.8 325.4 L323.0 326.3 L323.1 327.2 L323.2 328.1 L323.4 329.0 L323.6 329.9 L323.7 330.8 L323.9 331.7 L324.1 332.6 L324.4 333.5 L324.6 334.4 L324.9 335.3 L325.1 336.1 L325.4 337.0 L325.7 337.9 L326.0 338.8 L326.3 339.7 L326.6 340.6 L327.0 341.5 L327.3 342.4 L327.7 343.3 L328.1 344.2 L328.5 345.1 L328.9 346.0 L329.3 346.9 L329.7 347.7 L330.2 348.6 L330.6 349.5 L331.1 350.4 L331.6 351.3 L332.1 352.2 L332.6 353.1 L333.1 354.0 L333.6 354.9 L334.2 355.8 L334.8 356.7 L335.3 357.6 L335.9 358.4 L336.5 359.3 L337.1 360.2 L337.8 361.1 L338.4 362.0 L339.1 362.9 L339.7 363.8 L340.4 364.7 L341.1 365.6 L341.8 366.5 L342.5 367.4 L343.2 368.3 L344.0 369.2 L344.7 370.0 L345.5 370.9 L346.3 371.8 L347.1 372.7 L347.9 373.6 L348.7 374.5 L349.5 375.4 L350.4 376.3 L351.2 377.2 L352.1 378.1 L353.0 379.0 L353.9 379.9 L354.8 380.8 L355.7 381.6 L356.6 382.5 L357.6 383.4 L358.5 384.3 L359.5 385.2 L360.5 386.1 L361.5 387.0 L362.5 387.9 L363.5 388.8 L364.5 389.7 L365.6 390.6 L366.6 391.5 L367.7 392.3 L368.8 393.2 L369.9 394.1 L371.0 395.0 L372.1 395.9 L373.2 396.8 L374.3 397.7 L375.5 398.6 L376.7 399.5 L377.8 400.4 L379.0 401.3 L380.2 402.2 L381.4 403.0 L382.6 403.9 L383.9 404.8 L385.1 405.7 L386.4 406.6 L387.7 407.5 L388.9 408.4 L390.2 409.3 L391.5 410.2 L392.8 411.1 L394.2 412.0 L395.5 412.9 L396.9 413.8 L398.2 414.6 L399.6 415.5 L401.0 416.4 L402.4 417.3 L403.8 418.2 L405.2 419.1 L406.6 420.0 L408.1 420.9 L409.5 421.8 L411.0 422.7 L412.5 423.6 L414.0 424.5 L415.5 425.3 L417.0 426.2 L418.5 427.1 L420.0 428.0 L421.6 428.9 L423.1 429.8 L424.7 430.7 L426.3 431.6 L427.8 432.5 L429.4 433.4 L431.1 434.3 L432.7 435.2 L434.3 436.0 L435.9 436.9 L437.6 437.8 L439.3 438.7 L440.9 439.6 L442.6 440.5 L444.3 441.4 L446.0 442.3 L447.7 443.2 L449.4 444.1 L451.2 445.0 L452.9 445.9 L454.7 446.7 L456.4 447.6 L458.2 448.5 L460.0 449.4 L461.8 450.3 L463.6 451.2 L465.4 452.1 L467.2 453.0 L469.1 453.9 L470.9 454.8 L472.8 455.7 L474.6 456.6 L476.5 457.4 L478.4 458.3 L480.3 459.2 L482.2 460.1 L484.1 461.0 L486.0 461.9 L487.9 462.8 L489.9 463.7 L491.8 464.6 L493.8 465.5 L495.7 466.4 L497.7 467.3 L499.7 468.1 L501.7 469.0 L503.7 469.9 L505.7 470.8 L507.7 471.7 L509.8 472.6 L511.8 473.5 L513.9 474.4 L515.9 475.3 L518.0 476.2 L520.1 477.1 L522.2 477.9 L524.2 478.8 L526.3 479.7 L528.5 480.6 L530.6 481.5 L532.7 482.4 L534.8 483.3 L537.0 484.2 L539.1 485.1 L541.3 486.0 L543.5 486.9 L545.6 487.8 L547.8 488.6 L550.0 489.5 L552.2 490.4 L554.4 491.3 L556.6 492.2 L558.9 493.1 L561.1 494.0 L563.3 494.9 L565.6 495.8 L567.8 496.7 L570.1 497.6 L572.4 498.4 L574.6 499.3 L576.9 500.2 L579.2 501.1 L581.5 502.0 L583.8 502.9 L586.1 503.8 L588.4 504.7 L590.8 505.6 L593.1 506.5 L595.5 507.3 L597.8 508.2 L600.2 509.1 L602.5 510.0 L604.9 510.9 L607.3 511.8 L609.6 512.7 L612.0 513.6 L614.4 514.5 L616.8 515.4 L619.2 516.3 L621.6 517.1 L624.1 518.0 L626.5 518.9 L628.9 519.8 L631.4 520.7 L633.8 521.6 L636.3 522.5 L638.7 523.4 L641.2 524.3 L643.6 525.2 L646.1 526.0 L648.6 526.9 L651.1 527.8 L653.6 528.7 L656.1 529.6 L658.6 530.5 L661.1 531.4 L663.6 532.3 L666.1 533.2 L668.6 534.0 L671.1 534.9 L673.7 535.8 L676.2 536.7 L678.8 537.6 L681.3 538.5 L683.8 539.4 L686.4 540.3 L689.0 541.2 L691.5 542.0 L694.1 542.9 L696.7 543.8 L699.3 544.7 L701.8 545.6 L704.4 546.5 L707.0 547.4 L709.6 548.3 L712.2 549.1 L714.8 550.0 L717.4 550.9 L720.0 551.8 L722.6 552.7 L725.2 553.6 L727.9 554.5 L730.5 555.3 L733.1 556.2 L735.7 557.1 L738.4 558.0 L741.0 558.9 L743.7 559.8 L746.3 560.7 L748.9 561.5" fill="none" stroke="#7a7a7a" stroke-width="1.1" stroke-dasharray="1.1 2.5"/>
<path d="M864.5 432.8 L864.5 433.1 L864.6 433.3 L864.6 433.6 L864.7 433.9 L864.7 434.2 L864.7 434.4 L864.8 434.7 L864.8 435.0 L864.9 435.3 L864.9 435.5 L864.9 435.8 L865.0 436.1 L865.0 436.4 L865.1 436.6 L865.1 436.9 L865.1 437.2 L865.2 437.4 L865.2 437.7 L865.3 438.0 L865.3 438.3 L865.3 438.5 L865.4 438.8 L865.4 439.1 L865.5 439.4 L865.5 439.6 L865.5 439.9 L865.6 440.2 L865.6 440.5 L865.7 440.7 L865.7 441.0 M877.2 490.9 L877.1 491.4 L877.0 491.9 L877.0 492.4 L876.9 492.9 L876.8 493.4 L876.7 493.9 L876.7 494.4 L876.6 494.9 L876.5 495.4 L876.4 495.9 L876.3 496.3 L876.3 496.8 L876.2 497.3 L876.1 497.8 L876.0 498.3 L876.0 498.8 L875.9 499.3 L875.8 499.8 L875.7 500.3 L875.7 500.8 L875.6 501.3 L875.5 501.8 L875.4 502.3 L875.4 502.8 L875.3 503.2 L875.2 503.7 L875.1 504.2 L875.0 504.7 L875.0 505.2 L874.9 505.7 M864.0 512.7 L864.9 512.9 L865.7 513.1 L866.5 513.3 L867.4 513.5 L868.2 513.7 L869.1 513.9 L869.9 514.1 L870.8 514.2 L871.6 514.4 L872.4 514.5 L873.3 514.7 L874.1 514.9 L874.9 515.0 L875.8 515.1 L876.6 515.3 L877.4 515.4 L878.3 515.5 L879.1 515.6 L879.9 515.7 L880.7 515.8 L881.5 515.9 L882.4 516.0 L883.2 516.1 L884.0 516.2 L884.8 516.2 L885.6 516.3 L886.5 516.4 L887.3 516.4 L888.1 516.5 L888.9 516.5 M790.1 515.8 L790.8 516.2 L791.5 516.5 L792.1 516.9 L792.8 517.3 L793.5 517.6 L794.2 518.0 L794.9 518.3 L795.5 518.7 L796.2 519.0 L796.9 519.4 L797.6 519.8 L798.3 520.1 L798.9 520.5 L799.6 520.8 L800.3 521.2 L800.9 521.5 L801.6 521.9 L802.3 522.2 L803.0 522.6 L803.6 522.9 L804.3 523.2 L805.0 523.6 L805.6 523.9 L806.3 524.3 L807.0 524.6 L807.6 525.0 L808.3 525.3 L809.0 525.6 L809.6 526.0 L810.3 526.3 M823.5 527.4 L823.6 527.7 L823.7 528.1 L823.7 528.4 L823.8 528.8 L823.9 529.1 L824.0 529.5 L824.1 529.8 L824.2 530.1 L824.2 530.5 L824.3 530.8 L824.4 531.2 L824.5 531.5 L824.6 531.8 L824.6 532.2 L824.7 532.5 L824.8 532.8 L824.9 533.2 L825.0 533.5 L825.0 533.9 L825.1 534.2 L825.2 534.5 L825.3 534.9 L825.4 535.2 L825.4 535.5 L825.5 535.9 L825.6 536.2 L825.7 536.5 L825.7 536.8 L825.8 537.2 L825.9 537.5 M854.6 518.9 L854.8 518.9 L855.0 518.9 L855.2 518.9 L855.4 518.9 L855.7 518.9 L855.9 518.9 L856.1 518.9 L856.3 518.9 L856.5 518.9 L856.7 518.9 L856.9 518.9 L857.1 518.9 L857.3 518.9 L857.6 518.9 L857.8 518.9 L858.0 518.9 L858.2 518.9 L858.4 518.9 L858.6 518.9 L858.8 518.9 L859.0 518.9 L859.2 518.9 L859.4 518.9 L859.7 518.9 L859.9 518.9 L860.1 518.9 L860.3 518.9 L860.5 518.9 L860.7 518.9 L860.9 518.9 M857.0 523.5 L857.0 523.9 L857.1 524.4 L857.1 524.8 L857.2 525.3 L857.2 525.7 L857.3 526.2 L857.3 526.6 L857.4 527.1 L857.4 527.5 L857.5 528.0 L857.5 528.4 L857.6 528.9 L857.6 529.3 L857.7 529.7 L857.7 530.2 L857.8 530.6 L857.8 531.1 L857.9 531.5 L857.9 532.0 L858.0 532.4 L858.0 532.8 L858.1 533.3 L858.1 533.7 L858.2 534.2 L858.2 534.6 L858.3 535.0 L858.3 535.5 L858.4 535.9 L858.4 536.4 L858.5 536.8 M852.3 551.5 L853.0 551.6 L853.7 551.8 L854.4 551.9 L855.1 552.0 L855.8 552.1 L856.5 552.2 L857.2 552.3 L857.8 552.4 L858.5 552.5 L859.2 552.6 L859.8 552.7 L860.5 552.8 L861.2 552.9 L861.8 552.9 L862.5 553.0 L863.1 553.0 L863.8 553.1 L864.4 553.1 L865.0 553.1 L865.7 553.2 L866.3 553.2 L866.9 553.2 L867.5 553.2 L868.2 553.2 L868.8 553.2 L869.4 553.2 L870.0 553.2 L870.6 553.2 L871.2 553.1 L871.8 553.1 M890.4 550.8 L892.0 551.6 L893.6 552.4 L895.1 553.1 L896.7 553.8 L898.3 554.4 L899.8 555.0 L901.4 555.6 L903.0 556.1 L904.5 556.6 L906.1 557.1 L907.7 557.5 L909.2 557.8 L910.8 558.2 L912.4 558.4 L914.0 558.6 L915.6 558.8 L917.2 558.9 L918.9 559.0 L920.5 559.0 L922.2 559.0 L923.9 559.0 L925.6 558.8 L927.3 558.7 L929.0 558.5 L930.8 558.2 L932.6 557.9 L934.4 557.5 L936.2 557.1 L938.1 556.7 L940.0 556.2 M870.2 565.5 L870.5 566.0 L870.8 566.5 L871.1 567.1 L871.4 567.6 L871.7 568.1 L872.0 568.6 L872.4 569.1 L872.7 569.6 L873.0 570.2 L873.3 570.7 L873.6 571.2 L873.9 571.7 L874.2 572.2 L874.5 572.7 L874.8 573.3 L875.1 573.8 L875.4 574.3 L875.8 574.8 L876.1 575.3 L876.4 575.8 L876.7 576.4 L877.0 576.9 L877.3 577.4 L877.6 577.9 L877.9 578.4 L878.3 578.9 L878.6 579.5 L878.9 580.0 L879.2 580.5 L879.5 581.0 M831.3 587.3 L832.5 587.6 L833.6 588.0 L834.8 588.3 L835.9 588.6 L837.0 588.9 L838.1 589.2 L839.2 589.5 L840.3 589.8 L841.4 590.1 L842.5 590.4 L843.5 590.7 L844.6 591.0 L845.6 591.3 L846.7 591.5 L847.7 591.8 L848.7 592.1 L849.6 592.3 L850.6 592.6 L851.6 592.8 L852.5 593.0 L853.4 593.3 L854.3 593.5 L855.2 593.7 L856.1 593.9 L856.9 594.1 L857.8 594.3 L858.6 594.5 L859.4 594.7 L860.1 594.8 L860.9 595.0 M930.0 556.0 L930.4 556.0 L930.9 555.9 L931.3 555.9 L931.8 555.8 L932.2 555.8 L932.7 555.7 L933.1 555.7 L933.6 555.6 L934.0 555.5 L934.5 555.5 L935.0 555.4 L935.4 555.3 L935.9 555.2 L936.3 555.2 L936.8 555.1 L937.3 555.0 L937.8 554.9 L938.2 554.8 L938.7 554.7 L939.2 554.6 L939.6 554.5 L940.1 554.4 L940.6 554.3 L941.1 554.2 L941.6 554.1 L942.0 554.0 L942.5 553.9 L943.0 553.7 L943.5 553.6 L944.0 553.5 M948.0 542.5 L948.0 543.0 L948.0 543.4 L947.9 543.9 L947.9 544.4 L947.9 544.8 L947.9 545.3 L947.8 545.7 L947.8 546.2 L947.8 546.7 L947.8 547.1 L947.8 547.6 L947.7 548.0 L947.7 548.5 L947.7 548.9 L947.7 549.4 L947.7 549.8 L947.6 550.3 L947.6 550.7 L947.6 551.2 L947.6 551.6 L947.6 552.1 L947.6 552.5 L947.6 553.0 L947.5 553.4 L947.5 553.8 L947.5 554.3 L947.5 554.7 L947.5 555.1 L947.5 555.6 L947.5 556.0 M1020.0 565.0 L1020.7 564.8 L1021.3 564.5 L1022.0 564.3 L1022.6 564.1 L1023.3 563.8 L1024.0 563.6 L1024.6 563.4 L1025.3 563.2 L1026.0 562.9 L1026.6 562.7 L1027.3 562.5 L1028.0 562.2 L1028.6 562.0 L1029.3 561.8 L1030.0 561.5 L1030.6 561.3 L1031.3 561.1 L1032.0 560.8 L1032.6 560.6 L1033.3 560.4 L1034.0 560.1 L1034.6 559.9 L1035.3 559.7 L1036.0 559.4 L1036.6 559.2 L1037.3 558.9 L1038.0 558.7 L1038.7 558.5 L1039.3 558.2 L1040.0 558.0 M941.0 591.0 L941.8 591.1 L942.7 591.2 L943.7 591.2 L944.8 591.2 L945.9 591.1 L947.2 591.0 L948.5 590.9 L950.0 590.6 L951.5 590.4 L953.1 590.1 L954.8 589.8 L956.6 589.4 L958.5 589.0 L960.4 588.6 L962.4 588.1 L964.6 587.6 L966.7 587.0 L969.0 586.5 L971.3 585.9 L973.7 585.2 L976.1 584.6 L978.6 583.9 L981.1 583.3 L983.7 582.6 L986.3 581.8 L989.0 581.1 L991.7 580.3 L994.4 579.6 L997.2 578.8 L1000.0 578.0 M1068.0 537.0 L1068.0 537.2 L1068.0 537.3 L1068.1 537.5 L1068.1 537.6 L1068.1 537.8 L1068.2 537.9 L1068.2 538.1 L1068.3 538.2 L1068.3 538.3 L1068.4 538.5 L1068.4 538.6 L1068.5 538.8 L1068.5 538.9 L1068.6 539.0 L1068.6 539.2 L1068.7 539.3 L1068.8 539.4 L1068.9 539.6 L1068.9 539.7 L1069.0 539.8 L1069.1 539.9 L1069.2 540.1 L1069.3 540.2 L1069.4 540.3 L1069.5 540.4 L1069.6 540.5 L1069.7 540.7 L1069.8 540.8 L1069.9 540.9 L1070.0 541.0 M1080.0 529.0 L1079.9 529.3 L1079.8 529.5 L1079.7 529.8 L1079.6 530.0 L1079.6 530.3 L1079.5 530.6 L1079.4 530.8 L1079.4 531.1 L1079.3 531.3 L1079.2 531.6 L1079.2 531.8 L1079.1 532.0 L1079.1 532.3 L1079.0 532.5 L1079.0 532.8 L1079.0 533.0 L1078.9 533.2 L1078.9 533.4 L1078.9 533.7 L1078.9 533.9 L1078.9 534.1 L1078.9 534.3 L1078.9 534.6 L1078.9 534.8 L1078.9 535.0 L1078.9 535.2 L1078.9 535.4 L1078.9 535.6 L1079.0 535.8 L1079.0 536.0" fill="none" stroke="#9a9a9a" stroke-width="1.4"/>
<path d="M1450.0 266.0C1452.5 267.2 1460.3 269.9 1465.0 273.0C1469.7 276.1 1475.8 282.5 1478.0 284.4 M326.7 284.4C328.4 287.8 334.8 297.4 336.7 305.0C338.6 312.6 336.4 321.7 338.3 330.0C340.2 338.3 344.7 348.3 348.3 355.0C351.9 361.7 354.7 363.9 360.0 370.0C365.3 376.1 372.8 385.3 380.0 391.7C387.2 398.1 395.5 403.3 403.3 408.3C411.1 413.3 414.8 415.0 426.7 421.7C438.6 428.4 456.1 437.9 475.0 448.3C493.9 458.7 525.6 477.3 540.0 484.0C554.4 490.7 537.7 480.3 561.3 488.7C584.9 497.1 655.1 524.5 681.6 534.2C708.1 543.9 705.2 541.5 720.0 546.7C734.8 551.9 746.8 557.3 770.2 565.3C793.6 573.3 840.7 589.4 860.4 594.9C880.1 600.4 883.2 599.3 888.4 598.0C893.6 596.7 890.6 591.7 891.5 587.1C892.4 582.5 893.2 573.0 893.5 570.2" fill="none" stroke="#ff2200" stroke-width="1.4" stroke-dasharray="1.4 2.2"/>
<path d="M893.5 570.2L895.4 564.5" stroke="#ff2200" stroke-width="1.6"/>
<circle cx="895.4" cy="564.5" r="1.3" fill="#ff6040"/>
<path d="M372.2 250.0C368.7 253.8 356.7 265.5 351.0 273.0C345.3 280.5 340.4 288.3 338.0 295.0C335.6 301.7 334.4 307.8 336.7 313.3C339.0 318.9 346.4 323.3 351.7 328.3C357.0 333.3 360.2 336.6 368.3 343.3C376.4 350.0 390.3 361.4 400.0 368.3C409.7 375.2 416.7 379.2 426.7 385.0C436.7 390.8 446.1 396.6 460.0 403.3C473.9 410.0 492.2 418.2 510.0 425.0C527.8 431.8 537.7 434.6 566.7 444.0C595.7 453.4 651.8 473.7 684.0 481.3C716.2 488.9 741.1 490.6 760.0 489.4C778.9 488.2 791.0 476.5 797.2 473.9" fill="none" stroke="#ff2200" stroke-width="1.4" stroke-dasharray="1.4 2.2"/>
<path d="M797.2 473.9L810 464.7" stroke="#ff2200" stroke-width="1.6"/>
<circle cx="810" cy="464.7" r="1.3" fill="#ff6040"/>
<path d="M370.7 253.3C366.3 256.6 351.6 265.5 344.4 273.3C337.2 281.1 331.3 292.8 327.5 300.0C323.7 307.2 323.1 310.0 321.7 316.7C320.3 323.4 319.4 336.1 318.9 340.0 M1483.3 344.4C1480.1 348.6 1473.2 360.6 1463.9 369.4C1454.7 378.2 1448.5 384.3 1427.8 397.2C1407.1 410.1 1367.6 433.4 1340.0 446.7C1312.4 459.9 1291.8 465.2 1262.2 476.7C1232.6 488.2 1189.8 505.4 1162.2 515.6C1134.6 525.8 1115.4 531.3 1096.7 537.9C1078.0 544.5 1065.0 550.7 1050.0 555.4C1035.0 560.1 1014.2 564.2 1007.0 566.0" fill="none" stroke="#ff2200" stroke-width="1.4" stroke-dasharray="1.4 2.2"/>
<path d="M1007 566L992 570" stroke="#ff2200" stroke-width="1.6"/>
<circle cx="992" cy="570" r="1.3" fill="#ff6040"/>
<path d="M474.7 350.7C475.3 352.5 476.3 357.1 478.3 361.7C480.3 366.3 483.6 373.0 486.7 378.3C489.8 383.6 493.1 388.6 496.7 393.3C500.3 398.0 497.5 396.8 508.3 406.7C519.1 416.6 543.8 439.4 561.3 452.7C578.8 466.0 593.2 474.7 613.3 486.5C633.3 498.3 662.7 513.5 681.6 523.3C700.5 533.1 711.4 538.1 726.7 545.1C742.0 552.1 759.8 559.1 773.3 565.3C786.8 571.5 800.9 579.1 807.5 582.4C814.1 585.7 812.1 584.6 813.0 585.0 M988.9 585.8C985.9 586.5 977.0 588.8 971.1 589.8C965.2 590.8 956.7 591.8 953.3 591.6C949.9 591.5 951.0 590.0 950.7 588.9C950.4 587.8 950.6 587.4 951.6 585.3C952.6 583.2 954.8 579.5 956.9 576.4C959.0 573.3 961.8 569.7 964.0 566.7C966.2 563.8 969.2 560.0 970.2 558.7" fill="none" stroke="#ee82ee" stroke-width="1.4" stroke-dasharray="1.4 2.2"/>
<path d="M970.2 558.7L975.1 551.6" stroke="#ee82ee" stroke-width="1.6"/>
<circle cx="975.1" cy="551.6" r="1.3" fill="#ff6040"/>
<path d="M497.3 354.7C497.5 356.1 497.0 358.8 498.3 363.3C499.6 367.8 503.1 376.7 505.0 381.7C506.9 386.7 505.5 387.8 510.0 393.3C514.5 398.8 523.2 405.6 532.0 414.7C540.8 423.8 549.2 436.2 562.7 448.0C576.2 459.8 593.8 473.5 613.3 485.3C632.8 497.1 662.2 509.9 680.0 519.0C697.8 528.1 706.8 532.8 720.0 540.0C733.2 547.2 752.5 558.3 759.0 562.0 M1043.1 568.0C1038.9 568.8 1023.8 571.9 1018.2 572.9C1012.6 573.9 1010.8 574.0 1009.3 574.2" fill="none" stroke="#ee82ee" stroke-width="1.4" stroke-dasharray="1.4 2.2"/>
<path d="M1009.3 574.2L997.8 575.1" stroke="#ee82ee" stroke-width="1.6"/>
<circle cx="997.8" cy="575.1" r="1.3" fill="#ff6040"/>
<path d="M1427.3 250.8 L1426.8 250.4 L1426.3 250.0 L1425.8 249.6 L1425.4 249.1 L1424.9 248.7 L1424.5 248.3 L1424.0 247.9 L1423.6 247.5 L1423.1 247.0 L1422.7 246.6 L1422.3 246.2 L1421.8 245.8 L1421.4 245.4 L1421.0 245.0 L1420.6 244.6 L1420.2 244.2 L1419.8 243.7 L1419.4 243.3 L1419.0 242.9 L1418.7 242.5 L1418.3 242.1 L1418.0 241.7 L1417.6 241.3 L1417.3 240.9 L1416.9 240.6 L1416.6 240.2 L1416.3 239.8 L1416.0 239.4 L1415.7 239.0 L1415.4 238.6 L1415.1 238.3 L1414.8 237.9 L1414.6 237.5 L1414.3 237.2 L1414.1 236.8 L1413.8 236.5 L1413.6 236.1 L1413.4 235.8 L1413.2 235.4 L1413.0 235.1 L1412.8 234.8 L1412.6 234.4 L1412.4 234.1 L1412.3 233.8 L1412.1 233.5 L1412.0 233.2 L1411.9 232.9 L1411.8 232.6 L1411.7 232.3 L1411.6 232.0 L1411.5 231.7 L1411.4 231.5 L1411.4 231.2 L1411.3 230.9 L1411.3 230.7 L1411.3 230.4 L1411.3 230.2 L1411.3 229.9 L1411.3 229.7 L1411.4 229.5 L1411.4 229.3 L1411.5 229.1 L1411.5 228.9 L1411.6 228.7 L1411.7 228.5 L1411.8 228.3 L1411.9 228.1 L1412.1 227.9 L1412.2 227.8 L1412.4 227.6 L1412.5 227.5 L1412.7 227.3 L1412.9 227.2 L1413.1 227.1 L1413.4 227.0 L1413.6 226.8 L1413.9 226.7 L1414.1 226.6 L1414.4 226.6 L1414.7 226.5 L1415.0 226.4 L1415.3 226.3 L1415.6 226.3 M388.1 226.2 L388.6 226.2 L389.1 226.1 L389.5 226.1 L390.0 226.1 L390.4 226.1 L390.8 226.1 L391.2 226.1 L391.6 226.1 L392.0 226.1 L392.4 226.1 L392.8 226.2 L393.1 226.2 L393.5 226.3 L393.8 226.3 L394.1 226.4 L394.4 226.5 L394.7 226.6 L395.0 226.6 L395.3 226.7 L395.5 226.8 L395.8 227.0 L396.0 227.1 L396.2 227.2 L396.4 227.3 L396.6 227.5 L396.8 227.6 L396.9 227.8 L397.1 227.9 L397.2 228.1 L397.3 228.3 L397.4 228.5 L397.5 228.7 L397.6 228.9 L397.7 229.1 L397.8 229.3 L397.8 229.5 L397.8 229.7 L397.9 229.9 L397.9 230.2 L397.9 230.4 L397.9 230.7 L397.8 230.9 L397.8 231.2 L397.8 231.5 L397.7 231.7 L397.6 232.0 L397.5 232.3 L397.4 232.6 L397.3 232.9 L397.2 233.2 L397.1 233.5 L397.0 233.8 L396.8 234.1 L396.6 234.4 L396.5 234.8 L396.3 235.1 L396.1 235.4 L395.9 235.8 L395.7 236.1 L395.5 236.5 L395.2 236.8 L395.0 237.2 L394.7 237.5 L394.5 237.9 L394.2 238.3 L393.9 238.6 L393.6 239.0 L393.3 239.4 L393.0 239.8 L392.7 240.2 L392.4 240.6 L392.1 240.9 L391.7 241.3 L391.4 241.7 L391.0 242.1 L390.7 242.5 L390.3 242.9 L389.9 243.3 L389.6 243.7 L389.2 244.2 L388.8 244.6 L388.4 245.0 L388.0 245.4 L387.6 245.8 L387.2 246.2 L386.7 246.6 L386.3 247.0 L385.9 247.5 L385.4 247.9 L385.0 248.3 L384.5 248.7 L384.1 249.1 L383.6 249.6 L383.1 250.0 L382.7 250.4 L382.2 250.8 L381.7 251.2 L381.2 251.7 L380.8 252.1 L380.3 252.5 L379.8 252.9 L379.3 253.3 L378.8 253.7 L378.3 254.2 L377.8 254.6 L377.2 255.0 L376.7 255.4 L376.2 255.8 L375.7 256.2 L375.2 256.6 L374.7 257.0 L374.1 257.4 L373.6 257.8 L373.1 258.2 L372.5 258.6 L372.0 259.0 L371.5 259.4 L370.9 259.7 L370.4 260.1 L369.8 260.5 L369.3 260.9 L368.8 261.2 L368.2 261.6 L367.7 262.0 L367.1 262.3 L366.6 262.7 L366.0 263.0 L365.5 263.4 L364.9 263.7 L364.4 264.1 L363.8 264.4 L363.3 264.8 L362.7 265.1 L362.2 265.4 L361.6 265.7 L361.1 266.0 L360.5 266.4 L360.0 266.7 L359.4 267.0 L358.9 267.3 L358.3 267.5 L357.8 267.8 L357.2 268.1 L356.7 268.4 L356.1 268.7 L355.6 268.9 L355.0 269.2 L354.5 269.4 L354.0 269.7 L353.4 269.9 L352.9 270.1 L352.3 270.4 L351.8 270.6 L351.3 270.8 L350.7 271.0 L350.2 271.2 L349.7 271.4 L349.2 271.6 L348.6 271.8 L348.1 272.0 L347.6 272.2 L347.1 272.3 L346.6 272.5 L346.1 272.7 L345.6 272.8 L345.0 272.9 L344.5 273.1 L344.0 273.2 L343.6 273.3 L343.1 273.4 L342.6 273.5 L342.1 273.6 L341.6 273.7 L341.1 273.8 L340.7 273.9 L340.2 274.0 L339.7 274.0 L339.3 274.1 L338.8 274.2 L338.4 274.2 L337.9 274.2 L337.5 274.3 L337.0 274.3 L336.6 274.3 L336.2 274.3 L335.7 274.3 L335.3 274.3 L334.9 274.3 L334.5 274.3 L334.1 274.3 L333.7 274.2 L333.3 274.2 L332.9 274.2 M1470.5 274.1 L1470.0 274.0 L1469.5 274.0 L1469.1 273.9 L1468.6 273.8 L1468.1 273.7 L1467.6 273.6 L1467.1 273.5 L1466.7 273.4 L1466.2 273.3 L1465.7 273.2 L1465.2 273.1 L1464.7 272.9 L1464.2 272.8 L1463.6 272.7 L1463.1 272.5 L1462.6 272.3 L1462.1 272.2 L1461.6 272.0 L1461.1 271.8 L1460.5 271.6 L1460.0 271.4 L1459.5 271.2 L1459.0 271.0 L1458.4 270.8 L1457.9 270.6 L1457.3 270.4 L1456.8 270.1 L1456.3 269.9 L1455.7 269.7 L1455.2 269.4 L1454.6 269.2 L1454.1 268.9 L1453.5 268.7 L1453.0 268.4 L1452.4 268.1 L1451.9 267.8 L1451.3 267.5 L1450.8 267.3 L1450.2 267.0 L1449.7 266.7 L1449.1 266.4 L1448.6 266.0 L1448.0 265.7 L1447.5 265.4 L1446.9 265.1 L1446.4 264.8 L1445.8 264.4 L1445.3 264.1 L1444.7 263.7 L1444.1 263.4 L1443.6 263.0 L1443.0 262.7 L1442.5 262.3 L1441.9 262.0 L1441.4 261.6 L1440.8 261.2 L1440.3 260.9 L1439.7 260.5 L1439.2 260.1 L1438.7 259.7 L1438.1 259.4 L1437.6 259.0 L1437.0 258.6 L1436.5 258.2 L1436.0 257.8 L1435.4 257.4 L1434.9 257.0 L1434.4 256.6 L1433.8 256.2 L1433.3 255.8 L1432.8 255.4 L1432.3 255.0 L1431.8 254.6 L1431.2 254.2 L1430.7 253.7 L1430.2 253.3 L1429.7 252.9 L1429.2 252.5 L1428.7 252.1 L1428.2 251.7 L1427.8 251.2 L1427.3 250.8" fill="none" stroke="#ff2200" stroke-width="2"/>
<path d="M460.3 350.7 L460.2 350.3 L460.0 349.8 L459.9 349.4 L459.8 349.0 L459.7 348.6 L459.6 348.1 L459.5 347.7 L459.4 347.3 L459.3 346.9 L459.3 346.5 L459.2 346.0 L459.2 345.6 L459.1 345.2 L459.1 344.8 L459.1 344.4 L459.1 344.0 L459.1 343.6 L459.1 343.2 L459.1 342.8 L459.2 342.4 L459.2 342.0 L459.3 341.6 L459.3 341.2 L459.4 340.8 L459.5 340.4 L459.6 340.0 L459.7 339.7 L459.8 339.3 L459.9 338.9 L460.1 338.5 L460.2 338.2 L460.3 337.8 L460.5 337.5 L460.7 337.1 L460.8 336.8 L461.0 336.4 L461.2 336.1 L461.4 335.8 L461.6 335.4 L461.8 335.1 L462.0 334.8 L462.3 334.5 L462.5 334.2 L462.8 333.8 L463.0 333.5 L463.3 333.3 L463.5 333.0 L463.8 332.7 L464.1 332.4 L464.4 332.1 L464.7 331.9 L465.0 331.6 L465.3 331.3 L465.6 331.1 L465.9 330.8 L466.2 330.6 L466.5 330.4 L466.9 330.2 L467.2 329.9 L467.5 329.7 L467.9 329.5 L468.2 329.3 L468.6 329.1 L469.0 328.9 L469.3 328.7 L469.7 328.6 L470.1 328.4 L470.4 328.2 L470.8 328.1 L471.2 327.9 L471.6 327.8 L472.0 327.7 L472.4 327.5 L472.8 327.4 L473.2 327.3 L473.6 327.2 L474.0 327.1 L474.4 327.0 L474.8 326.9 L475.2 326.9 L475.6 326.8 L476.1 326.7 L476.5 326.7 L476.9 326.6 L477.3 326.6 L477.7 326.6 L478.2 326.5 L478.6 326.5 L479.0 326.5 L479.4 326.5 L479.9 326.5 L480.3 326.5 L480.7 326.5 L481.1 326.6 L481.6 326.6 L482.0 326.6 L482.4 326.7 L482.8 326.7 L483.3 326.8 L483.7 326.9 L484.1 326.9 L484.5 327.0 L485.0 327.1 L485.4 327.2 L485.8 327.3 L486.2 327.4 L486.7 327.5 L487.1 327.7 L487.5 327.8 L487.9 327.9 L488.3 328.1 L488.7 328.2 L489.1 328.4 L489.5 328.6 L489.9 328.7 L490.3 328.9 L490.7 329.1 L491.1 329.3 L491.5 329.5 L491.9 329.7 L492.3 329.9 L492.7 330.2 L493.1 330.4 L493.5 330.6 L493.9 330.8 L494.3 331.1 L494.6 331.3 L495.0 331.6 L495.4 331.9 L495.7 332.1 L496.1 332.4 L496.5 332.7 L496.8 333.0 L497.2 333.3 L497.5 333.5 L497.9 333.8 L498.2 334.2 L498.6 334.5 L498.9 334.8 L499.2 335.1 L499.6 335.4 L499.9 335.8 L500.2 336.1 L500.5 336.4 L500.9 336.8 L501.2 337.1 L501.5 337.5 L501.8 337.8 L502.1 338.2 L502.4 338.5 L502.7 338.9 L503.0 339.3 L503.2 339.7 L503.5 340.0 L503.8 340.4 L504.1 340.8 L504.3 341.2 L504.6 341.6 L504.9 342.0 L505.1 342.4 L505.4 342.8 L505.6 343.2 L505.9 343.6 L506.1 344.0 L506.3 344.4 L506.6 344.8 L506.8 345.2 L507.0 345.6 L507.2 346.0 L507.4 346.5 L507.6 346.9 L507.8 347.3 L508.0 347.7 L508.2 348.1 L508.4 348.6 L508.6 349.0 L508.7 349.4 L508.9 349.8 L509.1 350.3 L509.2 350.7 L509.4 351.1 L509.5 351.5 L509.7 352.0 L509.8 352.4 L509.9 352.8 L510.1 353.2 L510.2 353.7 L510.3 354.1 L510.4 354.5 L510.5 354.9 L510.6 355.3 L510.7 355.8 L510.8 356.2 L510.9 356.6 L511.0 357.0 L511.0 357.4 L511.1 357.8 L511.1 358.2 L511.2 358.6 L511.2 359.0 L511.3 359.5 L511.3 359.9 L511.3 360.2 L511.3 360.6 L511.4 361.0 L511.4 361.4 L511.4 361.8 L511.4 362.2 L511.3 362.6 L511.3 362.9 L511.3 363.3 L511.3 363.7 L511.2 364.0 L511.2 364.4 L511.1 364.8 L511.1 365.1 L511.0 365.5 L510.9 365.8 L510.8 366.1 L510.8 366.5 L510.7 366.8 L510.6 367.1 L510.5 367.4 L510.3 367.8 L510.2 368.1 L510.1 368.4 L509.9 368.7 L509.8 369.0 L509.6 369.3 L509.5 369.5 L509.3 369.8 L509.2 370.1 L509.0 370.4 L508.8 370.6 L508.6 370.9 L508.4 371.1 L508.2 371.4 L508.0 371.6 L507.7 371.8 L507.5 372.0 L507.3 372.3 L507.0 372.5 L506.8 372.7 L506.5 372.9 L506.2 373.0 L506.0 373.2 L505.7 373.4 L505.4 373.6 L505.1 373.7 L504.8 373.9 L504.5 374.0 L504.2 374.2 L503.9 374.3 L503.5 374.4 L503.2 374.5 L502.9 374.6 L502.5 374.8 L502.2 374.8 L501.8 374.9 L501.4 375.0 L501.1 375.1 L500.7 375.1 L500.3 375.2 L499.9 375.3 L499.5 375.3 L499.1 375.3 L498.7 375.4 L498.3 375.4 L497.9 375.4 L497.5 375.4 L497.0 375.4 L496.6 375.4 L496.2 375.4 L495.7 375.3 L495.3 375.3 L494.8 375.3 L494.4 375.2 L493.9 375.1 L493.4 375.1 L493.0 375.0 L492.5 374.9 L492.0 374.8 L491.5 374.8 L491.1 374.6 L490.6 374.5 L490.1 374.4 L489.6 374.3 L489.1 374.2 L488.6 374.0 L488.1 373.9 L487.6 373.7 L487.1 373.6 L486.6 373.4 L486.1 373.2 L485.6 373.0 L485.1 372.9 L484.6 372.7 L484.1 372.5 L483.6 372.3 L483.1 372.0 L482.6 371.8 L482.1 371.6 L481.6 371.4 L481.1 371.1 L480.6 370.9 L480.1 370.6 L479.6 370.4 L479.1 370.1 L478.6 369.8 L478.1 369.5 L477.6 369.3 L477.1 369.0 L476.6 368.7 L476.2 368.4 L475.7 368.1 L475.2 367.8 L474.7 367.4 L474.3 367.1 L473.8 366.8 L473.3 366.5 L472.9 366.1 L472.4 365.8 L472.0 365.5 L471.5 365.1 L471.1 364.8 L470.7 364.4 L470.2 364.0 L469.8 363.7 L469.4 363.3 L469.0 362.9 L468.6 362.6 L468.2 362.2 L467.8 361.8 L467.4 361.4 L467.1 361.0 L466.7 360.6 L466.3 360.2 L466.0 359.9 L465.6 359.5 L465.3 359.0 L465.0 358.6 L464.6 358.2 L464.3 357.8 L464.0 357.4 L463.7 357.0 L463.4 356.6 L463.2 356.2 L462.9 355.8 L462.6 355.3 L462.4 354.9 L462.1 354.5 L461.9 354.1 L461.7 353.7 L461.4 353.2 L461.2 352.8 L461.0 352.4 L460.8 352.0 L460.7 351.5 L460.5 351.1 L460.3 350.7" fill="none" stroke="#ee82ee" stroke-width="2"/>
<path d="M368.7 250h7M372.2 246.5v7M367.2 253.3h7M370.7 249.8v7M1446.5 266h7M1450 262.5v7M471.2 350.7h7M474.7 347.2v7M493.8 354.7h7M497.3 351.2v7" stroke="#ff0000" stroke-width="1.3"/>
<g font-family="Liberation Sans, sans-serif" font-size="10" fill="#ffffff"><text x="358.5" text-anchor="middle" y="254">COM</text><text x="484.5" text-anchor="middle" y="354">AHY</text></g>
<g font-family="Liberation Mono, monospace" font-size="13.95" fill="#ffffff"><text x="316" y="30.20" xml:space="preserve">NZ002M</text><text x="316" y="43.13" xml:space="preserve">Beg: 20260108 11:14:41 (sol = 287.82°)</text><text x="316" y="56.06" xml:space="preserve">End: 20260108 15:40:23 (sol = 288.01°)</text><text x="316" y="68.99" xml:space="preserve">--------------------------------------</text><text x="316" y="81.92" xml:space="preserve">...: 20</text><text x="316" y="94.85" xml:space="preserve">COM: 3</text><text x="316" y="107.78" xml:space="preserve">AHY: 2</text></g>
<g font-family="Liberation Sans, sans-serif" font-size="29.5" fill="#5a5a5a"><line x1="73" y1="641.5" x2="73" y2="842.5" stroke="#5a5a5a" stroke-width="1.5" stroke-dasharray="2 4"/><line x1="217" y1="641.5" x2="217" y2="842.5" stroke="#5a5a5a" stroke-width="1.5" stroke-dasharray="2 4"/><line x1="364" y1="641.5" x2="364" y2="842.5" stroke="#5a5a5a" stroke-width="1.5" stroke-dasharray="2 4"/><line x1="504" y1="641.5" x2="504" y2="842.5" stroke="#5a5a5a" stroke-width="1.5" stroke-dasharray="2 4"/><line x1="650" y1="641.5" x2="650" y2="842.5" stroke="#5a5a5a" stroke-width="1.5" stroke-dasharray="2 4"/><line x1="796" y1="641.5" x2="796" y2="842.5" stroke="#5a5a5a" stroke-width="1.5" stroke-dasharray="2 4"/><line x1="939" y1="641.5" x2="939" y2="842.5" stroke="#5a5a5a" stroke-width="1.5" stroke-dasharray="2 4"/><line x1="1090" y1="641.5" x2="1090" y2="842.5" stroke="#5a5a5a" stroke-width="1.5" stroke-dasharray="2 4"/><line x1="1238" y1="641.5" x2="1238" y2="842.5" stroke="#5a5a5a" stroke-width="1.5" stroke-dasharray="2 4"/><line x1="1392" y1="641.5" x2="1392" y2="842.5" stroke="#5a5a5a" stroke-width="1.5" stroke-dasharray="2 4"/><line x1="1547" y1="641.5" x2="1547" y2="842.5" stroke="#5a5a5a" stroke-width="1.5" stroke-dasharray="2 4"/><line x1="1686" y1="641.5" x2="1686" y2="842.5" stroke="#5a5a5a" stroke-width="1.5" stroke-dasharray="2 4"/><text transform="translate(148.3,642.8) rotate(-90) scale(0.945,1)" text-anchor="end">APR</text><text transform="translate(294.3,644.4) rotate(-90) scale(0.945,1)" text-anchor="end">MAY</text><text transform="translate(435.3,642) rotate(-90) scale(0.945,1)" text-anchor="end">JUN</text><text transform="translate(575.3,641) rotate(-90) scale(0.945,1)" text-anchor="end">JUL</text><text transform="translate(723.3,642) rotate(-90) scale(0.945,1)" text-anchor="end">AUG</text><text transform="translate(872.3,643) rotate(-90) scale(0.945,1)" text-anchor="end">SEP</text><text transform="translate(1015.3,642.5) rotate(-90) scale(0.945,1)" text-anchor="end">OCT</text><text transform="translate(1168.3,642.5) rotate(-90) scale(0.945,1)" text-anchor="end">NOV</text><text transform="translate(1317.3,642.5) rotate(-90) scale(0.945,1)" text-anchor="end">DEC</text><text transform="translate(1468.3,642) rotate(-90) scale(0.945,1)" text-anchor="end">JAN</text><text transform="translate(1627.3,646) rotate(-90) scale(0.945,1)" text-anchor="end">FEB</text><text transform="translate(1764.3,645) rotate(-90) scale(0.945,1)" text-anchor="end">MAR</text></g>
<line x1="1432" y1="641.5" x2="1432" y2="842.5" stroke="#ff0000" stroke-width="2" stroke-dasharray="4 2.5"/>
<rect x="106" y="832.00" width="24" height="4" fill="#ee82ee"/><rect x="165" y="832.00" width="180" height="4" fill="#ee82ee"/><rect x="366" y="832.00" width="259" height="4" fill="#ee82ee"/><rect x="636" y="832.00" width="151" height="4" fill="#ee82ee"/><rect x="807" y="832.00" width="93" height="4" fill="#ee82ee"/><rect x="920" y="832.00" width="53" height="4" fill="#ee82ee"/><rect x="984" y="832.00" width="82" height="4" fill="#ee82ee"/><rect x="1082" y="832.00" width="122" height="4" fill="#ee82ee"/><rect x="1244" y="832.00" width="82" height="4" fill="#ee82ee"/><rect x="1337" y="832.00" width="19" height="4" fill="#ee82ee"/><rect x="1381" y="832.00" width="63" height="4" fill="#ee82ee"/><rect x="1459" y="832.00" width="53" height="4" fill="#ee82ee"/><rect x="1523" y="832.00" width="24" height="4" fill="#ee82ee"/><rect x="1724" y="832.00" width="24" height="4" fill="#ee82ee"/><rect x="1758" y="832.00" width="24" height="4" fill="#ee82ee"/><rect x="165" y="815.65" width="24" height="4" fill="#e01ef0"/><rect x="224" y="815.65" width="63" height="4" fill="#e01ef0"/><rect x="312" y="815.65" width="29" height="4" fill="#e01ef0"/><rect x="366" y="815.65" width="127" height="4" fill="#e01ef0"/><rect x="508" y="815.65" width="146" height="4" fill="#e01ef0"/><rect x="704" y="815.65" width="34" height="4" fill="#e01ef0"/><rect x="773" y="815.65" width="73" height="4" fill="#e01ef0"/><rect x="871" y="815.65" width="117" height="4" fill="#e01ef0"/><rect x="1003" y="815.65" width="14" height="4" fill="#e01ef0"/><rect x="1062" y="815.65" width="151" height="4" fill="#e01ef0"/><rect x="1244" y="815.65" width="23" height="4" fill="#e01ef0"/><rect x="1293" y="815.65" width="23" height="4" fill="#e01ef0"/><rect x="1342" y="815.65" width="23" height="4" fill="#e01ef0"/><rect x="1386" y="815.65" width="43" height="4" fill="#e01ef0"/><rect x="1459" y="815.65" width="24" height="4" fill="#e01ef0"/><rect x="1548" y="815.65" width="23" height="4" fill="#e01ef0"/><rect x="165" y="799.30" width="24" height="4" fill="#ff2200"/><rect x="258" y="799.30" width="230" height="4" fill="#ff2200"/><rect x="508" y="799.30" width="107" height="4" fill="#ff2200"/><rect x="626" y="799.30" width="92" height="4" fill="#ff2200"/><rect x="729" y="799.30" width="97" height="4" fill="#ff2200"/><rect x="949" y="799.30" width="201" height="4" fill="#ff2200"/><rect x="1160" y="799.30" width="88" height="4" fill="#ff2200"/><rect x="1258" y="799.30" width="186" height="4" fill="#ff2200"/><rect x="1459" y="799.30" width="24" height="4" fill="#ff2200"/><rect x="1553" y="799.30" width="23" height="4" fill="#ff2200"/><rect x="194" y="782.95" width="24" height="4" fill="#ffaa00"/><rect x="322" y="782.95" width="185" height="4" fill="#ffaa00"/><rect x="518" y="782.95" width="24" height="4" fill="#ffaa00"/><rect x="557" y="782.95" width="127" height="4" fill="#ffaa00"/><rect x="807" y="782.95" width="24" height="4" fill="#ffaa00"/><rect x="954" y="782.95" width="19" height="4" fill="#ffaa00"/><rect x="989" y="782.95" width="136" height="4" fill="#ffaa00"/><rect x="1155" y="782.95" width="63" height="4" fill="#ffaa00"/><rect x="1244" y="782.95" width="23" height="4" fill="#ffaa00"/><rect x="1317" y="782.95" width="24" height="4" fill="#ffaa00"/><rect x="1396" y="782.95" width="23" height="4" fill="#ffaa00"/><rect x="1464" y="782.95" width="186" height="4" fill="#ffaa00"/><rect x="341" y="766.60" width="29" height="4" fill="#fff000"/><rect x="410" y="766.60" width="38" height="4" fill="#fff000"/><rect x="469" y="766.60" width="24" height="4" fill="#fff000"/><rect x="528" y="766.60" width="18" height="4" fill="#fff000"/><rect x="562" y="766.60" width="29" height="4" fill="#fff000"/><rect x="616" y="766.60" width="33" height="4" fill="#fff000"/><rect x="959" y="766.60" width="29" height="4" fill="#fff000"/><rect x="1062" y="766.60" width="24" height="4" fill="#fff000"/><rect x="1101" y="766.60" width="24" height="4" fill="#fff000"/><rect x="1160" y="766.60" width="34" height="4" fill="#fff000"/><rect x="1249" y="766.60" width="23" height="4" fill="#fff000"/><rect x="1425" y="766.60" width="87" height="4" fill="#fff000"/><rect x="420" y="750.25" width="24" height="4" fill="#adff2f"/><rect x="533" y="750.25" width="23" height="4" fill="#adff2f"/><rect x="567" y="750.25" width="24" height="4" fill="#adff2f"/><rect x="621" y="750.25" width="122" height="4" fill="#adff2f"/><rect x="969" y="750.25" width="166" height="4" fill="#adff2f"/><rect x="1185" y="750.25" width="161" height="4" fill="#adff2f"/><rect x="1469" y="750.25" width="24" height="4" fill="#adff2f"/><rect x="430" y="733.90" width="23" height="4" fill="#5ad200"/><rect x="577" y="733.90" width="156" height="4" fill="#5ad200"/><rect x="994" y="733.90" width="111" height="4" fill="#5ad200"/><rect x="1116" y="733.90" width="107" height="4" fill="#5ad200"/><rect x="1263" y="733.90" width="29" height="4" fill="#5ad200"/><rect x="1489" y="733.90" width="23" height="4" fill="#5ad200"/><rect x="592" y="717.55" width="23" height="4" fill="#00e676"/><rect x="655" y="717.55" width="117" height="4" fill="#00e676"/><rect x="1072" y="717.55" width="171" height="4" fill="#00e676"/><rect x="1263" y="717.55" width="24" height="4" fill="#00e676"/><rect x="596" y="701.20" width="137" height="4" fill="#00d7f5"/><rect x="1092" y="701.20" width="28" height="4" fill="#00d7f5"/><rect x="1200" y="701.20" width="23" height="4" fill="#00d7f5"/><rect x="1273" y="701.20" width="53" height="4" fill="#00d7f5"/><rect x="1111" y="684.85" width="24" height="4" fill="#0014dc"/>
<path d="M113.8 834.00h8M117.8 830.00v8M241.0 834.00h8M245.0 830.00v8M511.0 834.00h8M515.0 830.00v8M707.0 834.00h8M711.0 830.00v8M834.0 834.00h8M838.0 830.00v8M962.0 834.00h8M966.0 830.00v8M987.0 834.00h8M991.0 830.00v8M1117.0 834.00h8M1121.0 830.00v8M1296.0 834.00h8M1300.0 830.00v8M1342.0 834.00h8M1346.0 830.00v8M1413.0 834.00h8M1417.0 830.00v8M1482.0 834.00h8M1486.0 830.00v8M1531.0 834.00h8M1535.0 830.00v8M1732.0 834.00h8M1736.0 830.00v8M1766.0 834.00h8M1770.0 830.00v8M173.0 817.65h8M177.0 813.65v8M256.0 817.65h8M260.0 813.65v8M324.0 817.65h8M328.0 813.65v8M438.0 817.65h8M442.0 813.65v8M599.0 817.65h8M603.0 813.65v8M717.0 817.65h8M721.0 813.65v8M794.0 817.65h8M798.0 813.65v8M940.0 817.65h8M944.0 813.65v8M1006.0 817.65h8M1010.0 813.65v8M1153.0 817.65h8M1157.0 813.65v8M1251.0 817.65h8M1255.0 813.65v8M1300.0 817.65h8M1304.0 813.65v8M1350.0 817.65h8M1354.0 813.65v8M1403.0 817.65h8M1407.0 813.65v8M1467.0 817.65h8M1471.0 813.65v8M1555.0 817.65h8M1559.0 813.65v8M175.0 801.30h8M179.0 797.30v8M378.0 801.30h8M382.0 797.30v8M545.0 801.30h8M549.0 797.30v8M683.0 801.30h8M687.0 797.30v8M742.0 801.30h8M746.0 797.30v8M1075.0 801.30h8M1079.0 797.30v8M1217.0 801.30h8M1221.0 797.30v8M1305.0 801.30h8M1309.0 797.30v8M1467.0 801.30h8M1471.0 797.30v8M1560.0 801.30h8M1564.0 797.30v8M202.0 784.95h8M206.0 780.95v8M400.0 784.95h8M404.0 780.95v8M526.0 784.95h8M530.0 780.95v8M639.0 784.95h8M643.0 780.95v8M815.0 784.95h8M819.0 780.95v8M960.0 784.95h8M964.0 780.95v8M1041.0 784.95h8M1045.0 780.95v8M1188.0 784.95h8M1192.0 780.95v8M1251.0 784.95h8M1255.0 780.95v8M1325.0 784.95h8M1329.0 780.95v8M1403.0 784.95h8M1407.0 780.95v8M1546.0 784.95h8M1550.0 780.95v8M356.0 768.60h8M360.0 764.60v8M427.0 768.60h8M431.0 764.60v8M477.0 768.60h8M481.0 764.60v8M536.0 768.60h8M540.0 764.60v8M571.0 768.60h8M575.0 764.60v8M631.0 768.60h8M635.0 764.60v8M974.0 768.60h8M978.0 764.60v8M1070.0 768.60h8M1074.0 764.60v8M1109.0 768.60h8M1113.0 764.60v8M1178.0 768.60h8M1182.0 764.60v8M1256.0 768.60h8M1260.0 764.60v8M1467.0 768.60h8M1471.0 764.60v8M427.6 752.25h8M431.6 748.25v8M540.0 752.25h8M544.0 748.25v8M575.0 752.25h8M579.0 748.25v8M704.0 752.25h8M708.0 748.25v8M1095.0 752.25h8M1099.0 748.25v8M1271.0 752.25h8M1275.0 748.25v8M1477.0 752.25h8M1481.0 748.25v8M438.0 735.90h8M442.0 731.90v8M631.0 735.90h8M635.0 731.90v8M1039.0 735.90h8M1043.0 731.90v8M1168.0 735.90h8M1172.0 731.90v8M1275.0 735.90h8M1279.0 731.90v8M1497.0 735.90h8M1501.0 731.90v8M599.0 719.55h8M603.0 715.55v8M727.0 719.55h8M731.0 715.55v8M1188.0 719.55h8M1192.0 715.55v8M1271.0 719.55h8M1275.0 715.55v8M688.0 703.20h8M692.0 699.20v8M1102.0 703.20h8M1106.0 699.20v8M1207.0 703.20h8M1211.0 699.20v8M1300.0 703.20h8M1304.0 699.20v8M1119.0 686.85h8M1123.0 682.85v8" stroke="#ffffff" stroke-width="2" fill="none"/>
<g font-family="Liberation Sans, sans-serif" font-size="10.4" fill="#f0f0f0"><text transform="translate(118.0,831.70) scale(1.06,1)" text-anchor="middle">KSE</text><text transform="translate(255.0,831.70) scale(1.06,1)" text-anchor="middle">ETA</text><text transform="translate(495.5,831.70) scale(1.06,1)" text-anchor="middle">NZC</text><text transform="translate(711.5,831.70) scale(1.06,1)" text-anchor="middle">NDA</text><text transform="translate(853.5,831.70) scale(1.06,1)" text-anchor="middle">SPE</text><text transform="translate(946.5,831.70) scale(1.06,1)" text-anchor="middle">ARD</text><text transform="translate(1025.0,831.70) scale(1.06,1)" text-anchor="middle">EGE</text><text transform="translate(1143.0,831.70) scale(1.06,1)" text-anchor="middle">NTA</text><text transform="translate(1285.0,831.70) scale(1.06,1)" text-anchor="middle">MON</text><text transform="translate(1346.5,831.70) scale(1.06,1)" text-anchor="middle">URS</text><text transform="translate(1412.5,831.70) scale(1.06,1)" text-anchor="middle">AHY</text><text transform="translate(1485.5,831.70) scale(1.06,1)" text-anchor="middle">GUM</text><text transform="translate(1535.0,831.70) scale(1.06,1)" text-anchor="middle">OHY</text><text transform="translate(1736.0,831.70) scale(1.06,1)" text-anchor="middle">XHE</text><text transform="translate(1770.0,831.70) scale(1.06,1)" text-anchor="middle">EVI</text><text transform="translate(177.0,815.35) scale(1.06,1)" text-anchor="middle">AVB</text><text transform="translate(255.5,815.35) scale(1.06,1)" text-anchor="middle">ELY</text><text transform="translate(326.5,815.35) scale(1.06,1)" text-anchor="middle">CAM</text><text transform="translate(429.5,815.35) scale(1.06,1)" text-anchor="middle">SSG</text><text transform="translate(581.0,815.35) scale(1.06,1)" text-anchor="middle">PCA</text><text transform="translate(721.0,815.35) scale(1.06,1)" text-anchor="middle">AUD</text><text transform="translate(809.5,815.35) scale(1.06,1)" text-anchor="middle">AUR</text><text transform="translate(929.5,815.35) scale(1.06,1)" text-anchor="middle">DSX</text><text transform="translate(1010.0,815.35) scale(1.06,1)" text-anchor="middle">OCU</text><text transform="translate(1137.5,815.35) scale(1.06,1)" text-anchor="middle">OER</text><text transform="translate(1255.5,815.35) scale(1.06,1)" text-anchor="middle">DKD</text><text transform="translate(1304.5,815.35) scale(1.06,1)" text-anchor="middle">DSV</text><text transform="translate(1353.5,815.35) scale(1.06,1)" text-anchor="middle">ALY</text><text transform="translate(1407.5,815.35) scale(1.06,1)" text-anchor="middle">JLE</text><text transform="translate(1471.0,815.35) scale(1.06,1)" text-anchor="middle">SCC</text><text transform="translate(1559.5,815.35) scale(1.06,1)" text-anchor="middle">FEV</text><text transform="translate(177.0,799.00) scale(1.06,1)" text-anchor="middle">LYR</text><text transform="translate(373.0,799.00) scale(1.06,1)" text-anchor="middle">JMC</text><text transform="translate(561.5,799.00) scale(1.06,1)" text-anchor="middle">JPE</text><text transform="translate(672.0,799.00) scale(1.06,1)" text-anchor="middle">PAU</text><text transform="translate(777.5,799.00) scale(1.06,1)" text-anchor="middle">NIA</text><text transform="translate(1049.5,799.00) scale(1.06,1)" text-anchor="middle">STA</text><text transform="translate(1204.0,799.00) scale(1.06,1)" text-anchor="middle">NOO</text><text transform="translate(1351.0,799.00) scale(1.06,1)" text-anchor="middle">COM</text><text transform="translate(1471.0,799.00) scale(1.06,1)" text-anchor="middle">NCC</text><text transform="translate(1564.5,799.00) scale(1.06,1)" text-anchor="middle">FED</text><text transform="translate(206.0,782.65) scale(1.06,1)" text-anchor="middle">HVI</text><text transform="translate(414.5,782.65) scale(1.06,1)" text-anchor="middle">ARI</text><text transform="translate(530.0,782.65) scale(1.06,1)" text-anchor="middle">SZC</text><text transform="translate(620.5,782.65) scale(1.06,1)" text-anchor="middle">CAP</text><text transform="translate(819.0,782.65) scale(1.06,1)" text-anchor="middle">NUE</text><text transform="translate(963.5,782.65) scale(1.06,1)" text-anchor="middle">OCT</text><text transform="translate(1057.0,782.65) scale(1.06,1)" text-anchor="middle">ORI</text><text transform="translate(1186.5,782.65) scale(1.06,1)" text-anchor="middle">AMO</text><text transform="translate(1255.5,782.65) scale(1.06,1)" text-anchor="middle">DPC</text><text transform="translate(1329.0,782.65) scale(1.06,1)" text-anchor="middle">XVI</text><text transform="translate(1407.5,782.65) scale(1.06,1)" text-anchor="middle">QUA</text><text transform="translate(1557.0,782.65) scale(1.06,1)" text-anchor="middle">AAN</text><text transform="translate(355.5,766.30) scale(1.06,1)" text-anchor="middle">TAH</text><text transform="translate(429.0,766.30) scale(1.06,1)" text-anchor="middle">JEA</text><text transform="translate(481.0,766.30) scale(1.06,1)" text-anchor="middle">JIP</text><text transform="translate(537.0,766.30) scale(1.06,1)" text-anchor="middle">PPS</text><text transform="translate(576.5,766.30) scale(1.06,1)" text-anchor="middle">ZCS</text><text transform="translate(632.5,766.30) scale(1.06,1)" text-anchor="middle">GDR</text><text transform="translate(973.5,766.30) scale(1.06,1)" text-anchor="middle">DRA</text><text transform="translate(1074.0,766.30) scale(1.06,1)" text-anchor="middle">LUM</text><text transform="translate(1113.0,766.30) scale(1.06,1)" text-anchor="middle">RPU</text><text transform="translate(1177.0,766.30) scale(1.06,1)" text-anchor="middle">THA</text><text transform="translate(1260.5,766.30) scale(1.06,1)" text-anchor="middle">PSU</text><text transform="translate(1468.5,766.30) scale(1.06,1)" text-anchor="middle">XCB</text><text transform="translate(432.0,749.95) scale(1.06,1)" text-anchor="middle">IRC</text><text transform="translate(544.5,749.95) scale(1.06,1)" text-anchor="middle">CAN</text><text transform="translate(579.0,749.95) scale(1.06,1)" text-anchor="middle">FAN</text><text transform="translate(682.0,749.95) scale(1.06,1)" text-anchor="middle">PER</text><text transform="translate(1052.0,749.95) scale(1.06,1)" text-anchor="middle">CTA</text><text transform="translate(1265.5,749.95) scale(1.06,1)" text-anchor="middle">HYD</text><text transform="translate(1481.0,749.95) scale(1.06,1)" text-anchor="middle">XUM</text><text transform="translate(441.5,733.60) scale(1.06,1)" text-anchor="middle">COR</text><text transform="translate(655.0,733.60) scale(1.06,1)" text-anchor="middle">SDA</text><text transform="translate(1049.5,733.60) scale(1.06,1)" text-anchor="middle">LMI</text><text transform="translate(1169.5,733.60) scale(1.06,1)" text-anchor="middle">LEO</text><text transform="translate(1277.5,733.60) scale(1.06,1)" text-anchor="middle">EHY</text><text transform="translate(1500.5,733.60) scale(1.06,1)" text-anchor="middle">ECV</text><text transform="translate(603.5,717.25) scale(1.06,1)" text-anchor="middle">JXA</text><text transform="translate(713.5,717.25) scale(1.06,1)" text-anchor="middle">KCG</text><text transform="translate(1157.5,717.25) scale(1.06,1)" text-anchor="middle">AND</text><text transform="translate(1275.0,717.25) scale(1.06,1)" text-anchor="middle">DAD</text><text transform="translate(664.5,700.90) scale(1.06,1)" text-anchor="middle">ERI</text><text transform="translate(1106.0,700.90) scale(1.06,1)" text-anchor="middle">SLD</text><text transform="translate(1211.5,700.90) scale(1.06,1)" text-anchor="middle">ORS</text><text transform="translate(1299.5,700.90) scale(1.06,1)" text-anchor="middle">GEM</text><text transform="translate(1123.0,684.55) scale(1.06,1)" text-anchor="middle">KUM</text></g>
<rect x="20.5" y="641.5" width="1765.0" height="201.0" fill="none" stroke="#ffffff" stroke-width="1.2"/>
<path d="M20.5 842.5v4.5M265.6 842.5v4.5M510.8 842.5v4.5M755.9 842.5v4.5M1001.1 842.5v4.5M1246.2 842.5v4.5M1491.3 842.5v4.5M1736.5 842.5v4.5" stroke="#ffffff" stroke-width="1.2"/>
<g font-family="Liberation Sans, sans-serif" font-size="13" fill="#ffffff"><text transform="translate(20.5,861.6) scale(1.1,1)" text-anchor="middle">0</text><text transform="translate(265.6,861.6) scale(1.1,1)" text-anchor="middle">50</text><text transform="translate(510.8,861.6) scale(1.1,1)" text-anchor="middle">100</text><text transform="translate(755.9,861.6) scale(1.1,1)" text-anchor="middle">150</text><text transform="translate(1001.1,861.6) scale(1.1,1)" text-anchor="middle">200</text><text transform="translate(1246.2,861.6) scale(1.1,1)" text-anchor="middle">250</text><text transform="translate(1491.3,861.6) scale(1.1,1)" text-anchor="middle">300</text><text transform="translate(1736.5,861.6) scale(1.1,1)" text-anchor="middle">350</text><text transform="translate(902.3,882) scale(1.19,1)" font-size="13.5" text-anchor="middle">Solar longitude (deg)</text></g>
</svg>
</body></html>
